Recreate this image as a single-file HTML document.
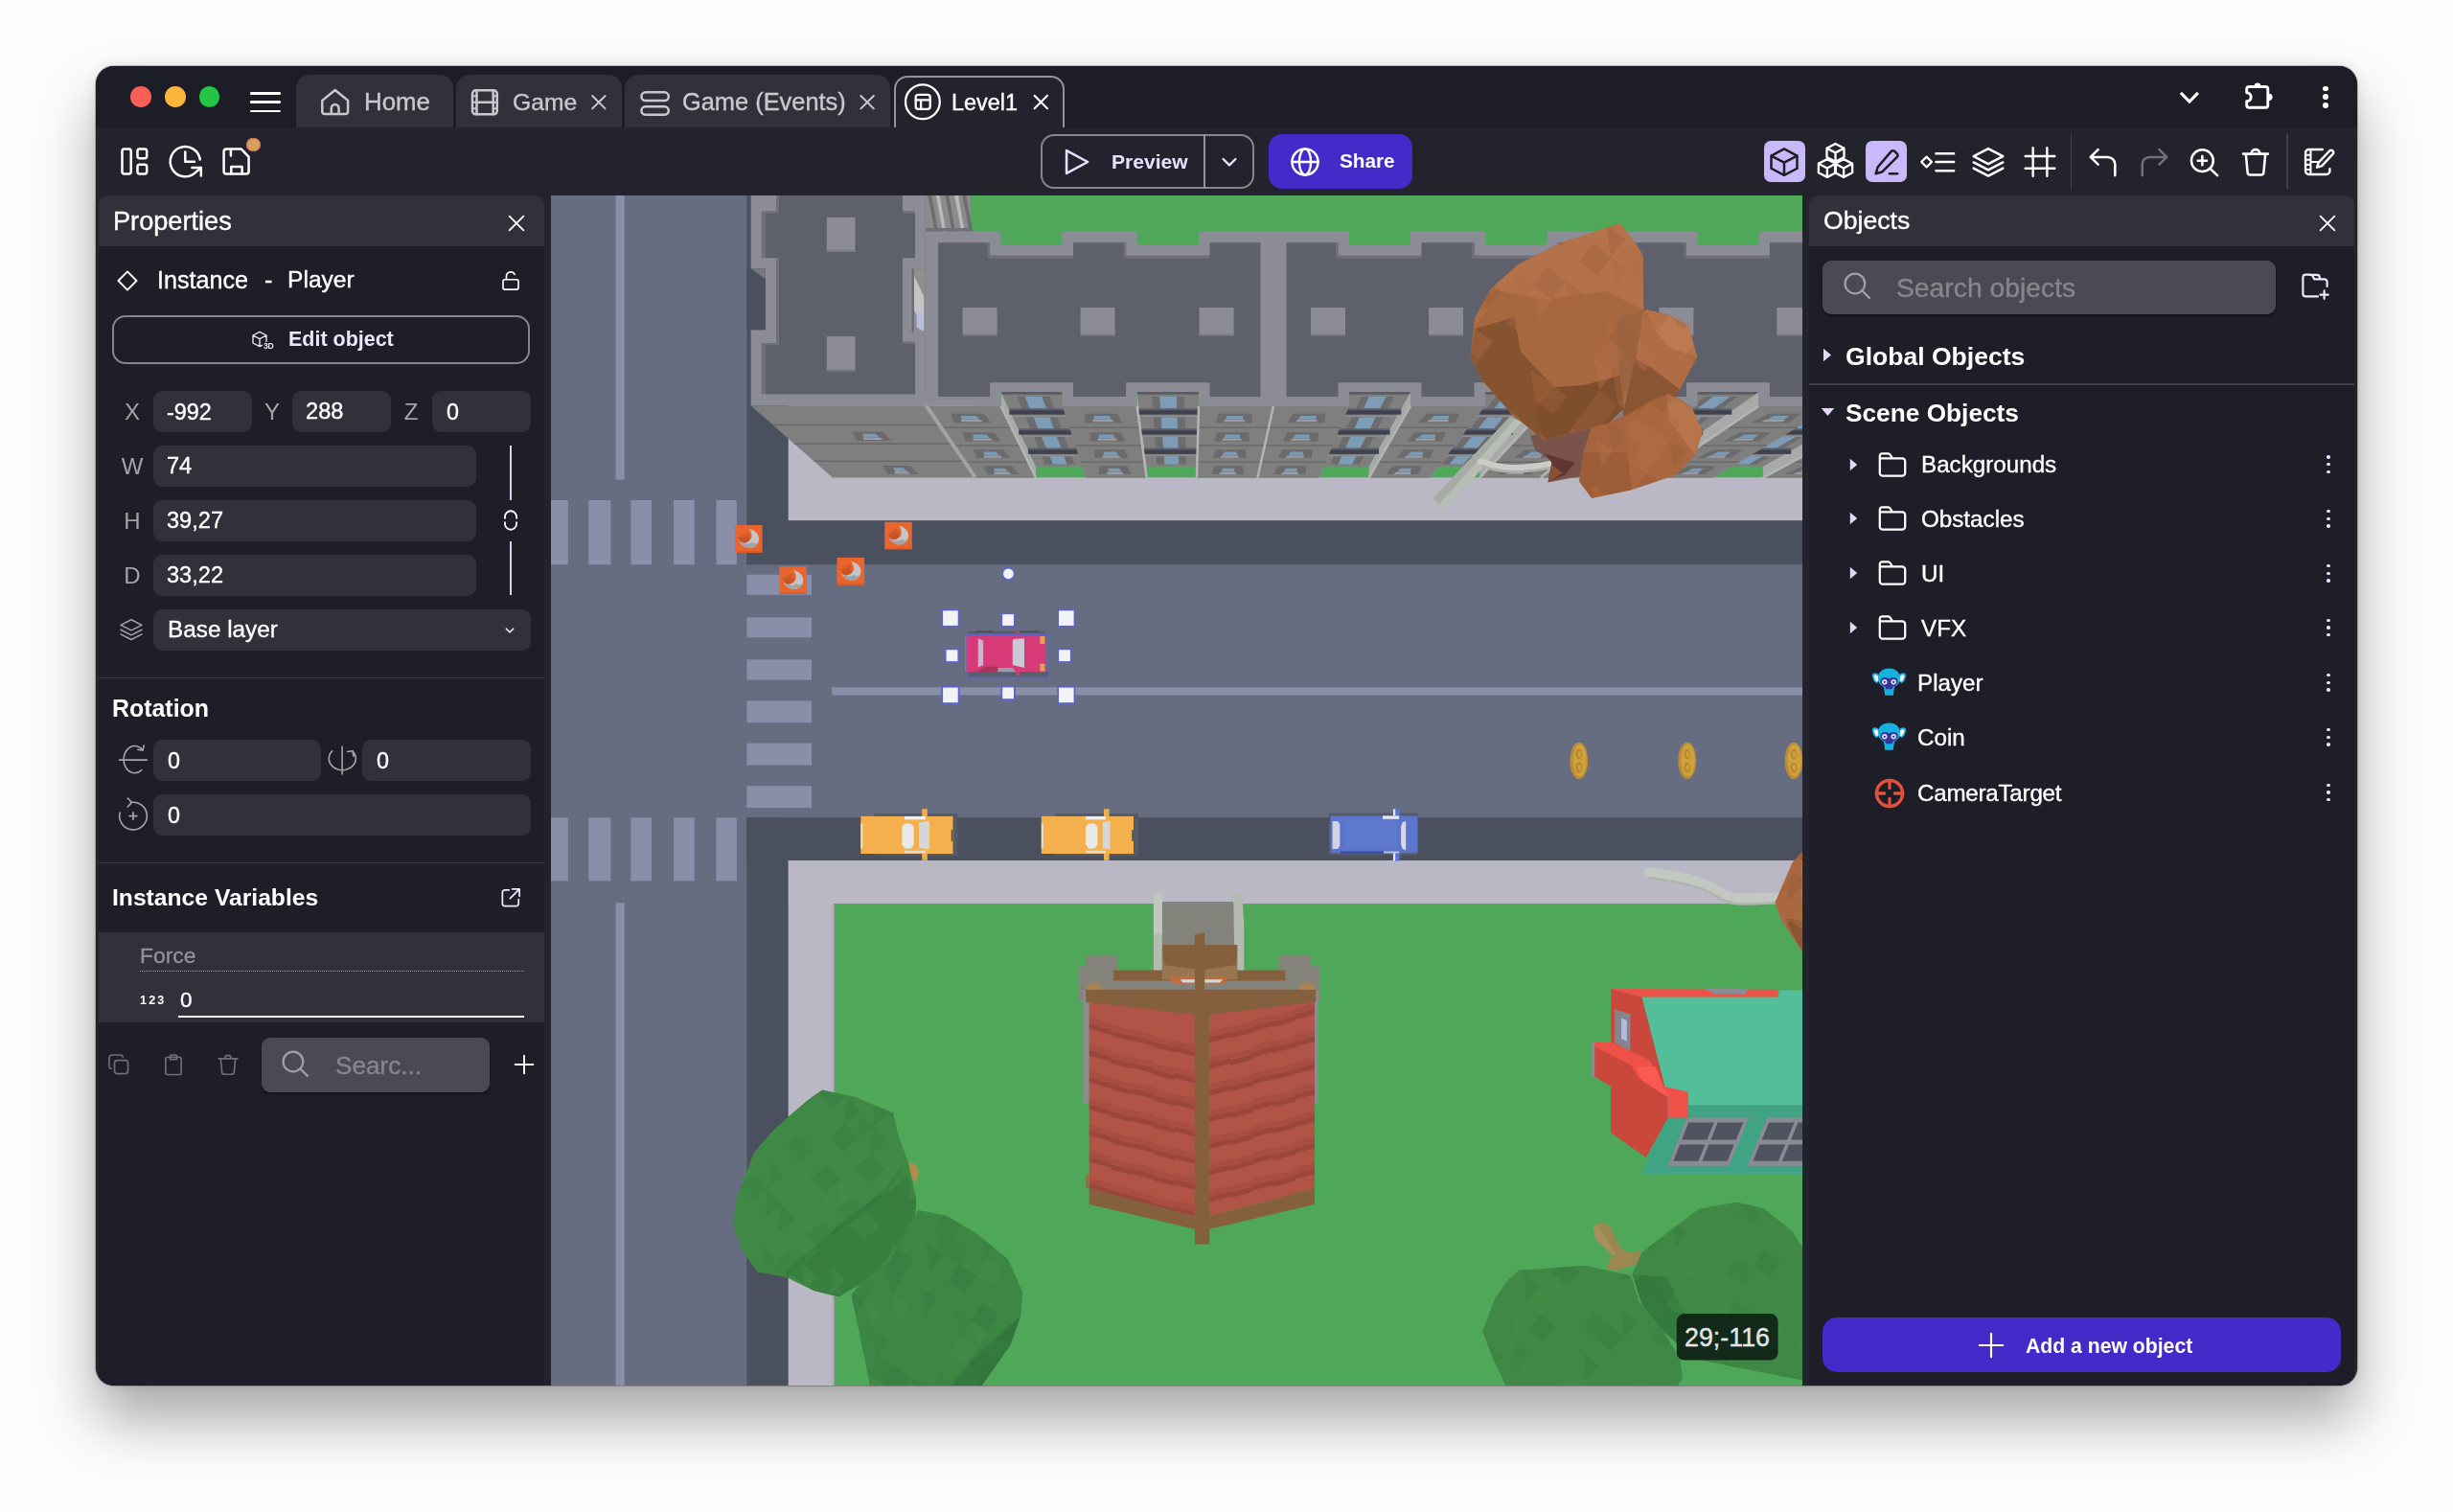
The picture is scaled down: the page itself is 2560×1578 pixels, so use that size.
<!DOCTYPE html>
<html lang="en"><head><meta charset="utf-8"><title>GDevelop - Level1</title>
<style>
html,body{margin:0;padding:0;width:2560px;height:1578px;background:#fcfcfc;overflow:hidden;font-family:"Liberation Sans",sans-serif;}
#sh{position:absolute;left:100px;top:68.5px;width:2360px;height:1377.5px;border-radius:19px;box-shadow:0 0 0 1px rgba(0,0,0,.22),0 36px 60px rgba(0,0,0,.33),0 0 12px rgba(0,0,0,.10);}
#win{position:absolute;left:100px;top:68.5px;width:2360px;height:1377.5px;border-radius:19px;background:#1c1d26;overflow:hidden;}
#o{position:absolute;left:-100px;top:-68.5px;width:2560px;height:1578px;}
.b{position:absolute;}
.t{position:absolute;white-space:nowrap;line-height:1;will-change:transform;-webkit-font-smoothing:antialiased;}
.i{position:absolute;overflow:visible;}
</style></head>
<body>
<div id="sh"></div>
<div id="win"><div id="o">
<div class="b" style="left:100.0px;top:68.0px;width:2360.0px;height:65.0px;background:#1c1d26"></div>
<div class="b" style="left:136.4px;top:90.2px;width:21.6px;height:21.6px;background:#f95f57;border-radius:50%"></div>
<div class="b" style="left:172.0px;top:90.2px;width:21.6px;height:21.6px;background:#fdb53c;border-radius:50%"></div>
<div class="b" style="left:207.6px;top:90.2px;width:21.6px;height:21.6px;background:#22c546;border-radius:50%"></div>
<div class="b" style="left:261.4px;top:96.1px;width:31.2px;height:2.6px;background:#fff;border-radius:1.3px"></div>
<div class="b" style="left:261.4px;top:105.3px;width:31.2px;height:2.6px;background:#fff;border-radius:1.3px"></div>
<div class="b" style="left:261.4px;top:114.5px;width:31.2px;height:2.6px;background:#fff;border-radius:1.3px"></div>
<div class="b" style="left:308.7px;top:78.0px;width:163.9px;height:55.0px;background:#30313b;border-radius:14px 14px 0 0"></div>
<div class="b" style="left:476.0px;top:78.0px;width:172.7px;height:55.0px;background:#30313b;border-radius:14px 14px 0 0"></div>
<div class="b" style="left:652.3px;top:78.0px;width:276.7px;height:55.0px;background:#30313b;border-radius:14px 14px 0 0"></div>
<div class="b" style="left:932.6px;top:78.5px;width:178.7px;height:56.5px;background:#22232d;border:2px solid #92929b;border-bottom:none;border-radius:14px 14px 0 0;box-sizing:border-box"></div>
<svg class="i" style="left:330.0px;top:88.0px" width="40.0" height="38.0" viewBox="330.0 88.0 40.0 38.0" fill="none" stroke-linecap="round" stroke-linejoin="round"><path d="M336.3 104.9 L349.7 94 L363.1 104.9 V116.3 a2.8 2.8 0 0 1 -2.8 2.8 H339.1 a2.8 2.8 0 0 1 -2.8 -2.8 Z M345.8 119 V112.9 a3.9 3.9 0 0 1 7.8 0 V119" stroke="#c9c9cd" stroke-width="2.5"/></svg>
<div class="t" style="left:379.6px;top:93.9px;font-size:25.87px;color:#c9c9cd;-webkit-text-stroke:0.35px #c9c9cd;">Home</div>
<svg class="i" style="left:486.0px;top:88.0px" width="40.0" height="38.0" viewBox="486.0 88.0 40.0 38.0" fill="none" stroke-linecap="round" stroke-linejoin="round"><rect x="493" y="94.3" width="25.8" height="25" rx="3.6" stroke="#c9c9cd" stroke-width="2.5"/><path d="M497.5 94.3 V119.3 M514.7 94.3 V119.3 M497.5 106.8 H514.7" stroke="#c9c9cd" stroke-width="2.5"/><path d="M493 100.3 H497.5 M493 106.8 H497.5 M493 113.3 H497.5 M514.7 100.3 H518.8 M514.7 106.8 H518.8 M514.7 113.3 H518.8" stroke="#c9c9cd" stroke-width="2"/></svg>
<div class="t" style="left:535.0px;top:94.9px;font-size:24.68px;color:#c9c9cd;-webkit-text-stroke:0.35px #c9c9cd;">Game</div>
<svg class="i" style="left:612.0px;top:94.0px" width="26.0" height="26.0" viewBox="612.0 94.0 26.0 26.0" fill="none" stroke-linecap="round" stroke-linejoin="round"><path d="M618.2 100 L631.6 113.4 M631.6 100 L618.2 113.4" stroke="#c9c9cd" stroke-width="2"/></svg>
<svg class="i" style="left:662.0px;top:88.0px" width="44.0" height="38.0" viewBox="662.0 88.0 44.0 38.0" fill="none" stroke-linecap="round" stroke-linejoin="round"><rect x="669.4" y="96.3" width="28.4" height="8.8" rx="4.4" stroke="#c9c9cd" stroke-width="2.5"/><rect x="669.4" y="111.3" width="28.4" height="8.4" rx="4.2" stroke="#c9c9cd" stroke-width="2.5"/></svg>
<div class="t" style="left:712.0px;top:94.3px;font-size:25.40px;color:#c9c9cd;-webkit-text-stroke:0.35px #c9c9cd;">Game (Events)</div>
<svg class="i" style="left:892.0px;top:94.0px" width="26.0" height="26.0" viewBox="892.0 94.0 26.0 26.0" fill="none" stroke-linecap="round" stroke-linejoin="round"><path d="M898.4 100 L911.8 113.4 M911.8 100 L898.4 113.4" stroke="#c9c9cd" stroke-width="2"/></svg>
<svg class="i" style="left:940.0px;top:84.0px" width="46.0" height="46.0" viewBox="940.0 84.0 46.0 46.0" fill="none" stroke-linecap="round" stroke-linejoin="round"><circle cx="962.9" cy="106.3" r="17.9" stroke="#fff" stroke-width="2.3"/><rect x="955.7" y="98.9" width="15" height="15" rx="2.6" stroke="#fff" stroke-width="2.3"/><path d="M955.7 104.4 H970.7 M961.1 104.4 V113.9" stroke="#fff" stroke-width="2.3"/></svg>
<div class="t" style="left:993.1px;top:95.9px;font-size:23.38px;color:#ffffff;-webkit-text-stroke:0.35px #ffffff;">Level1</div>
<svg class="i" style="left:1072.0px;top:94.0px" width="28.0" height="26.0" viewBox="1072.0 94.0 28.0 26.0" fill="none" stroke-linecap="round" stroke-linejoin="round"><path d="M1079.6 99.8 L1093 113.2 M1093 99.8 L1079.600 113.2" stroke="#fff" stroke-width="2.1"/></svg>
<svg class="i" style="left:2268.0px;top:88.0px" width="34.0" height="28.0" viewBox="2268.0 88.0 34.0 28.0" fill="none" stroke-linecap="round" stroke-linejoin="round"><path d="M2275.9 96.9 L2284.9 106.100 L2293.900 96.900" stroke="#fff" stroke-width="3.1" stroke-linecap="butt" stroke-linejoin="miter"/></svg>
<svg class="i" style="left:2336.0px;top:80.0px" width="42.0" height="40.0" viewBox="2336.0 80.0 42.0 40.0" fill="none" stroke-linecap="round" stroke-linejoin="round"><circle cx="2356" cy="89.8" r="3.4" fill="#fff"/><circle cx="2368" cy="101.3" r="3.6" fill="#fff"/><path d="M2347.2 90.5 H2364.3 a2.5 2.5 0 0 1 2.5 2.5 V109.8 a2.5 2.5 0 0 1 -2.5 2.5 H2347.2 a2.5 2.5 0 0 1 -2.5 -2.5 V105.8 a4.5 4.5 0 0 0 0 -9 V93 a2.5 2.5 0 0 1 2.5 -2.5 Z" stroke="#fff" stroke-width="2.9" fill="#1c1d26"/></svg>
<div class="b" style="left:2423.9px;top:89.5px;width:5.8px;height:5.8px;background:#fff;border-radius:50%"></div>
<div class="b" style="left:2423.9px;top:98.3px;width:5.8px;height:5.8px;background:#fff;border-radius:50%"></div>
<div class="b" style="left:2423.9px;top:107.2px;width:5.8px;height:5.8px;background:#fff;border-radius:50%"></div>
<div class="b" style="left:100.0px;top:133.0px;width:2360.0px;height:71.0px;background:#22232d"></div>
<svg class="i" style="left:120.0px;top:148.0px" width="40.0" height="42.0" viewBox="120.0 148.0 40.0 42.0" fill="none" stroke-linecap="round" stroke-linejoin="round"><rect x="127.5" y="155.6" width="9.2" height="25.9" rx="2.2" stroke="#fff" stroke-width="2.5"/><rect x="143.5" y="155.6" width="9.7" height="9.7" rx="2.2" stroke="#fff" stroke-width="2.5"/><rect x="143.5" y="171.8" width="9.7" height="9.7" rx="2.2" stroke="#fff" stroke-width="2.5"/></svg>
<svg class="i" style="left:172.0px;top:146.0px" width="44.0" height="44.0" viewBox="172.0 146.0 44.0 44.0" fill="none" stroke-linecap="round" stroke-linejoin="round"><path d="M208.75 166.5 A15.6 15.6 0 1 0 203.3 180.65 L209.8 175 M200.4 175 H209.8 V183.6" stroke="#fff" stroke-width="2.5"/><path d="M193.3 158.6 V168.7 H203" stroke="#fff" stroke-width="2.5"/></svg>
<svg class="i" style="left:226.0px;top:148.0px" width="42.0" height="42.0" viewBox="226.0 148.0 42.0 42.0" fill="none" stroke-linecap="round" stroke-linejoin="round"><path d="M236.4 155.4 H251.6 L259.6 163.6 V178.7 a2.8 2.8 0 0 1 -2.8 2.8 H236.4 a2.8 2.8 0 0 1 -2.8 -2.8 V158.2 a2.8 2.8 0 0 1 2.8 -2.8 Z" stroke="#fff" stroke-width="2.5"/><path d="M240.9 157.2 V162.6" stroke="#fff" stroke-width="2.5"/><path d="M241.3 181.2 V174 H252.6 V181.2" stroke="#fff" stroke-width="2.5"/></svg>
<div class="b" style="left:257.4px;top:143.5px;width:14.6px;height:14.6px;background:#d8a05a;border-radius:50%;box-shadow:0 0 0 1px rgba(230,95,80,.75) inset"></div>
<div class="b" style="left:1086.0px;top:140.0px;width:223.0px;height:57.0px;border:2px solid #858591;border-radius:14px;box-sizing:border-box"></div>
<div class="b" style="left:1256.0px;top:140.0px;width:2.0px;height:57.0px;background:#a08da4"></div>
<svg class="i" style="left:1106.4px;top:151.7px;" width="34.0" height="34.0" viewBox="0 0 24 24" fill="none" stroke-linecap="round" stroke-linejoin="round"><path d="M5 3.6 L20.6 12 L5 20.4 Z" stroke="#e9e1fd" stroke-width="1.80"/></svg>
<div class="t" style="left:1160.3px;top:157.6px;font-size:21.08px;color:#e9e1fd;font-weight:700;">Preview</div>
<svg class="i" style="left:1270.6px;top:157.3px;" width="24.0" height="24.0" viewBox="0 0 24 24" fill="none" stroke-linecap="round" stroke-linejoin="round"><path d="M5.6 9 L12 15.4 L18.4 9" stroke="#e9e1fd" stroke-width="2.40"/></svg>
<div class="b" style="left:1323.6px;top:140.4px;width:150.8px;height:56.4px;background:#442ac8;border-radius:14px"></div>
<svg class="i" style="left:1345.3px;top:151.5px;" width="34.0" height="34.0" viewBox="0 0 24 24" fill="none" stroke-linecap="round" stroke-linejoin="round"><circle cx="12" cy="12" r="9.6" stroke="#ffffff" stroke-width="1.70"/><ellipse cx="12" cy="12" rx="4.3" ry="9.6" stroke="#ffffff" stroke-width="1.70"/><path d="M2.4 12 H21.6" stroke="#ffffff" stroke-width="1.70"/></svg>
<div class="t" style="left:1398.4px;top:157.9px;font-size:20.72px;color:#ffffff;font-weight:700;">Share</div>
<div class="b" style="left:1841.0px;top:146.8px;width:42.8px;height:43.1px;background:#c9b8fa;border-radius:7px"></div>
<svg class="i" style="left:1844.3px;top:150.6px;" width="36.0" height="36.0" viewBox="0 0 24 24" fill="none" stroke-linecap="round" stroke-linejoin="round"><path d="M12 2.9 L21 7.7 V16.5 L12 21.2 L3 16.5 V7.7 Z M3 7.7 L12 12.4 L21 7.7 M12 12.4 V21.2" stroke="#1d1d26" stroke-width="1.65"/></svg>
<svg class="i" style="left:1893.2px;top:146.9px;" width="45.0" height="45.0" viewBox="0 0 24 24" fill="none" stroke-linecap="round" stroke-linejoin="round"><path d="M12.0 1.6 l4.8 2.5 v5 l-4.8 2.5 l-4.8 -2.5 v-5 Z m-4.8 2.5 l4.8 2.5 l4.8 -2.5 m-4.8 2.5 v5" stroke="#ffffff" stroke-width="1.25"/><path d="M7.4 10.2 l4.8 2.5 v5 l-4.8 2.5 l-4.8 -2.5 v-5 Z m-4.8 2.5 l4.8 2.5 l4.8 -2.5 m-4.8 2.5 v5" stroke="#ffffff" stroke-width="1.25"/><path d="M16.6 10.2 l4.8 2.5 v5 l-4.8 2.5 l-4.8 -2.5 v-5 Z m-4.8 2.5 l4.8 2.5 l4.8 -2.5 m-4.8 2.5 v5" stroke="#ffffff" stroke-width="1.25"/></svg>
<div class="b" style="left:1947.4px;top:146.8px;width:42.7px;height:43.1px;background:#c9b8fa;border-radius:7px"></div>
<svg class="i" style="left:1950.6px;top:150.6px;" width="36.0" height="36.0" viewBox="0 0 24 24" fill="none" stroke-linecap="round" stroke-linejoin="round"><path d="M15.2 4.6 a1.6 1.6 0 0 1 2.3 0 l1.7 1.7 a1.6 1.6 0 0 1 0 2.3 L9 18.8 L4.4 20.2 L5.8 15.6 Z" stroke="#1d1d26" stroke-width="1.65"/><path d="M14 20.2 H19.4" stroke="#1d1d26" stroke-width="1.65"/></svg>
<svg class="i" style="left:2007.0px;top:150.6px;" width="36.0" height="36.0" viewBox="0 0 24 24" fill="none" stroke-linecap="round" stroke-linejoin="round"><path d="M2.4 8.4 L6 12 L2.4 15.6 L-1.2 12 Z" stroke="#ffffff" stroke-width="1.50"/><path d="M9 6.2 H21.4 M9 12 H21.4 M9 18.2 H21.4" stroke="#ffffff" stroke-width="1.70"/></svg>
<svg class="i" style="left:2057.3px;top:150.6px;" width="36.0" height="36.0" viewBox="0 0 24 24" fill="none" stroke-linecap="round" stroke-linejoin="round"><path d="M12 2.8 L22.2 8.1 L12 13.4 L1.8 8.1 Z" stroke="#ffffff" stroke-width="1.65"/><path d="M1.8 12.3 L12 17.6 L22.2 12.3 M1.8 16.4 L12 21.7 L22.2 16.4" stroke="#ffffff" stroke-width="1.65"/></svg>
<svg class="i" style="left:2110.7px;top:150.6px;" width="36.0" height="36.0" viewBox="0 0 24 24" fill="none" stroke-linecap="round" stroke-linejoin="round"><path d="M7.1 2.2 V21.8 M16.9 2.2 V21.8 M1.8 8 H22.2 M1.8 16.5 H22.2" stroke="#ffffff" stroke-width="1.60"/></svg>
<div class="b" style="left:2160.8px;top:140.4px;width:1.4px;height:56.5px;background:#3f4350"></div>
<svg class="i" style="left:2176.5px;top:150.6px;" width="36.0" height="36.0" viewBox="0 0 24 24" fill="none" stroke-linecap="round" stroke-linejoin="round"><path d="M8.4 3.4 L3.2 8.6 L8.4 13.8 M3.2 8.6 H15.2 a5 5 0 0 1 5 5 V21.4" stroke="#ffffff" stroke-width="1.70"/></svg>
<svg class="i" style="left:2229.8px;top:150.6px;" width="36.0" height="36.0" viewBox="0 0 24 24" fill="none" stroke-linecap="round" stroke-linejoin="round"><path d="M15.6 3.4 L20.8 8.6 L15.6 13.8 M20.8 8.6 H8.8 a5 5 0 0 0 -5 5 V21.4" stroke="#6e6f78" stroke-width="1.70"/></svg>
<svg class="i" style="left:2282.4px;top:150.6px;" width="36.0" height="36.0" viewBox="0 0 24 24" fill="none" stroke-linecap="round" stroke-linejoin="round"><circle cx="10.9" cy="11.1" r="7.6" stroke="#ffffff" stroke-width="1.70"/><path d="M16.5 16.7 L21.4 21.4 M10.9 8 V14.2 M7.8 11.1 H14" stroke="#ffffff" stroke-width="1.70"/></svg>
<svg class="i" style="left:2336.0px;top:150.6px;" width="36.0" height="36.0" viewBox="0 0 24 24" fill="none" stroke-linecap="round" stroke-linejoin="round"><path d="M3.4 6.4 H20.6 M9 6.4 C9 2.4 15 2.4 15 6.4 M5.2 6.4 L6.4 19.2 a2 2 0 0 0 2 1.8 H15.6 a2 2 0 0 0 2 -1.8 L18.8 6.4" stroke="#ffffff" stroke-width="1.70"/></svg>
<div class="b" style="left:2386.2px;top:140.4px;width:1.4px;height:56.5px;background:#3f4350"></div>
<svg class="i" style="left:2401.4px;top:149.8px;" width="38.0" height="38.0" viewBox="0 0 24 24" fill="none" stroke-linecap="round" stroke-linejoin="round"><path d="M14.4 3.8 H5.4 a2.2 2.2 0 0 0 -2.2 2.2 V18 a2.2 2.2 0 0 0 2.2 2.2 H17 a2.2 2.2 0 0 0 2.2 -2.2 V16.6" stroke="#ffffff" stroke-width="1.50"/><path d="M6.6 3.8 V20.2 M3.2 7.4 H6.6 M3.2 10.6 H6.6 M3.2 13.8 H6.6 M3.2 17 H6.6 M6.6 12 H11.4" stroke="#ffffff" stroke-width="1.30"/><path d="M19.2 4.6 a1.5 1.5 0 0 1 2.1 2.1 L14 14.6 L10.8 15.6 L11.8 12.4 Z" stroke="#ffffff" stroke-width="1.50"/></svg>
<div class="b" style="left:100.0px;top:204.0px;width:475.0px;height:1242.0px;background:#22232d"></div>
<div class="b" style="left:103.0px;top:204.0px;width:465.0px;height:1242.0px;background:#1d1e27;border-radius:9px 9px 0 0"></div>
<div class="b" style="left:103.0px;top:204.0px;width:465.0px;height:53.0px;background:#30313b;border-radius:9px 9px 0 0"></div>
<div class="t" style="left:118.2px;top:216.8px;font-size:27.16px;color:#ffffff;-webkit-text-stroke:0.35px #ffffff;">Properties</div>
<svg class="i" style="left:526.4px;top:219.9px;" width="26.0" height="26.0" viewBox="0 0 24 24" fill="none" stroke-linecap="round" stroke-linejoin="round"><path d="M5.2 5.2 L18.8 18.8 M18.8 5.2 L5.2 18.8" stroke="#ffffff" stroke-width="1.70"/></svg>
<svg class="i" style="left:120.3px;top:279.7px;" width="26.0" height="26.0" viewBox="0 0 24 24" fill="none" stroke-linecap="round" stroke-linejoin="round"><path d="M12 3.2 L20.8 12 L12 20.8 L3.2 12 Z" stroke="#ffffff" stroke-width="1.70"/></svg>
<div class="t" style="left:164.0px;top:279.9px;font-size:25.13px;color:#ffffff;-webkit-text-stroke:0.35px #ffffff;">Instance</div>
<div class="t" style="left:275.6px;top:280.0px;font-size:25.00px;color:#ffffff;-webkit-text-stroke:0.35px #ffffff;">-</div>
<div class="t" style="left:300.2px;top:280.4px;font-size:24.62px;color:#ffffff;-webkit-text-stroke:0.35px #ffffff;">Player</div>
<svg class="i" style="left:520.0px;top:280.2px;" width="26.0" height="26.0" viewBox="0 0 24 24" fill="none" stroke-linecap="round" stroke-linejoin="round"><rect x="4.6" y="10.8" width="14.8" height="9.6" rx="1.8" stroke="#ffffff" stroke-width="1.50"/><path d="M7.8 10.8 V7.6 a4.2 4.2 0 0 1 8 -1.6" stroke="#ffffff" stroke-width="1.50"/></svg>
<div class="b" style="left:117.0px;top:329.0px;width:436.0px;height:51.0px;border:2px solid #858591;border-radius:14px;box-sizing:border-box"></div>
<svg class="i" style="left:261.0px;top:343.2px;" width="24.0" height="24.0" viewBox="0 0 24 24" fill="none" stroke-linecap="round" stroke-linejoin="round"><path d="M10 3.4 L17 7 V13.4 M10 3.4 L3 7 V15 L10 18.6 L12.4 17.4 M3 7 L10 10.6 L17 7 M10 10.6 V18.6" stroke="#ece6fc" stroke-width="1.35"/></svg>
<div class="t" style="left:274.5px;top:356.6px;font-size:8.6px;font-weight:700;color:#ece6fc;letter-spacing:-0.2px">3D</div>
<div class="t" style="left:300.7px;top:343.9px;font-size:21.48px;color:#ece6fc;font-weight:700;">Edit object</div>
<div class="b" style="left:159.5px;top:408.0px;width:103.5px;height:43.0px;background:#30313b;border-radius:9px"></div>
<div class="b" style="left:305.0px;top:408.0px;width:103.3px;height:43.0px;background:#30313b;border-radius:9px"></div>
<div class="b" style="left:450.6px;top:408.0px;width:103.2px;height:43.0px;background:#30313b;border-radius:9px"></div>
<div class="t" style="left:118.0px;top:418.3px;width:40px;text-align:center;font-size:24px;color:#a4a4a8">X</div>
<div class="t" style="left:263.5px;top:418.3px;width:40px;text-align:center;font-size:24px;color:#a4a4a8">Y</div>
<div class="t" style="left:408.8px;top:418.3px;width:40px;text-align:center;font-size:24px;color:#a4a4a8">Z</div>
<div class="t" style="left:174.2px;top:418.6px;font-size:23.38px;color:#ffffff;-webkit-text-stroke:0.35px #ffffff;">-992</div>
<div class="t" style="left:319.4px;top:418.4px;font-size:23.61px;color:#ffffff;-webkit-text-stroke:0.35px #ffffff;">288</div>
<div class="t" style="left:465.5px;top:418.6px;font-size:23.37px;color:#ffffff;-webkit-text-stroke:0.35px #ffffff;">0</div>
<div class="b" style="left:159.5px;top:465.0px;width:337.5px;height:43.0px;background:#30313b;border-radius:9px"></div>
<div class="t" style="left:118.0px;top:475.3px;width:40px;text-align:center;font-size:24px;color:#a4a4a8">W</div>
<div class="t" style="left:174.2px;top:475.4px;font-size:23.60px;color:#ffffff;-webkit-text-stroke:0.35px #ffffff;">74</div>
<div class="b" style="left:159.5px;top:522.0px;width:337.5px;height:43.0px;background:#30313b;border-radius:9px"></div>
<div class="t" style="left:118.0px;top:532.3px;width:40px;text-align:center;font-size:24px;color:#a4a4a8">H</div>
<div class="t" style="left:174.2px;top:532.4px;font-size:23.60px;color:#ffffff;-webkit-text-stroke:0.35px #ffffff;">39,27</div>
<div class="b" style="left:159.5px;top:579.0px;width:337.5px;height:43.0px;background:#30313b;border-radius:9px"></div>
<div class="t" style="left:118.0px;top:589.3px;width:40px;text-align:center;font-size:24px;color:#a4a4a8">D</div>
<div class="t" style="left:174.2px;top:589.4px;font-size:23.60px;color:#ffffff;-webkit-text-stroke:0.35px #ffffff;">33,22</div>
<div class="b" style="left:531.8px;top:465.0px;width:2.0px;height:56.5px;background:#dcd0f5"></div>
<div class="b" style="left:531.8px;top:564.5px;width:2.0px;height:56.5px;background:#dcd0f5"></div>
<svg class="i" style="left:519.8px;top:530.0px;" width="26.0" height="26.0" viewBox="0 0 24 24" fill="none" stroke-linecap="round" stroke-linejoin="round"><path d="M6.4 10 V8.6 a5.6 5.6 0 0 1 11.2 0 V10 M6.4 14 V15.4 a5.6 5.6 0 0 0 11.2 0 V14" stroke="#ffffff" stroke-width="1.70"/></svg>
<div class="b" style="left:159.5px;top:636.0px;width:394.3px;height:42.5px;background:#30313b;border-radius:9px"></div>
<svg class="i" style="left:122.5px;top:643.0px;" width="28.0" height="28.0" viewBox="0 0 24 24" fill="none" stroke-linecap="round" stroke-linejoin="round"><path d="M12 3.2 L21.4 8 L12 12.8 L2.6 8 Z" stroke="#a4a4a8" stroke-width="1.30"/><path d="M2.6 12.2 L12 17 L21.4 12.2 M2.6 16.2 L12 21 L21.4 16.2" stroke="#a4a4a8" stroke-width="1.30"/></svg>
<div class="t" style="left:174.6px;top:644.9px;font-size:24.32px;color:#ffffff;-webkit-text-stroke:0.35px #ffffff;">Base layer</div>
<svg class="i" style="left:524.4px;top:649.6px;" width="16.0" height="16.0" viewBox="0 0 24 24" fill="none" stroke-linecap="round" stroke-linejoin="round"><path d="M6.4 9.2 L12 14.8 L17.6 9.2" stroke="#e6e0f5" stroke-width="2.20"/></svg>
<div class="b" style="left:103.0px;top:706.6px;width:465.0px;height:1.6px;background:#3b3f4c"></div>
<div class="t" style="left:117.4px;top:727.3px;font-size:24.91px;color:#ffffff;font-weight:700;">Rotation</div>
<div class="b" style="left:159.5px;top:772.0px;width:175.9px;height:42.7px;background:#30313b;border-radius:9px"></div>
<div class="b" style="left:377.8px;top:772.0px;width:176.0px;height:42.7px;background:#30313b;border-radius:9px"></div>
<div class="b" style="left:159.5px;top:829.0px;width:394.3px;height:42.5px;background:#30313b;border-radius:9px"></div>
<div class="t" style="left:174.5px;top:782.6px;font-size:23.37px;color:#ffffff;-webkit-text-stroke:0.35px #ffffff;">0</div>
<div class="t" style="left:393.0px;top:782.6px;font-size:23.37px;color:#ffffff;-webkit-text-stroke:0.35px #ffffff;">0</div>
<div class="t" style="left:174.5px;top:839.6px;font-size:23.37px;color:#ffffff;-webkit-text-stroke:0.35px #ffffff;">0</div>
<svg class="i" style="left:122.6px;top:777.0px;" width="32.0" height="32.0" viewBox="0 0 24 24" fill="none" stroke-linecap="round" stroke-linejoin="round"><path d="M1.2 12.1 H22.7 M18.7 19.9 A8.6 10.6 0 1 1 19.3 4.3 M20.4 0.8 L19.5 4.6 L15.6 4" stroke="#a4a4a8" stroke-width="1.20"/></svg>
<svg class="i" style="left:340.8px;top:777.0px;" width="32.0" height="32.0" viewBox="0 0 24 24" fill="none" stroke-linecap="round" stroke-linejoin="round"><path d="M12.1 1.6 V23.2 M4.2 5.2 A10.5 9 0 1 0 20.2 5.2 M16.2 5.6 L20.3 5 L20.9 9.2" stroke="#a4a4a8" stroke-width="1.20"/></svg>
<svg class="i" style="left:118.6px;top:830.4px;" width="40.0" height="40.0" viewBox="0 0 24 24" fill="none" stroke-linecap="round" stroke-linejoin="round"><path d="M10.5 4.5 A8.6 8.6 0 1 1 3.7 10.8 M8.6 1.9 L11.2 4.5 L8.6 7.1 M9.7 13 H14.3 M12 10.7 V15.3" stroke="#a4a4a8" stroke-width="1.00"/></svg>
<div class="b" style="left:103.0px;top:899.8px;width:465.0px;height:1.6px;background:#3b3f4c"></div>
<div class="t" style="left:117.4px;top:925.1px;font-size:24.67px;color:#ffffff;font-weight:700;">Instance Variables</div>
<svg class="i" style="left:520.0px;top:924.0px;" width="26.0" height="26.0" viewBox="0 0 24 24" fill="none" stroke-linecap="round" stroke-linejoin="round"><path d="M10.4 4.4 H6.4 a2.4 2.4 0 0 0 -2.4 2.4 V17.6 a2.4 2.4 0 0 0 2.4 2.4 H17.2 a2.4 2.4 0 0 0 2.4 -2.4 V13.6 M13.6 3.6 H20.4 V10.4 M20.2 3.8 L11.4 12.6" stroke="#efe9ff" stroke-width="1.60"/></svg>
<div class="b" style="left:103.0px;top:972.6px;width:465.0px;height:94.4px;background:#30313b"></div>
<div class="t" style="left:146.0px;top:986.0px;font-size:22.89px;color:#8f91a1;-webkit-text-stroke:0.35px #8f91a1;">Force</div>
<div class="b" style="left:146.0px;top:1012.6px;width:401.0px;height:2.0px;border-top:1.6px dotted #9495a1;box-sizing:border-box"></div>
<div class="t" style="left:145.5px;top:1037.5px;font-size:12.5px;font-weight:700;color:#fff;letter-spacing:2.2px">123</div>
<div class="t" style="left:187.5px;top:1033.0px;font-size:22.48px;color:#ffffff;-webkit-text-stroke:0.35px #ffffff;">0</div>
<div class="b" style="left:186.0px;top:1059.6px;width:361.0px;height:2.2px;background:#fff"></div>
<svg class="i" style="left:110.2px;top:1097.4px;" width="28.0" height="28.0" viewBox="0 0 24 24" fill="none" stroke-linecap="round" stroke-linejoin="round"><rect x="8.2" y="8.2" width="12" height="12" rx="2.6" stroke="#6f707a" stroke-width="1.40"/><path d="M5.4 15.6 a2 2 0 0 1 -2 -2 V6 a2.6 2.6 0 0 1 2.6 -2.6 H13.6 a2 2 0 0 1 2 2" stroke="#6f707a" stroke-width="1.40"/></svg>
<svg class="i" style="left:167.4px;top:1097.4px;" width="28.0" height="28.0" viewBox="0 0 24 24" fill="none" stroke-linecap="round" stroke-linejoin="round"><rect x="5" y="5.4" width="14" height="15.6" rx="2" stroke="#6f707a" stroke-width="1.40"/><path d="M9 5.4 V4.6 a1.2 1.2 0 0 1 1.2 -1.2 H13.8 a1.2 1.2 0 0 1 1.2 1.2 V7.4 H9 Z" stroke="#6f707a" stroke-width="1.40"/></svg>
<svg class="i" style="left:223.8px;top:1097.4px;" width="28.0" height="28.0" viewBox="0 0 24 24" fill="none" stroke-linecap="round" stroke-linejoin="round"><path d="M3.6 6.8 H20.4 M9.2 6.8 C9.2 2.8 14.8 2.8 14.8 6.8 M5.4 6.8 L6.6 19 a2 2 0 0 0 2 1.8 H15.4 a2 2 0 0 0 2 -1.8 L18.6 6.8" stroke="#6f707a" stroke-width="1.40"/></svg>
<div class="b" style="left:273.0px;top:1083.0px;width:238.0px;height:56.7px;background:#494a54;border-radius:9px;box-shadow:0 1.5px 2px rgba(0,0,0,.35)"></div>
<svg class="i" style="left:290.4px;top:1091.6px;" width="36.0" height="36.0" viewBox="0 0 24 24" fill="none" stroke-linecap="round" stroke-linejoin="round"><circle cx="10.6" cy="10.6" r="6.9" stroke="#9fa0a6" stroke-width="1.50"/><path d="M15.8 15.8 L20.6 20.6" stroke="#9fa0a6" stroke-width="1.50"/></svg>
<div class="t" style="left:350.0px;top:1098.5px;font-size:26.12px;color:#86878d;-webkit-text-stroke:0.35px #86878d;">Searc...</div>
<svg class="i" style="left:533.0px;top:1097.4px;" width="28.0" height="28.0" viewBox="0 0 24 24" fill="none" stroke-linecap="round" stroke-linejoin="round"><path d="M12 4 V20 M4 12 H20" stroke="#ffffff" stroke-width="1.60"/></svg>
<div class="b" style="left:1881.0px;top:204.0px;width:579.0px;height:1242.0px;background:#22232d"></div>
<div class="b" style="left:1888.0px;top:204.0px;width:569.3px;height:1242.0px;background:#1d1e27;border-radius:9px 9px 0 0"></div>
<div class="b" style="left:1888.0px;top:204.0px;width:569.3px;height:53.0px;background:#30313b;border-radius:9px 9px 0 0"></div>
<div class="t" style="left:1903.0px;top:217.3px;font-size:26.61px;color:#ffffff;-webkit-text-stroke:0.35px #ffffff;">Objects</div>
<svg class="i" style="left:2415.6px;top:219.9px;" width="26.0" height="26.0" viewBox="0 0 24 24" fill="none" stroke-linecap="round" stroke-linejoin="round"><path d="M5.2 5.2 L18.8 18.8 M18.8 5.2 L5.2 18.8" stroke="#ffffff" stroke-width="1.70"/></svg>
<div class="b" style="left:1902.4px;top:271.8px;width:472.6px;height:56.2px;background:#494a54;border-radius:9px;box-shadow:0 1.5px 2px rgba(0,0,0,.35)"></div>
<svg class="i" style="left:1920.0px;top:280.4px;" width="36.0" height="36.0" viewBox="0 0 24 24" fill="none" stroke-linecap="round" stroke-linejoin="round"><circle cx="10.6" cy="10.6" r="6.9" stroke="#9fa0a6" stroke-width="1.50"/><path d="M15.800 15.800 L20.600 20.600" stroke="#9fa0a6" stroke-width="1.50"/></svg>
<div class="t" style="left:1979.3px;top:285.6px;font-size:28.30px;color:#86878d;-webkit-text-stroke:0.35px #86878d;">Search objects</div>
<svg class="i" style="left:2398.0px;top:280.0px;" width="36.0" height="36.0" viewBox="0 0 24 24" fill="none" stroke-linecap="round" stroke-linejoin="round"><path d="M20.400 12.600 V9.400 a1.800 1.800 0 0 0 -1.800 -1.800 H11.600 L10.200 5.200 a1.800 1.800 0 0 0 -1.500 -0.800 H5.400 a1.800 1.800 0 0 0 -1.800 1.800 V17.800 a1.800 1.800 0 0 0 1.800 1.800 H14 M8 4.600 H13.400 a1.800 1.800 0 0 1 1.800 1.800 V7.400 M18.400 15.600 V21.200 M15.600 18.400 H21.200" stroke="#efe9ff" stroke-width="1.45"/></svg>
<svg class="i" style="left:1901.8px;top:363px" width="10" height="15" viewBox="0 0 10 15"><path d="M1 0.800 L9 7.500 L1 14.200 Z" fill="#e2d8fa"/></svg>
<div class="t" style="left:1926.0px;top:358.9px;font-size:26.55px;color:#ffffff;font-weight:700;">Global Objects</div>
<div class="b" style="left:1888.0px;top:400.0px;width:569.3px;height:1.5px;background:#3b3f4c"></div>
<svg class="i" style="left:1899.6px;top:425.4px" width="15" height="10" viewBox="0 0 15 10"><path d="M0.800 1 L14.200 1 L7.500 9 Z" fill="#e2d8fa"/></svg>
<div class="t" style="left:1926.0px;top:417.5px;font-size:26.26px;color:#ffffff;font-weight:700;">Scene Objects</div>
<svg class="i" style="left:1930.200px;top:477.8px" width="9" height="14" viewBox="0 0 9 14"><path d="M0.800 0.800 L8.200 7 L0.800 13.200 Z" fill="#e2d8fa"/></svg>
<svg class="i" style="left:1956.8px;top:466.8px;" width="36.0" height="36.0" viewBox="0 0 24 24" fill="none" stroke-linecap="round" stroke-linejoin="round"><path d="M3.200 7.600 V17.800 a2 2 0 0 0 2 2 H18.800 a2 2 0 0 0 2 -2 V9.600 a2 2 0 0 0 -2 -2 Z M3.200 7.600 V5.800 a1.600 1.600 0 0 1 1.600 -1.600 H9 a1.600 1.600 0 0 1 1.400 0.800 L12 7.600" stroke="#ffffff" stroke-width="1.50"/></svg>
<div class="t" style="left:2004.6px;top:473.3px;font-size:24.20px;color:#ffffff;-webkit-text-stroke:0.35px #ffffff;">Backgrounds</div>
<svg class="i" style="left:1930.200px;top:534.3px" width="9" height="14" viewBox="0 0 9 14"><path d="M0.800 0.800 L8.200 7 L0.800 13.200 Z" fill="#e2d8fa"/></svg>
<svg class="i" style="left:1956.8px;top:523.3px;" width="36.0" height="36.0" viewBox="0 0 24 24" fill="none" stroke-linecap="round" stroke-linejoin="round"><path d="M3.200 7.600 V17.800 a2 2 0 0 0 2 2 H18.800 a2 2 0 0 0 2 -2 V9.600 a2 2 0 0 0 -2 -2 Z M3.200 7.600 V5.800 a1.600 1.600 0 0 1 1.600 -1.600 H9 a1.600 1.600 0 0 1 1.400 0.800 L12 7.600" stroke="#ffffff" stroke-width="1.50"/></svg>
<div class="t" style="left:2004.6px;top:529.8px;font-size:24.20px;color:#ffffff;-webkit-text-stroke:0.35px #ffffff;">Obstacles</div>
<svg class="i" style="left:1930.200px;top:591.3px" width="9" height="14" viewBox="0 0 9 14"><path d="M0.800 0.800 L8.200 7 L0.800 13.200 Z" fill="#e2d8fa"/></svg>
<svg class="i" style="left:1956.8px;top:580.3px;" width="36.0" height="36.0" viewBox="0 0 24 24" fill="none" stroke-linecap="round" stroke-linejoin="round"><path d="M3.200 7.600 V17.800 a2 2 0 0 0 2 2 H18.800 a2 2 0 0 0 2 -2 V9.600 a2 2 0 0 0 -2 -2 Z M3.200 7.600 V5.800 a1.600 1.600 0 0 1 1.600 -1.600 H9 a1.600 1.600 0 0 1 1.400 0.800 L12 7.600" stroke="#ffffff" stroke-width="1.50"/></svg>
<div class="t" style="left:2004.6px;top:586.8px;font-size:24.20px;color:#ffffff;-webkit-text-stroke:0.35px #ffffff;">UI</div>
<svg class="i" style="left:1930.200px;top:648.0px" width="9" height="14" viewBox="0 0 9 14"><path d="M0.800 0.800 L8.200 7 L0.800 13.200 Z" fill="#e2d8fa"/></svg>
<svg class="i" style="left:1956.8px;top:637.0px;" width="36.0" height="36.0" viewBox="0 0 24 24" fill="none" stroke-linecap="round" stroke-linejoin="round"><path d="M3.200 7.600 V17.800 a2 2 0 0 0 2 2 H18.800 a2 2 0 0 0 2 -2 V9.600 a2 2 0 0 0 -2 -2 Z M3.200 7.600 V5.800 a1.600 1.600 0 0 1 1.600 -1.600 H9 a1.600 1.600 0 0 1 1.400 0.800 L12 7.600" stroke="#ffffff" stroke-width="1.50"/></svg>
<div class="t" style="left:2004.6px;top:643.5px;font-size:24.20px;color:#ffffff;-webkit-text-stroke:0.35px #ffffff;">VFX</div>
<svg class="i" style="left:1953.0px;top:697.3px" width="37" height="30" viewBox="0 0 37 30">
<path d="M1 8.5 C0 5.5 3.5 4.2 7 6.2 L10 12.5 L5.5 16 C2.5 15 1.5 11.5 1 8.5Z" fill="#17b1e0"/>
<path d="M36 8.5 C37 5.5 33.500 4.2 30 6.2 L27 12.5 L31.500 16 C34.500 15 35.500 11.500 36 8.500Z" fill="#17b1e0"/>
<path d="M2.6 8.600 C3 7 5 7 6.600 8.200 L8.800 12.600 L5.800 14.600 C4 13.600 3 11 2.600 8.600Z" fill="#f4f6fb"/>
<path d="M34.400 8.600 C34 7 32 7 30.400 8.200 L28.200 12.600 L31.200 14.600 C33 13.600 34 11 34.400 8.600Z" fill="#f4f6fb"/>
<path d="M18.500 0.600 C25.500 0.600 30 5 30 10.500 C30 15.500 27 18.500 24 20 L22.800 28.600 L14.200 28.600 L13 20 C10 18.500 7 15.500 7 10.500 C7 5 11.500 0.600 18.500 0.600Z" fill="#17b1e0"/>
<path d="M9.600 12.600 C10.600 9.800 14 9.200 18.500 11.200 C23 9.200 26.400 9.800 27.400 12.600 C28.200 16.600 25.200 19.200 22.800 19.600 L21.400 22.400 L15.600 22.400 L14.200 19.600 C11.800 19.200 8.800 16.600 9.600 12.600Z" fill="#33359b"/>
<circle cx="13.800" cy="14.800" r="2.700" fill="#dfe3f7"/><circle cx="23.200" cy="14.800" r="2.700" fill="#dfe3f7"/>
<circle cx="13.800" cy="14.800" r="1.150" fill="#33359b"/><circle cx="23.200" cy="14.800" r="1.150" fill="#33359b"/>
<path d="M15.400 22.400 L21.600 22.400 L22.600 28.600 L14.400 28.600Z" fill="#17b1e0"/>
</svg>
<div class="t" style="left:2001.0px;top:700.8px;font-size:24.20px;color:#ffffff;-webkit-text-stroke:0.35px #ffffff;">Player</div>
<svg class="i" style="left:1953.0px;top:754.2px" width="37" height="30" viewBox="0 0 37 30">
<path d="M1 8.5 C0 5.5 3.5 4.2 7 6.2 L10 12.5 L5.5 16 C2.5 15 1.5 11.5 1 8.5Z" fill="#17b1e0"/>
<path d="M36 8.5 C37 5.5 33.500 4.2 30 6.2 L27 12.5 L31.500 16 C34.500 15 35.500 11.500 36 8.500Z" fill="#17b1e0"/>
<path d="M2.6 8.600 C3 7 5 7 6.600 8.200 L8.800 12.600 L5.800 14.600 C4 13.600 3 11 2.600 8.600Z" fill="#f4f6fb"/>
<path d="M34.400 8.600 C34 7 32 7 30.400 8.200 L28.200 12.600 L31.200 14.600 C33 13.600 34 11 34.400 8.600Z" fill="#f4f6fb"/>
<path d="M18.500 0.600 C25.500 0.600 30 5 30 10.500 C30 15.500 27 18.500 24 20 L22.800 28.600 L14.200 28.600 L13 20 C10 18.500 7 15.500 7 10.500 C7 5 11.500 0.600 18.500 0.600Z" fill="#17b1e0"/>
<path d="M9.600 12.600 C10.600 9.800 14 9.200 18.500 11.200 C23 9.200 26.400 9.800 27.400 12.600 C28.200 16.600 25.200 19.200 22.800 19.600 L21.400 22.400 L15.600 22.400 L14.200 19.600 C11.800 19.200 8.800 16.600 9.600 12.600Z" fill="#33359b"/>
<circle cx="13.800" cy="14.800" r="2.700" fill="#dfe3f7"/><circle cx="23.200" cy="14.800" r="2.700" fill="#dfe3f7"/>
<circle cx="13.800" cy="14.800" r="1.150" fill="#33359b"/><circle cx="23.200" cy="14.800" r="1.150" fill="#33359b"/>
<path d="M15.400 22.400 L21.600 22.400 L22.600 28.600 L14.400 28.600Z" fill="#17b1e0"/>
</svg>
<div class="t" style="left:2001.0px;top:757.7px;font-size:24.20px;color:#ffffff;-webkit-text-stroke:0.35px #ffffff;">Coin</div>
<svg class="i" style="left:1954.6px;top:810.7px;" width="34.0" height="34.0" viewBox="0 0 24 24" fill="none" stroke-linecap="round" stroke-linejoin="round"><circle cx="12" cy="12" r="9.600" stroke="#e2503f" stroke-width="2.50"/><path d="M12 2.400 V8.200 M12 15.800 V21.600 M2.400 12 H8.200 M15.800 12 H21.600" stroke="#e2503f" stroke-width="2.30"/></svg>
<div class="t" style="left:2001.0px;top:815.5px;font-size:24.20px;color:#ffffff;-webkit-text-stroke:0.35px #ffffff;letter-spacing:-0.25px;">CameraTarget</div>
<div class="b" style="left:2428.3px;top:475.4px;width:3.4px;height:3.4px;background:#e9e1fd;border-radius:50%"></div>
<div class="b" style="left:2428.3px;top:483.1px;width:3.4px;height:3.4px;background:#e9e1fd;border-radius:50%"></div>
<div class="b" style="left:2428.3px;top:490.8px;width:3.4px;height:3.4px;background:#e9e1fd;border-radius:50%"></div>
<div class="b" style="left:2428.3px;top:531.9px;width:3.4px;height:3.4px;background:#e9e1fd;border-radius:50%"></div>
<div class="b" style="left:2428.3px;top:539.6px;width:3.4px;height:3.4px;background:#e9e1fd;border-radius:50%"></div>
<div class="b" style="left:2428.3px;top:547.3px;width:3.4px;height:3.4px;background:#e9e1fd;border-radius:50%"></div>
<div class="b" style="left:2428.3px;top:588.9px;width:3.4px;height:3.4px;background:#e9e1fd;border-radius:50%"></div>
<div class="b" style="left:2428.3px;top:596.6px;width:3.4px;height:3.4px;background:#e9e1fd;border-radius:50%"></div>
<div class="b" style="left:2428.3px;top:604.3px;width:3.4px;height:3.4px;background:#e9e1fd;border-radius:50%"></div>
<div class="b" style="left:2428.3px;top:645.6px;width:3.4px;height:3.4px;background:#e9e1fd;border-radius:50%"></div>
<div class="b" style="left:2428.3px;top:653.3px;width:3.4px;height:3.4px;background:#e9e1fd;border-radius:50%"></div>
<div class="b" style="left:2428.3px;top:661.0px;width:3.4px;height:3.4px;background:#e9e1fd;border-radius:50%"></div>
<div class="b" style="left:2428.3px;top:702.9px;width:3.4px;height:3.4px;background:#e9e1fd;border-radius:50%"></div>
<div class="b" style="left:2428.3px;top:710.6px;width:3.4px;height:3.4px;background:#e9e1fd;border-radius:50%"></div>
<div class="b" style="left:2428.3px;top:718.3px;width:3.4px;height:3.4px;background:#e9e1fd;border-radius:50%"></div>
<div class="b" style="left:2428.3px;top:759.8px;width:3.4px;height:3.4px;background:#e9e1fd;border-radius:50%"></div>
<div class="b" style="left:2428.3px;top:767.5px;width:3.4px;height:3.4px;background:#e9e1fd;border-radius:50%"></div>
<div class="b" style="left:2428.3px;top:775.2px;width:3.4px;height:3.4px;background:#e9e1fd;border-radius:50%"></div>
<div class="b" style="left:2428.3px;top:817.6px;width:3.4px;height:3.4px;background:#e9e1fd;border-radius:50%"></div>
<div class="b" style="left:2428.3px;top:825.3px;width:3.4px;height:3.4px;background:#e9e1fd;border-radius:50%"></div>
<div class="b" style="left:2428.3px;top:833.0px;width:3.4px;height:3.4px;background:#e9e1fd;border-radius:50%"></div>
<div class="b" style="left:1902.2px;top:1375.4px;width:540.6px;height:57.1px;background:#442ac8;border-radius:15px"></div>
<svg class="i" style="left:2060.7px;top:1387.0px;" width="34.0" height="34.0" viewBox="0 0 24 24" fill="none" stroke-linecap="round" stroke-linejoin="round"><path d="M12 3.400 V20.600 M3.400 12 H20.600" stroke="#ffffff" stroke-width="1.50"/></svg>
<div class="t" style="left:2113.7px;top:1393.8px;font-size:21.20px;color:#ffffff;font-weight:700;">Add a new object</div>
<svg style="position:absolute;left:575px;top:204px" width="1306" height="1242" viewBox="575 204 1306 1242" shape-rendering="auto">
<rect x="575.0" y="204.0" width="1306.0" height="1242.0" fill="#676d81" />
<rect x="1010.0" y="204.0" width="871.0" height="296.0" fill="#4fa85a" />
<rect x="870.3" y="943.0" width="1010.7" height="503.0" fill="#4fa85a" />
<rect x="822.5" y="420.0" width="193.5" height="123.3" fill="#bab8c4" />
<rect x="1016.0" y="498.3" width="865.0" height="45.0" fill="#bab8c4" />
<rect x="822.5" y="898.0" width="1058.5" height="45.0" fill="#bab8c4" />
<rect x="822.5" y="898.0" width="47.8" height="548.0" fill="#bab8c4" />
<rect x="868.8" y="943.0" width="2.0" height="503.0" fill="#a9a8b0" />
<rect x="870.3" y="943.0" width="1010.7" height="1.5" fill="#5aa860" />
<rect x="779.4" y="204.0" width="43.1" height="385.2" fill="#4a505e" />
<rect x="779.4" y="543.3" width="1101.6" height="45.9" fill="#4a505e" />
<rect x="779.4" y="853.3" width="1101.6" height="44.7" fill="#4a505e" />
<rect x="779.4" y="853.3" width="43.1" height="592.7" fill="#4a505e" />
<rect x="642.5" y="204.0" width="9.2" height="296.5" fill="#898ea9" />
<rect x="642.5" y="942.2" width="9.2" height="503.8" fill="#898ea9" />
<rect x="868.3" y="717.2" width="1012.7" height="8.4" fill="#898ea9" />
<rect x="575.0" y="522.0" width="17.8" height="67.2" fill="#898ea9" />
<rect x="575.0" y="853.3" width="17.8" height="66.1" fill="#898ea9" />
<rect x="614.2" y="522.0" width="23.3" height="67.2" fill="#898ea9" />
<rect x="614.2" y="853.3" width="23.3" height="66.1" fill="#898ea9" />
<rect x="658.3" y="522.0" width="21.7" height="67.2" fill="#898ea9" />
<rect x="658.3" y="853.3" width="21.7" height="66.1" fill="#898ea9" />
<rect x="703.0" y="522.0" width="21.7" height="67.2" fill="#898ea9" />
<rect x="703.0" y="853.3" width="21.7" height="66.1" fill="#898ea9" />
<rect x="747.5" y="522.0" width="21.4" height="67.2" fill="#898ea9" />
<rect x="747.5" y="853.3" width="21.4" height="66.1" fill="#898ea9" />
<rect x="779.4" y="599.7" width="67.6" height="21.1" fill="#898ea9" />
<rect x="779.4" y="644.4" width="67.6" height="20.9" fill="#898ea9" />
<rect x="779.4" y="688.3" width="67.6" height="21.4" fill="#898ea9" />
<rect x="779.4" y="731.4" width="67.6" height="22.8" fill="#898ea9" />
<rect x="779.4" y="775.6" width="67.6" height="23.0" fill="#898ea9" />
<rect x="779.4" y="820.3" width="67.6" height="22.7" fill="#898ea9" />
<polygon points="965.6,409.0 965.6,423.7 1016.9,498.7 1016.9,486.8" fill="#a9a9a9" />
<polygon points="1044.6,409.0 1044.6,423.7 1081.1,498.7 1081.1,486.8" fill="#a9a9a9" />
<polygon points="1108.6,409.0 1108.6,423.7 1133.2,498.7 1133.2,486.8" fill="#a9a9a9" />
<polygon points="1186.6,409.0 1186.6,423.7 1196.6,498.7 1196.6,486.8" fill="#a9a9a9" />
<polygon points="1251.0,409.0 1251.0,423.7 1248.9,498.7 1248.9,486.8" fill="#a9a9a9" />
<polygon points="1329.0,409.0 1329.0,423.7 1312.4,498.7 1312.4,486.8" fill="#a9a9a9" />
<polygon points="1329.0,409.0 1329.0,423.7 1312.4,498.7 1312.4,486.8" fill="#a9a9a9" />
<polygon points="1408.0,409.0 1408.0,423.7 1376.6,498.7 1376.6,486.8" fill="#a9a9a9" />
<polygon points="1472.0,409.0 1472.0,423.7 1428.6,498.7 1428.6,486.8" fill="#a9a9a9" />
<polygon points="1550.0,409.0 1550.0,423.7 1492.0,498.7 1492.0,486.8" fill="#a9a9a9" />
<polygon points="1614.4,409.0 1614.4,423.7 1544.4,498.7 1544.4,486.8" fill="#a9a9a9" />
<polygon points="1692.4,409.0 1692.4,423.7 1607.8,498.7 1607.8,486.8" fill="#a9a9a9" />
<polygon points="1692.4,409.0 1692.4,423.7 1607.8,498.7 1607.8,486.8" fill="#a9a9a9" />
<polygon points="1771.4,409.0 1771.4,423.7 1672.0,498.7 1672.0,486.8" fill="#a9a9a9" />
<polygon points="1835.4,409.0 1835.4,423.7 1724.1,498.7 1724.1,486.8" fill="#a9a9a9" />
<polygon points="1913.4,409.0 1913.4,423.7 1787.5,498.7 1787.5,486.8" fill="#a9a9a9" />
<polygon points="1977.8,409.0 1977.8,423.7 1839.8,498.7 1839.8,486.8" fill="#a9a9a9" />
<polygon points="2055.8,409.0 2055.8,423.7 1903.3,498.7 1903.3,486.8" fill="#a9a9a9" />
<polygon points="1044.6,409.0 1108.6,409.0 1133.2,486.8 1081.1,486.8" fill="#7f7f7f" /><polygon points="1044.6,409.0 1108.6,409.0 1109.5,411.7 1045.9,411.7" fill="#5d5d61" /><polygon points="1061.5,413.7 1095.3,413.7 1100.5,427.7 1067.3,427.7" fill="#6c6c6e" /><polygon points="1069.5,413.7 1087.3,413.7 1092.5,427.7 1075.3,427.7" fill="#7d9cb6" /><polygon points="1070.6,435.4 1103.4,435.4 1108.0,447.9 1075.7,447.9" fill="#6c6c6e" /><polygon points="1078.6,435.4 1095.4,435.4 1100.0,447.9 1083.7,447.9" fill="#7d9cb6" /><polygon points="1078.9,455.7 1110.9,455.7 1115.5,468.1 1084.1,468.1" fill="#6c6c6e" /><polygon points="1086.9,455.7 1102.9,455.7 1107.5,468.1 1092.1,468.1" fill="#7d9cb6" /><polygon points="1087.3,475.9 1118.4,475.9 1121.6,484.5 1090.9,484.5" fill="#6c6c6e" /><polygon points="1095.3,475.9 1110.4,475.9 1113.6,484.5 1098.9,484.5" fill="#7d9cb6" /><line x1="1053.5" y1="429.4" x2="1117.1" y2="429.4" stroke="#5c5f6c" stroke-width="6.2"/><line x1="1053.5" y1="430.4" x2="1117.1" y2="430.4" stroke="#3f424e" stroke-width="4.2"/><line x1="1058.4" y1="434.3" x2="1116.6" y2="434.3" stroke="#8d8d8d" stroke-width="1.5"/><line x1="1063.4" y1="450.4" x2="1123.7" y2="450.4" stroke="#5c5f6c" stroke-width="6.2"/><line x1="1063.4" y1="451.4" x2="1123.7" y2="451.4" stroke="#3f424e" stroke-width="4.2"/><line x1="1068.1" y1="455.3" x2="1123.2" y2="455.3" stroke="#8d8d8d" stroke-width="1.5"/><line x1="1073.0" y1="470.6" x2="1130.0" y2="470.6" stroke="#5c5f6c" stroke-width="6.2"/><line x1="1073.0" y1="471.6" x2="1130.0" y2="471.6" stroke="#3f424e" stroke-width="4.2"/><line x1="1077.5" y1="475.5" x2="1129.6" y2="475.5" stroke="#8d8d8d" stroke-width="1.5"/>
<polygon points="1186.6,409.0 1251.0,409.0 1248.9,486.8 1196.6,486.8" fill="#7f7f7f" /><polygon points="1186.6,409.0 1251.0,409.0 1250.9,411.7 1186.9,411.7" fill="#5d5d61" /><polygon points="1202.1,413.7 1235.9,413.7 1236.3,427.7 1203.2,427.7" fill="#6c6c6e" /><polygon points="1210.1,413.7 1227.9,413.7 1228.3,427.7 1211.2,427.7" fill="#7d9cb6" /><polygon points="1203.7,435.4 1236.6,435.4 1236.9,447.9 1204.6,447.9" fill="#6c6c6e" /><polygon points="1211.7,435.4 1228.6,435.4 1228.9,447.9 1212.6,447.9" fill="#7d9cb6" /><polygon points="1205.2,455.7 1237.2,455.7 1237.5,468.1 1206.1,468.1" fill="#6c6c6e" /><polygon points="1213.2,455.7 1229.2,455.7 1229.5,468.1 1214.1,468.1" fill="#7d9cb6" /><polygon points="1206.7,475.9 1237.8,475.9 1238.0,484.5 1207.3,484.5" fill="#6c6c6e" /><polygon points="1214.7,475.9 1229.8,475.9 1230.0,484.5 1215.3,484.5" fill="#7d9cb6" /><line x1="1188.3" y1="429.4" x2="1252.3" y2="429.4" stroke="#5c5f6c" stroke-width="6.2"/><line x1="1188.3" y1="430.4" x2="1252.3" y2="430.4" stroke="#3f424e" stroke-width="4.2"/><line x1="1191.7" y1="434.3" x2="1250.3" y2="434.3" stroke="#8d8d8d" stroke-width="1.5"/><line x1="1191.1" y1="450.4" x2="1251.7" y2="450.4" stroke="#5c5f6c" stroke-width="6.2"/><line x1="1191.1" y1="451.4" x2="1251.7" y2="451.4" stroke="#3f424e" stroke-width="4.2"/><line x1="1194.3" y1="455.3" x2="1249.8" y2="455.3" stroke="#8d8d8d" stroke-width="1.5"/><line x1="1193.7" y1="470.6" x2="1251.1" y2="470.6" stroke="#5c5f6c" stroke-width="6.2"/><line x1="1193.7" y1="471.6" x2="1251.1" y2="471.6" stroke="#3f424e" stroke-width="4.2"/><line x1="1196.8" y1="475.5" x2="1249.2" y2="475.5" stroke="#8d8d8d" stroke-width="1.5"/>
<polygon points="1408.0,409.0 1472.0,409.0 1428.6,486.8 1376.6,486.8" fill="#7f7f7f" /><polygon points="1408.0,409.0 1472.0,409.0 1470.5,411.7 1406.9,411.7" fill="#5d5d61" /><polygon points="1420.9,413.7 1454.7,413.7 1447.6,427.7 1414.4,427.7" fill="#6c6c6e" /><polygon points="1428.9,413.7 1446.7,413.7 1439.6,427.7 1422.4,427.7" fill="#7d9cb6" /><polygon points="1410.9,435.4 1443.7,435.4 1437.5,447.9 1405.1,447.9" fill="#6c6c6e" /><polygon points="1418.9,435.4 1435.7,435.4 1429.5,447.9 1413.1,447.9" fill="#7d9cb6" /><polygon points="1401.6,455.7 1433.6,455.7 1427.3,468.1 1395.9,468.1" fill="#6c6c6e" /><polygon points="1409.6,455.7 1425.6,455.7 1419.3,468.1 1403.9,468.1" fill="#7d9cb6" /><polygon points="1392.3,475.9 1423.4,475.9 1419.1,484.5 1388.4,484.5" fill="#6c6c6e" /><polygon points="1400.3,475.9 1415.4,475.9 1411.1,484.5 1396.4,484.5" fill="#7d9cb6" /><line x1="1398.6" y1="429.4" x2="1462.2" y2="429.4" stroke="#5c5f6c" stroke-width="6.2"/><line x1="1398.6" y1="430.4" x2="1462.2" y2="430.4" stroke="#3f424e" stroke-width="4.2"/><line x1="1399.7" y1="434.3" x2="1457.9" y2="434.3" stroke="#8d8d8d" stroke-width="1.5"/><line x1="1390.1" y1="450.4" x2="1450.4" y2="450.4" stroke="#5c5f6c" stroke-width="6.2"/><line x1="1390.1" y1="451.4" x2="1450.4" y2="451.4" stroke="#3f424e" stroke-width="4.2"/><line x1="1391.1" y1="455.3" x2="1446.2" y2="455.3" stroke="#8d8d8d" stroke-width="1.5"/><line x1="1382.0" y1="470.6" x2="1439.0" y2="470.6" stroke="#5c5f6c" stroke-width="6.2"/><line x1="1382.0" y1="471.6" x2="1439.0" y2="471.6" stroke="#3f424e" stroke-width="4.2"/><line x1="1382.8" y1="475.5" x2="1434.9" y2="475.5" stroke="#8d8d8d" stroke-width="1.5"/>
<polygon points="1550.0,409.0 1614.4,409.0 1544.4,486.8 1492.0,486.8" fill="#7f7f7f" /><polygon points="1550.0,409.0 1614.4,409.0 1611.9,411.7 1548.0,411.7" fill="#5d5d61" /><polygon points="1561.5,413.7 1595.3,413.7 1583.4,427.7 1550.2,427.7" fill="#6c6c6e" /><polygon points="1569.5,413.7 1587.3,413.7 1575.4,427.7 1558.2,427.7" fill="#7d9cb6" /><polygon points="1544.0,435.4 1576.9,435.4 1566.4,447.9 1534.0,447.9" fill="#6c6c6e" /><polygon points="1552.0,435.4 1568.9,435.4 1558.4,447.9 1542.0,447.9" fill="#7d9cb6" /><polygon points="1527.8,455.7 1559.8,455.7 1549.3,468.1 1517.8,468.1" fill="#6c6c6e" /><polygon points="1535.8,455.7 1551.8,455.7 1541.3,468.1 1525.8,468.1" fill="#7d9cb6" /><polygon points="1511.6,475.9 1542.7,475.9 1535.5,484.5 1504.8,484.5" fill="#6c6c6e" /><polygon points="1519.6,475.9 1534.7,475.9 1527.5,484.5 1512.8,484.5" fill="#7d9cb6" /><line x1="1533.4" y1="429.4" x2="1597.4" y2="429.4" stroke="#5c5f6c" stroke-width="6.2"/><line x1="1533.4" y1="430.4" x2="1597.4" y2="430.4" stroke="#3f424e" stroke-width="4.2"/><line x1="1533.0" y1="434.3" x2="1591.6" y2="434.3" stroke="#8d8d8d" stroke-width="1.5"/><line x1="1517.8" y1="450.4" x2="1578.4" y2="450.4" stroke="#5c5f6c" stroke-width="6.2"/><line x1="1517.8" y1="451.4" x2="1578.4" y2="451.4" stroke="#3f424e" stroke-width="4.2"/><line x1="1517.3" y1="455.3" x2="1572.7" y2="455.3" stroke="#8d8d8d" stroke-width="1.5"/><line x1="1502.8" y1="470.6" x2="1560.1" y2="470.6" stroke="#5c5f6c" stroke-width="6.2"/><line x1="1502.8" y1="471.6" x2="1560.1" y2="471.6" stroke="#3f424e" stroke-width="4.2"/><line x1="1502.1" y1="475.5" x2="1554.5" y2="475.5" stroke="#8d8d8d" stroke-width="1.5"/>
<polygon points="1771.4,409.0 1835.4,409.0 1724.1,486.8 1672.0,486.8" fill="#7f7f7f" /><polygon points="1771.4,409.0 1835.4,409.0 1831.5,411.7 1767.9,411.7" fill="#5d5d61" /><polygon points="1780.2,413.7 1814.0,413.7 1794.7,427.7 1761.5,427.7" fill="#6c6c6e" /><polygon points="1788.2,413.7 1806.0,413.7 1786.7,427.7 1769.5,427.7" fill="#7d9cb6" /><polygon points="1751.2,435.4 1784.0,435.4 1766.9,447.9 1734.6,447.9" fill="#6c6c6e" /><polygon points="1759.2,435.4 1776.0,435.4 1758.9,447.9 1742.6,447.9" fill="#7d9cb6" /><polygon points="1724.2,455.7 1756.2,455.7 1739.1,468.1 1707.6,468.1" fill="#6c6c6e" /><polygon points="1732.2,455.7 1748.2,455.7 1731.1,468.1 1715.6,468.1" fill="#7d9cb6" /><polygon points="1697.2,475.9 1728.4,475.9 1716.6,484.5 1685.8,484.5" fill="#6c6c6e" /><polygon points="1705.2,475.9 1720.4,475.9 1708.6,484.5 1693.8,484.5" fill="#7d9cb6" /><line x1="1743.6" y1="429.4" x2="1807.2" y2="429.4" stroke="#5c5f6c" stroke-width="6.2"/><line x1="1743.6" y1="430.4" x2="1807.2" y2="430.4" stroke="#3f424e" stroke-width="4.2"/><line x1="1741.0" y1="434.3" x2="1799.2" y2="434.3" stroke="#8d8d8d" stroke-width="1.5"/><line x1="1716.8" y1="450.4" x2="1777.1" y2="450.4" stroke="#5c5f6c" stroke-width="6.2"/><line x1="1716.8" y1="451.4" x2="1777.1" y2="451.4" stroke="#3f424e" stroke-width="4.2"/><line x1="1714.1" y1="455.3" x2="1769.2" y2="455.3" stroke="#8d8d8d" stroke-width="1.5"/><line x1="1691.1" y1="470.6" x2="1748.0" y2="470.6" stroke="#5c5f6c" stroke-width="6.2"/><line x1="1691.1" y1="471.6" x2="1748.0" y2="471.6" stroke="#3f424e" stroke-width="4.2"/><line x1="1688.1" y1="475.5" x2="1740.2" y2="475.5" stroke="#8d8d8d" stroke-width="1.5"/>
<polygon points="1913.4,409.0 1977.8,409.0 1839.8,486.8 1787.5,486.8" fill="#7f7f7f" /><polygon points="1913.4,409.0 1977.8,409.0 1973.0,411.7 1909.0,411.7" fill="#5d5d61" /><polygon points="1920.8,413.7 1954.6,413.7 1930.5,427.7 1897.3,427.7" fill="#6c6c6e" /><polygon points="1928.8,413.7 1946.6,413.7 1922.5,427.7 1905.3,427.7" fill="#7d9cb6" /><polygon points="1884.3,435.4 1917.2,435.4 1895.8,447.9 1863.5,447.9" fill="#6c6c6e" /><polygon points="1892.3,435.4 1909.2,435.4 1887.8,447.9 1871.5,447.9" fill="#7d9cb6" /><polygon points="1850.4,455.7 1882.4,455.7 1861.0,468.1 1829.6,468.1" fill="#6c6c6e" /><polygon points="1858.4,455.7 1874.4,455.7 1853.0,468.1 1837.6,468.1" fill="#7d9cb6" /><polygon points="1816.6,475.9 1847.7,475.9 1833.0,484.5 1802.2,484.5" fill="#6c6c6e" /><polygon points="1824.6,475.9 1839.7,475.9 1825.0,484.5 1810.2,484.5" fill="#7d9cb6" /><line x1="1878.5" y1="429.4" x2="1942.4" y2="429.4" stroke="#5c5f6c" stroke-width="6.2"/><line x1="1878.5" y1="430.4" x2="1942.4" y2="430.4" stroke="#3f424e" stroke-width="4.2"/><line x1="1874.4" y1="434.3" x2="1933.0" y2="434.3" stroke="#8d8d8d" stroke-width="1.5"/><line x1="1844.5" y1="450.4" x2="1905.1" y2="450.4" stroke="#5c5f6c" stroke-width="6.2"/><line x1="1844.5" y1="451.4" x2="1905.1" y2="451.4" stroke="#3f424e" stroke-width="4.2"/><line x1="1840.3" y1="455.3" x2="1895.7" y2="455.3" stroke="#8d8d8d" stroke-width="1.5"/><line x1="1811.8" y1="470.6" x2="1869.1" y2="470.6" stroke="#5c5f6c" stroke-width="6.2"/><line x1="1811.8" y1="471.6" x2="1869.1" y2="471.6" stroke="#3f424e" stroke-width="4.2"/><line x1="1807.4" y1="475.5" x2="1859.8" y2="475.5" stroke="#8d8d8d" stroke-width="1.5"/>
<polygon points="965.6,423.7 1044.6,423.7 1081.1,498.7 1016.9,498.7" fill="#7f7f7f" /><line x1="981.0" y1="446.2" x2="1055.6" y2="446.2" stroke="#6a6a6a" stroke-width="1.6"/><line x1="993.8" y1="465.0" x2="1064.7" y2="465.0" stroke="#6a6a6a" stroke-width="1.6"/><line x1="1005.6" y1="482.2" x2="1073.1" y2="482.2" stroke="#6a6a6a" stroke-width="1.6"/><polygon points="992.3,431.7 1026.7,431.7 1034.4,441.5 996.1,441.5" fill="#6b6b6d" /><polygon points="1002.6,433.9 1019.0,433.9 1022.2,437.7 1003.8,437.7" fill="#7b9ab4" /><polygon points="1003.0,438.0 1023.4,438.0 1025.7,440.3 1003.3,440.3" fill="#9c9ca4" /><polygon points="1004.5,451.2 1037.3,451.2 1044.8,460.6 1008.0,460.6" fill="#6b6b6d" /><polygon points="1014.8,453.4 1029.6,453.4 1032.8,457.2 1016.1,457.2" fill="#7b9ab4" /><polygon points="1015.2,457.5 1034.0,457.5 1036.3,459.8 1015.6,459.8" fill="#9c9ca4" /><polygon points="1015.8,469.2 1047.1,469.2 1054.3,478.1 1019.1,478.1" fill="#6b6b6d" /><polygon points="1026.1,471.4 1039.4,471.4 1042.6,475.2 1027.4,475.2" fill="#7b9ab4" /><polygon points="1026.5,475.5 1043.8,475.5 1046.1,477.8 1026.9,477.8" fill="#9c9ca4" /><polygon points="1026.7,486.5 1056.4,486.5 1063.4,495.0 1029.7,495.0" fill="#6b6b6d" /><polygon points="1037.0,488.7 1048.7,488.7 1052.0,492.5 1038.2,492.5" fill="#7b9ab4" /><polygon points="1037.4,492.8 1053.1,492.8 1055.5,495.1 1037.7,495.1" fill="#9c9ca4" />
<polygon points="1108.6,423.7 1186.6,423.7 1196.6,498.7 1133.2,498.7" fill="#7f7f7f" /><line x1="1116.0" y1="446.2" x2="1189.6" y2="446.2" stroke="#6a6a6a" stroke-width="1.6"/><line x1="1122.1" y1="465.0" x2="1192.1" y2="465.0" stroke="#6a6a6a" stroke-width="1.6"/><line x1="1127.8" y1="482.2" x2="1194.4" y2="482.2" stroke="#6a6a6a" stroke-width="1.6"/><polygon points="1132.1,431.7 1166.5,431.7 1170.8,441.5 1132.4,441.5" fill="#6b6b6d" /><polygon points="1141.6,433.9 1158.0,433.9 1159.9,437.7 1141.5,437.7" fill="#7b9ab4" /><polygon points="1140.6,438.0 1161.0,438.0 1162.5,440.3 1140.1,440.3" fill="#9c9ca4" /><polygon points="1137.5,451.2 1170.2,451.2 1174.3,460.6 1137.6,460.6" fill="#6b6b6d" /><polygon points="1147.0,453.4 1161.7,453.4 1163.6,457.2 1146.8,457.2" fill="#7b9ab4" /><polygon points="1145.9,457.5 1164.6,457.5 1166.2,459.8 1145.4,459.8" fill="#9c9ca4" /><polygon points="1142.4,469.2 1173.6,469.2 1177.6,478.1 1142.4,478.1" fill="#6b6b6d" /><polygon points="1151.9,471.4 1165.1,471.4 1167.0,475.2 1151.7,475.2" fill="#7b9ab4" /><polygon points="1150.8,475.5 1168.0,475.5 1169.6,477.8 1150.3,477.8" fill="#9c9ca4" /><polygon points="1147.1,486.5 1176.8,486.5 1180.8,495.0 1147.0,495.0" fill="#6b6b6d" /><polygon points="1156.6,488.7 1168.3,488.7 1170.2,492.5 1156.4,492.5" fill="#7b9ab4" /><polygon points="1155.5,492.8 1171.3,492.8 1172.8,495.1 1155.0,495.1" fill="#9c9ca4" />
<polygon points="1251.0,423.7 1329.0,423.7 1312.4,498.7 1248.9,498.7" fill="#7f7f7f" /><line x1="1250.4" y1="446.2" x2="1324.0" y2="446.2" stroke="#6a6a6a" stroke-width="1.6"/><line x1="1249.9" y1="465.0" x2="1319.8" y2="465.0" stroke="#6a6a6a" stroke-width="1.6"/><line x1="1249.4" y1="482.2" x2="1316.0" y2="482.2" stroke="#6a6a6a" stroke-width="1.6"/><polygon points="1271.9,431.7 1306.3,431.7 1307.0,441.5 1268.7,441.5" fill="#6b6b6d" /><polygon points="1280.6,433.9 1297.0,433.9 1297.5,437.7 1279.1,437.7" fill="#7b9ab4" /><polygon points="1278.1,438.0 1298.5,438.0 1299.2,440.3 1276.8,440.3" fill="#9c9ca4" /><polygon points="1270.3,451.2 1303.0,451.2 1303.8,460.6 1267.1,460.6" fill="#6b6b6d" /><polygon points="1279.0,453.4 1293.7,453.4 1294.3,457.2 1277.5,457.2" fill="#7b9ab4" /><polygon points="1276.5,457.5 1295.2,457.5 1295.9,459.8 1275.2,459.8" fill="#9c9ca4" /><polygon points="1268.8,469.2 1300.0,469.2 1300.9,478.1 1265.7,478.1" fill="#6b6b6d" /><polygon points="1277.5,471.4 1290.7,471.4 1291.3,475.2 1276.0,475.2" fill="#7b9ab4" /><polygon points="1275.0,475.5 1292.2,475.5 1292.9,477.8 1273.7,477.8" fill="#9c9ca4" /><polygon points="1267.4,486.5 1297.1,486.5 1298.1,495.0 1264.3,495.0" fill="#6b6b6d" /><polygon points="1276.1,488.7 1287.9,488.7 1288.4,492.5 1274.6,492.5" fill="#7b9ab4" /><polygon points="1273.6,492.8 1289.3,492.8 1290.1,495.1 1272.3,495.1" fill="#9c9ca4" />
<polygon points="1329.0,423.7 1408.0,423.7 1376.6,498.7 1312.4,498.7" fill="#7f7f7f" /><line x1="1324.0" y1="446.2" x2="1398.6" y2="446.2" stroke="#6a6a6a" stroke-width="1.6"/><line x1="1319.8" y1="465.0" x2="1390.7" y2="465.0" stroke="#6a6a6a" stroke-width="1.6"/><line x1="1316.0" y1="482.2" x2="1383.5" y2="482.2" stroke="#6a6a6a" stroke-width="1.6"/><polygon points="1348.9,431.7 1383.3,431.7 1382.1,441.5 1343.8,441.5" fill="#6b6b6d" /><polygon points="1357.2,433.9 1373.6,433.9 1373.4,437.7 1355.0,437.7" fill="#7b9ab4" /><polygon points="1353.9,438.0 1374.3,438.0 1374.5,440.3 1352.2,440.3" fill="#9c9ca4" /><polygon points="1343.5,451.2 1376.2,451.2 1375.2,460.6 1338.5,460.6" fill="#6b6b6d" /><polygon points="1351.8,453.4 1366.5,453.4 1366.3,457.2 1349.6,457.2" fill="#7b9ab4" /><polygon points="1348.5,457.5 1367.2,457.5 1367.5,459.8 1346.7,459.8" fill="#9c9ca4" /><polygon points="1338.5,469.2 1369.7,469.2 1368.8,478.1 1333.6,478.1" fill="#6b6b6d" /><polygon points="1346.8,471.4 1360.0,471.4 1359.8,475.2 1344.6,475.2" fill="#7b9ab4" /><polygon points="1343.5,475.5 1360.7,475.5 1360.9,477.8 1341.7,477.8" fill="#9c9ca4" /><polygon points="1333.7,486.5 1363.4,486.5 1362.7,495.0 1328.9,495.0" fill="#6b6b6d" /><polygon points="1342.0,488.7 1353.7,488.7 1353.5,492.5 1339.7,492.5" fill="#7b9ab4" /><polygon points="1338.7,492.8 1354.4,492.8 1354.7,495.1 1336.9,495.1" fill="#9c9ca4" />
<polygon points="1472.0,423.7 1550.0,423.7 1492.0,498.7 1428.6,498.7" fill="#7f7f7f" /><line x1="1459.0" y1="446.2" x2="1532.6" y2="446.2" stroke="#6a6a6a" stroke-width="1.6"/><line x1="1448.1" y1="465.0" x2="1518.1" y2="465.0" stroke="#6a6a6a" stroke-width="1.6"/><line x1="1438.2" y1="482.2" x2="1504.8" y2="482.2" stroke="#6a6a6a" stroke-width="1.6"/><polygon points="1488.7,431.7 1523.1,431.7 1518.5,441.5 1480.1,441.5" fill="#6b6b6d" /><polygon points="1496.3,433.9 1512.6,433.9 1511.1,437.7 1492.7,437.7" fill="#7b9ab4" /><polygon points="1491.5,438.0 1511.9,438.0 1511.3,440.3 1488.9,440.3" fill="#9c9ca4" /><polygon points="1476.4,451.2 1509.1,451.2 1504.8,460.6 1468.1,460.6" fill="#6b6b6d" /><polygon points="1483.9,453.4 1498.6,453.4 1497.1,457.2 1480.3,457.2" fill="#7b9ab4" /><polygon points="1479.1,457.5 1497.9,457.5 1497.3,459.8 1476.6,459.8" fill="#9c9ca4" /><polygon points="1465.0,469.2 1496.2,469.2 1492.2,478.1 1457.0,478.1" fill="#6b6b6d" /><polygon points="1472.5,471.4 1485.7,471.4 1484.2,475.2 1468.9,475.2" fill="#7b9ab4" /><polygon points="1467.7,475.5 1485.0,475.5 1484.4,477.8 1465.2,477.8" fill="#9c9ca4" /><polygon points="1454.1,486.5 1483.8,486.5 1480.1,495.0 1446.3,495.0" fill="#6b6b6d" /><polygon points="1461.6,488.7 1473.3,488.7 1471.8,492.5 1458.0,492.5" fill="#7b9ab4" /><polygon points="1456.8,492.8 1472.6,492.8 1472.0,495.1 1454.2,495.1" fill="#9c9ca4" />
<polygon points="1614.4,423.7 1692.4,423.7 1607.8,498.7 1544.4,498.7" fill="#7f7f7f" /><line x1="1593.4" y1="446.2" x2="1667.0" y2="446.2" stroke="#6a6a6a" stroke-width="1.6"/><line x1="1575.9" y1="465.0" x2="1645.9" y2="465.0" stroke="#6a6a6a" stroke-width="1.6"/><line x1="1559.8" y1="482.2" x2="1626.4" y2="482.2" stroke="#6a6a6a" stroke-width="1.6"/><polygon points="1628.5,431.7 1662.9,431.7 1654.7,441.5 1616.4,441.5" fill="#6b6b6d" /><polygon points="1635.2,433.9 1651.6,433.9 1648.7,437.7 1630.3,437.7" fill="#7b9ab4" /><polygon points="1629.0,438.0 1649.4,438.0 1648.0,440.3 1625.6,440.3" fill="#9c9ca4" /><polygon points="1609.2,451.2 1641.9,451.2 1634.3,460.6 1597.6,460.6" fill="#6b6b6d" /><polygon points="1615.9,453.4 1630.7,453.4 1627.8,457.2 1611.0,457.2" fill="#7b9ab4" /><polygon points="1609.7,457.5 1628.4,457.5 1627.1,459.8 1606.3,459.8" fill="#9c9ca4" /><polygon points="1591.4,469.2 1622.6,469.2 1615.4,478.1 1580.2,478.1" fill="#6b6b6d" /><polygon points="1598.1,471.4 1611.4,471.4 1608.4,475.2 1593.2,475.2" fill="#7b9ab4" /><polygon points="1591.9,475.5 1609.1,475.5 1607.8,477.8 1588.5,477.8" fill="#9c9ca4" /><polygon points="1574.4,486.5 1604.1,486.5 1597.4,495.0 1563.6,495.0" fill="#6b6b6d" /><polygon points="1581.1,488.7 1592.9,488.7 1589.9,492.5 1576.2,492.5" fill="#7b9ab4" /><polygon points="1574.9,492.8 1590.6,492.8 1589.3,495.1 1571.5,495.1" fill="#9c9ca4" />
<polygon points="1692.4,423.7 1771.4,423.7 1672.0,498.7 1607.8,498.7" fill="#7f7f7f" /><line x1="1667.0" y1="446.2" x2="1741.6" y2="446.2" stroke="#6a6a6a" stroke-width="1.6"/><line x1="1645.9" y1="465.0" x2="1716.7" y2="465.0" stroke="#6a6a6a" stroke-width="1.6"/><line x1="1626.4" y1="482.2" x2="1693.9" y2="482.2" stroke="#6a6a6a" stroke-width="1.6"/><polygon points="1705.5,431.7 1739.9,431.7 1729.8,441.5 1691.5,441.5" fill="#6b6b6d" /><polygon points="1711.8,433.9 1728.2,433.9 1724.5,437.7 1706.2,437.7" fill="#7b9ab4" /><polygon points="1704.8,438.0 1725.2,438.0 1723.3,440.3 1701.0,440.3" fill="#9c9ca4" /><polygon points="1682.4,451.2 1715.2,451.2 1705.7,460.6 1669.0,460.6" fill="#6b6b6d" /><polygon points="1688.7,453.4 1703.5,453.4 1699.8,457.2 1683.1,457.2" fill="#7b9ab4" /><polygon points="1681.7,457.5 1700.4,457.5 1698.6,459.8 1677.9,459.8" fill="#9c9ca4" /><polygon points="1661.1,469.2 1692.3,469.2 1683.4,478.1 1648.2,478.1" fill="#6b6b6d" /><polygon points="1667.4,471.4 1680.6,471.4 1677.0,475.2 1661.7,475.2" fill="#7b9ab4" /><polygon points="1660.4,475.5 1677.6,475.5 1675.8,477.8 1656.6,477.8" fill="#9c9ca4" /><polygon points="1640.7,486.5 1670.4,486.5 1662.0,495.0 1628.2,495.0" fill="#6b6b6d" /><polygon points="1647.0,488.7 1658.7,488.7 1655.1,492.5 1641.3,492.5" fill="#7b9ab4" /><polygon points="1639.9,492.8 1655.7,492.8 1653.9,495.1 1636.1,495.1" fill="#9c9ca4" />
<polygon points="1835.4,423.7 1913.4,423.7 1787.5,498.7 1724.1,498.7" fill="#7f7f7f" /><line x1="1802.0" y1="446.2" x2="1875.6" y2="446.2" stroke="#6a6a6a" stroke-width="1.6"/><line x1="1774.2" y1="465.0" x2="1844.1" y2="465.0" stroke="#6a6a6a" stroke-width="1.6"/><line x1="1748.6" y1="482.2" x2="1815.2" y2="482.2" stroke="#6a6a6a" stroke-width="1.6"/><polygon points="1845.4,431.7 1879.7,431.7 1866.2,441.5 1827.8,441.5" fill="#6b6b6d" /><polygon points="1850.9,433.9 1867.2,433.9 1862.2,437.7 1843.9,437.7" fill="#7b9ab4" /><polygon points="1842.4,438.0 1862.8,438.0 1860.1,440.3 1837.8,440.3" fill="#9c9ca4" /><polygon points="1815.3,451.2 1848.1,451.2 1835.3,460.6 1798.5,460.6" fill="#6b6b6d" /><polygon points="1820.9,453.4 1835.6,453.4 1830.6,457.2 1813.8,457.2" fill="#7b9ab4" /><polygon points="1812.4,457.5 1831.1,457.5 1828.5,459.8 1807.7,459.8" fill="#9c9ca4" /><polygon points="1787.6,469.2 1818.8,469.2 1806.7,478.1 1771.5,478.1" fill="#6b6b6d" /><polygon points="1793.1,471.4 1806.4,471.4 1801.3,475.2 1786.1,475.2" fill="#7b9ab4" /><polygon points="1784.7,475.5 1801.9,475.5 1799.2,477.8 1780.0,477.8" fill="#9c9ca4" /><polygon points="1761.1,486.5 1790.8,486.5 1779.4,495.0 1745.6,495.0" fill="#6b6b6d" /><polygon points="1766.6,488.7 1778.3,488.7 1773.3,492.5 1759.6,492.5" fill="#7b9ab4" /><polygon points="1758.1,492.8 1773.9,492.8 1771.2,495.1 1753.5,495.1" fill="#9c9ca4" />
<polygon points="1977.8,423.7 2055.8,423.7 1903.3,498.7 1839.8,498.7" fill="#7f7f7f" /><line x1="1936.4" y1="446.2" x2="2010.0" y2="446.2" stroke="#6a6a6a" stroke-width="1.6"/><line x1="1901.9" y1="465.0" x2="1971.9" y2="465.0" stroke="#6a6a6a" stroke-width="1.6"/><line x1="1870.2" y1="482.2" x2="1936.8" y2="482.2" stroke="#6a6a6a" stroke-width="1.6"/><polygon points="1985.1,431.7 2019.5,431.7 2002.5,441.5 1964.1,441.5" fill="#6b6b6d" /><polygon points="1989.8,433.9 2006.2,433.9 1999.8,437.7 1981.5,437.7" fill="#7b9ab4" /><polygon points="1979.9,438.0 2000.3,438.0 1996.8,440.3 1974.4,440.3" fill="#9c9ca4" /><polygon points="1948.1,451.2 1980.9,451.2 1964.8,460.6 1928.0,460.6" fill="#6b6b6d" /><polygon points="1952.9,453.4 1967.6,453.4 1961.3,457.2 1944.5,457.2" fill="#7b9ab4" /><polygon points="1942.9,457.5 1961.7,457.5 1958.2,459.8 1937.5,459.8" fill="#9c9ca4" /><polygon points="1914.0,469.2 1945.3,469.2 1930.0,478.1 1894.8,478.1" fill="#6b6b6d" /><polygon points="1918.8,471.4 1932.0,471.4 1925.6,475.2 1910.4,475.2" fill="#7b9ab4" /><polygon points="1908.8,475.5 1926.1,475.5 1922.6,477.8 1903.4,477.8" fill="#9c9ca4" /><polygon points="1881.4,486.5 1911.1,486.5 1896.7,495.0 1862.9,495.0" fill="#6b6b6d" /><polygon points="1886.1,488.7 1897.9,488.7 1891.5,492.5 1877.7,492.5" fill="#7b9ab4" /><polygon points="1876.2,492.8 1891.9,492.8 1888.5,495.1 1870.7,495.1" fill="#9c9ca4" />
<line x1="1044.6" y1="423.7" x2="1081.1" y2="498.7" stroke="#b4b4b4" stroke-width="2.5"/>
<line x1="1186.6" y1="423.7" x2="1196.6" y2="498.7" stroke="#b4b4b4" stroke-width="2.5"/>
<line x1="1251.0" y1="423.7" x2="1248.9" y2="498.7" stroke="#b4b4b4" stroke-width="2.5"/>
<line x1="1329.0" y1="423.7" x2="1312.4" y2="498.7" stroke="#b4b4b4" stroke-width="2.5"/>
<line x1="1472.0" y1="423.7" x2="1428.6" y2="498.7" stroke="#b4b4b4" stroke-width="2.5"/>
<line x1="1614.4" y1="423.7" x2="1544.4" y2="498.7" stroke="#b4b4b4" stroke-width="2.5"/>
<line x1="1692.4" y1="423.7" x2="1607.8" y2="498.7" stroke="#b4b4b4" stroke-width="2.5"/>
<line x1="1835.4" y1="423.7" x2="1724.1" y2="498.7" stroke="#b4b4b4" stroke-width="2.5"/>
<line x1="1977.8" y1="423.7" x2="1839.8" y2="498.7" stroke="#b4b4b4" stroke-width="2.5"/>
<polygon points="965.6,241.4 1044.6,241.4 1044.6,255.3 1108.6,255.3 1108.6,241.4 1186.6,241.4 1186.6,255.3 1251.0,255.3 1251.0,241.4 1329.0,241.4 1329.0,423.7 1251.0,423.7 1251.0,409.0 1186.6,409.0 1186.6,423.7 1108.6,423.7 1108.6,409.0 1044.6,409.0 1044.6,423.7 965.6,423.7" fill="#8c8c96" />
<polygon points="979.1,252.9 1033.1,252.9 1033.1,266.8 1120.1,266.8 1120.1,252.9 1175.1,252.9 1175.1,266.8 1262.5,266.8 1262.5,252.9 1315.5,252.9 1315.5,413.9 1262.5,413.9 1262.5,399.2 1175.1,399.2 1175.1,413.9 1120.1,413.9 1120.1,399.2 1033.1,399.2 1033.1,413.9 979.1,413.9" fill="#5e616b" />
<rect x="979.1" y="252.9" width="54.0" height="2.0" fill="#6f7079" opacity="0.55"/>
<rect x="1033.1" y="266.8" width="87.0" height="3.0" fill="#6f7079" />
<rect x="1030.6" y="252.9" width="2.5" height="16.9" fill="#6f7079" />
<rect x="1117.6" y="252.9" width="2.5" height="13.9" fill="#6f7079" opacity="0.0"/>
<rect x="1120.1" y="252.9" width="55.0" height="2.0" fill="#6f7079" opacity="0.55"/>
<rect x="1175.1" y="266.8" width="87.4" height="3.0" fill="#6f7079" />
<rect x="1172.6" y="252.9" width="2.5" height="16.9" fill="#6f7079" />
<rect x="1260.0" y="252.9" width="2.5" height="13.9" fill="#6f7079" opacity="0.0"/>
<rect x="1262.5" y="252.9" width="53.0" height="2.0" fill="#6f7079" opacity="0.55"/>
<rect x="1004.6" y="321.0" width="36.0" height="29.3" fill="#8c8c96" />
<rect x="1004.6" y="348.5" width="36.0" height="1.8" fill="#7b7c86" />
<rect x="1127.6" y="321.0" width="36.0" height="29.3" fill="#8c8c96" />
<rect x="1127.6" y="348.5" width="36.0" height="1.8" fill="#7b7c86" />
<rect x="1251.6" y="321.0" width="36.0" height="29.3" fill="#8c8c96" />
<rect x="1251.6" y="348.5" width="36.0" height="1.8" fill="#7b7c86" />
<polygon points="1329.0,241.4 1408.0,241.4 1408.0,255.3 1472.0,255.3 1472.0,241.4 1550.0,241.4 1550.0,255.3 1614.4,255.3 1614.4,241.4 1692.4,241.4 1692.4,423.7 1614.4,423.7 1614.4,409.0 1550.0,409.0 1550.0,423.7 1472.0,423.7 1472.0,409.0 1408.0,409.0 1408.0,423.7 1329.0,423.7" fill="#8c8c96" />
<polygon points="1342.5,252.9 1396.5,252.9 1396.5,266.8 1483.5,266.8 1483.5,252.9 1538.5,252.9 1538.5,266.8 1625.9,266.8 1625.9,252.9 1678.9,252.9 1678.9,413.9 1625.9,413.9 1625.9,399.2 1538.5,399.2 1538.5,413.9 1483.5,413.9 1483.5,399.2 1396.5,399.2 1396.5,413.9 1342.5,413.9" fill="#5e616b" />
<rect x="1342.5" y="252.9" width="54.0" height="2.0" fill="#6f7079" opacity="0.55"/>
<rect x="1396.5" y="266.8" width="87.0" height="3.0" fill="#6f7079" />
<rect x="1394.0" y="252.9" width="2.5" height="16.9" fill="#6f7079" />
<rect x="1481.0" y="252.9" width="2.5" height="13.9" fill="#6f7079" opacity="0.0"/>
<rect x="1483.5" y="252.9" width="55.0" height="2.0" fill="#6f7079" opacity="0.55"/>
<rect x="1538.5" y="266.8" width="87.4" height="3.0" fill="#6f7079" />
<rect x="1536.0" y="252.9" width="2.5" height="16.9" fill="#6f7079" />
<rect x="1623.4" y="252.9" width="2.5" height="13.9" fill="#6f7079" opacity="0.0"/>
<rect x="1625.9" y="252.9" width="53.0" height="2.0" fill="#6f7079" opacity="0.55"/>
<rect x="1368.0" y="321.0" width="36.0" height="29.3" fill="#8c8c96" />
<rect x="1368.0" y="348.5" width="36.0" height="1.8" fill="#7b7c86" />
<rect x="1491.0" y="321.0" width="36.0" height="29.3" fill="#8c8c96" />
<rect x="1491.0" y="348.5" width="36.0" height="1.8" fill="#7b7c86" />
<rect x="1615.0" y="321.0" width="36.0" height="29.3" fill="#8c8c96" />
<rect x="1615.0" y="348.5" width="36.0" height="1.8" fill="#7b7c86" />
<polygon points="1692.4,241.4 1771.4,241.4 1771.4,255.3 1835.4,255.3 1835.4,241.4 1913.4,241.4 1913.4,255.3 1977.8,255.3 1977.8,241.4 2055.8,241.4 2055.8,423.7 1977.8,423.7 1977.8,409.0 1913.4,409.0 1913.4,423.7 1835.4,423.7 1835.4,409.0 1771.4,409.0 1771.4,423.7 1692.4,423.7" fill="#8c8c96" />
<polygon points="1705.9,252.9 1759.9,252.9 1759.9,266.8 1846.9,266.8 1846.9,252.9 1901.9,252.9 1901.9,266.8 1989.3,266.8 1989.3,252.9 2042.3,252.9 2042.3,413.9 1989.3,413.9 1989.3,399.2 1901.9,399.2 1901.9,413.9 1846.9,413.9 1846.9,399.2 1759.9,399.2 1759.9,413.9 1705.9,413.9" fill="#5e616b" />
<rect x="1705.9" y="252.9" width="54.0" height="2.0" fill="#6f7079" opacity="0.55"/>
<rect x="1759.9" y="266.8" width="87.0" height="3.0" fill="#6f7079" />
<rect x="1757.4" y="252.9" width="2.5" height="16.9" fill="#6f7079" />
<rect x="1844.4" y="252.9" width="2.5" height="13.9" fill="#6f7079" opacity="0.0"/>
<rect x="1846.9" y="252.9" width="55.0" height="2.0" fill="#6f7079" opacity="0.55"/>
<rect x="1901.9" y="266.8" width="87.4" height="3.0" fill="#6f7079" />
<rect x="1899.4" y="252.9" width="2.5" height="16.9" fill="#6f7079" />
<rect x="1986.8" y="252.9" width="2.5" height="13.9" fill="#6f7079" opacity="0.0"/>
<rect x="1989.3" y="252.9" width="53.0" height="2.0" fill="#6f7079" opacity="0.55"/>
<rect x="1731.4" y="321.0" width="36.0" height="29.3" fill="#8c8c96" />
<rect x="1731.4" y="348.5" width="36.0" height="1.8" fill="#7b7c86" />
<rect x="1854.4" y="321.0" width="36.0" height="29.3" fill="#8c8c96" />
<rect x="1854.4" y="348.5" width="36.0" height="1.8" fill="#7b7c86" />
<rect x="1978.4" y="321.0" width="36.0" height="29.3" fill="#8c8c96" />
<rect x="1978.4" y="348.5" width="36.0" height="1.8" fill="#7b7c86" />
<rect x="965.6" y="204.0" width="47.2" height="37.4" fill="#8b8b8b" />
<polygon points="968.3,204.0 972.2,204.0 978.9,241.4 975.6,241.4" fill="#6c6d72" />
<polygon points="976.7,204.0 980.6,204.0 987.2,241.4 983.9,241.4" fill="#b9b9b9" />
<polygon points="986.4,204.0 990.3,204.0 996.9,241.4 993.6,241.4" fill="#6c6d72" />
<polygon points="996.1,204.0 1000.0,204.0 1006.7,241.4 1003.3,241.4" fill="#b9b9b9" />
<polygon points="1004.4,204.0 1008.3,204.0 1015.0,241.4 1011.7,241.4" fill="#6c6d72" />
<rect x="965.6" y="238.0" width="47.2" height="3.4" fill="#6f7079" />
<polygon points="783.6,423.3 965.6,423.3 1016.9,498.4 869.0,498.4" fill="#7f7f7f" />
<line x1="806.7" y1="443.6" x2="979.4" y2="443.6" stroke="#6a6a6a" stroke-width="1.6"/>
<line x1="828.8" y1="463.1" x2="992.8" y2="463.1" stroke="#6a6a6a" stroke-width="1.6"/>
<line x1="849.3" y1="481.2" x2="1005.1" y2="481.2" stroke="#6a6a6a" stroke-width="1.6"/>
<polygon points="889.0,450.5 921.0,450.5 930.1,460.0 894.1,460.0" fill="#6b6b6d" /><polygon points="899.6,452.7 913.6,452.7 917.5,456.5 901.5,456.5" fill="#7b9ab4" /><polygon points="900.7,456.8 918.7,456.8 921.5,459.1 901.5,459.1" fill="#9c9ca4" />
<polygon points="922.0,486.0 950.0,486.0 958.3,495.0 926.3,495.0" fill="#6b6b6d" /><polygon points="932.5,488.2 942.5,488.2 946.2,492.0 934.2,492.0" fill="#7b9ab4" /><polygon points="933.4,492.3 947.4,492.3 950.0,494.6 934.0,494.6" fill="#9c9ca4" />
<line x1="966.6" y1="423.3" x2="1017.9" y2="498.4" stroke="#a3a3a3" stroke-width="4"/>
<polygon points="783.6,203.9 965.6,203.9 965.6,280.3 951.7,280.3 951.7,346.9 965.6,346.9 965.6,423.3 783.6,423.3 783.6,344.2 798.9,344.2 798.9,280.3 783.6,280.3" fill="#8c8c96" />
<rect x="951.7" y="280.3" width="13.9" height="66.7" fill="#8f8f93" />
<polygon points="953.9,287.2 964.2,309.4 964.2,345.6 953.9,323.3" fill="#c4c4c8" />
<polygon points="956.7,320.6 963.3,331.7 963.3,345.6 956.7,341.4" fill="#b9bde0" />
<rect x="951.7" y="280.3" width="2.2" height="66.7" fill="#6c6d72" />
<polygon points="812.8,203.9 941.9,203.9 941.9,220.6 955.0,220.6 955.0,269.2 941.9,269.2 941.9,356.7 955.0,356.7 955.0,411.4 798.9,411.4 798.9,358.1 812.8,358.1 812.8,269.2 798.9,269.2 798.9,220.6 812.8,220.6" fill="#5e616b" />
<rect x="798.9" y="220.6" width="13.9" height="2.2" fill="#6f7079" />
<rect x="941.9" y="220.6" width="13.1" height="2.2" fill="#6f7079" />
<rect x="798.9" y="358.1" width="13.9" height="2.2" fill="#6f7079" />
<rect x="941.9" y="356.7" width="13.1" height="2.2" fill="#6f7079" />
<rect x="810.0" y="203.9" width="2.8" height="16.7" fill="#6f7079" />
<rect x="810.0" y="269.2" width="2.8" height="88.9" fill="#6f7079" />
<rect x="794.7" y="220.6" width="4.2" height="48.6" fill="#6f7079" />
<rect x="794.7" y="358.1" width="4.2" height="53.3" fill="#6f7079" />
<rect x="862.8" y="226.9" width="29.7" height="35.8" fill="#8c8c96" />
<rect x="862.8" y="260.8" width="29.7" height="1.9" fill="#7b7c86" />
<rect x="862.8" y="351.1" width="29.7" height="36.1" fill="#8c8c96" />
<rect x="862.8" y="385.3" width="29.7" height="1.9" fill="#7b7c86" />
<rect x="779.4" y="280.3" width="19.4" height="63.9" fill="#4a505e" />
<polygon points="783.6,280.3 798.9,280.3 798.9,291.4" fill="#777780" />
<g transform="translate(767.0,548.1) scale(0.2860)"><rect x="0" y="0" width="100" height="100" fill="#ea652d"/><rect x="0" y="94" width="100" height="6" fill="#d95c28"/><path d="M52 14 C78 18 92 40 86 60 C80 80 58 88 38 80 C28 76 20 68 16 60 C30 68 52 64 60 48 C64 36 60 24 52 14 Z" fill="#c4c5c9"/><path d="M86 60 C80 80 58 88 38 80 C28 76 20 68 16 60 C30 70 50 72 62 62 C72 70 80 68 86 60 Z" fill="#a2a3a9"/><path d="M10 40 C18 44 24 40 28 30 C34 34 40 28 44 24 C50 30 56 36 55 48 C52 60 40 66 30 64 C22 62 14 52 10 40 Z" fill="#d25b29"/><path d="M16 48 C24 50 30 48 36 42 C42 46 50 44 54 50 C50 60 40 66 30 64 C22 62 18 56 16 48 Z" fill="#c4552a"/></g>
<g transform="translate(813.3,591.2) scale(0.2860)"><rect x="0" y="0" width="100" height="100" fill="#ea652d"/><rect x="0" y="94" width="100" height="6" fill="#d95c28"/><path d="M52 14 C78 18 92 40 86 60 C80 80 58 88 38 80 C28 76 20 68 16 60 C30 68 52 64 60 48 C64 36 60 24 52 14 Z" fill="#c4c5c9"/><path d="M86 60 C80 80 58 88 38 80 C28 76 20 68 16 60 C30 70 50 72 62 62 C72 70 80 68 86 60 Z" fill="#a2a3a9"/><path d="M10 40 C18 44 24 40 28 30 C34 34 40 28 44 24 C50 30 56 36 55 48 C52 60 40 66 30 64 C22 62 14 52 10 40 Z" fill="#d25b29"/><path d="M16 48 C24 50 30 48 36 42 C42 46 50 44 54 50 C50 60 40 66 30 64 C22 62 18 56 16 48 Z" fill="#c4552a"/></g>
<g transform="translate(873.5,581.9) scale(0.2860)"><rect x="0" y="0" width="100" height="100" fill="#ea652d"/><rect x="0" y="94" width="100" height="6" fill="#d95c28"/><path d="M52 14 C78 18 92 40 86 60 C80 80 58 88 38 80 C28 76 20 68 16 60 C30 68 52 64 60 48 C64 36 60 24 52 14 Z" fill="#c4c5c9"/><path d="M86 60 C80 80 58 88 38 80 C28 76 20 68 16 60 C30 70 50 72 62 62 C72 70 80 68 86 60 Z" fill="#a2a3a9"/><path d="M10 40 C18 44 24 40 28 30 C34 34 40 28 44 24 C50 30 56 36 55 48 C52 60 40 66 30 64 C22 62 14 52 10 40 Z" fill="#d25b29"/><path d="M16 48 C24 50 30 48 36 42 C42 46 50 44 54 50 C50 60 40 66 30 64 C22 62 18 56 16 48 Z" fill="#c4552a"/></g>
<g transform="translate(923.2,544.7) scale(0.2860)"><rect x="0" y="0" width="100" height="100" fill="#ea652d"/><rect x="0" y="94" width="100" height="6" fill="#d95c28"/><path d="M52 14 C78 18 92 40 86 60 C80 80 58 88 38 80 C28 76 20 68 16 60 C30 68 52 64 60 48 C64 36 60 24 52 14 Z" fill="#c4c5c9"/><path d="M86 60 C80 80 58 88 38 80 C28 76 20 68 16 60 C30 70 50 72 62 62 C72 70 80 68 86 60 Z" fill="#a2a3a9"/><path d="M10 40 C18 44 24 40 28 30 C34 34 40 28 44 24 C50 30 56 36 55 48 C52 60 40 66 30 64 C22 62 14 52 10 40 Z" fill="#d25b29"/><path d="M16 48 C24 50 30 48 36 42 C42 46 50 44 54 50 C50 60 40 66 30 64 C22 62 18 56 16 48 Z" fill="#c4552a"/></g>
<rect x="912.6" y="849.0" width="86.8" height="44.3" fill="#555a68" />
<rect x="962.2" y="844.3" width="5.6" height="53.5" fill="#f0ae4a" />
<rect x="898.3" y="851.9" width="96.2" height="39.1" fill="#f4b04c" />
<rect x="898.3" y="859.4" width="2.0" height="26.0" fill="#e4e2df" />
<rect x="944.0" y="852.0" width="22.0" height="3.4" fill="#efefef" />
<rect x="944.0" y="887.8" width="22.0" height="2.7" fill="#e4dccd" />
<polygon points="944.3,859.4 950.7,859.4 953.7,863.0 953.7,881.5 950.7,885.4 944.3,885.4 941.3,881.5 941.3,863.0" fill="#e9e9ea" />
<polygon points="959.0,858.5 970.0,856.7 970.0,886.7 959.0,885.0" fill="#d6d6d8" />
<rect x="992.7" y="866.0" width="1.8" height="12.0" fill="#555a68" />
<rect x="1101.1" y="849.0" width="86.8" height="44.3" fill="#555a68" />
<rect x="1152.0" y="844.3" width="5.6" height="53.5" fill="#f0ae4a" />
<rect x="1086.8" y="851.9" width="96.2" height="39.1" fill="#f4b04c" />
<rect x="1086.8" y="859.4" width="2.0" height="26.0" fill="#e4e2df" />
<rect x="1133.0" y="852.0" width="21.0" height="3.4" fill="#efefef" />
<rect x="1133.0" y="887.8" width="21.0" height="2.7" fill="#e4dccd" />
<polygon points="1136.0,859.4 1142.4,859.4 1145.4,863.0 1145.4,881.5 1142.4,885.4 1136.0,885.4 1133.0,881.5 1133.0,863.0" fill="#e9e9ea" />
<polygon points="1150.7,858.5 1158.5,856.7 1158.5,886.7 1150.7,885.0" fill="#d6d6d8" />
<rect x="1181.2" y="866.0" width="1.8" height="12.0" fill="#555a68" />
<rect x="1386.6" y="848.6" width="93.0" height="43.8" fill="#555a68" />
<rect x="1453.9" y="844.4" width="6.9" height="54.2" fill="#5b75cc" />
<rect x="1453.9" y="844.4" width="2.3" height="54.2" fill="#dfe2f2" />
<rect x="1388.6" y="851.4" width="90.8" height="38.8" fill="#5b75cc" />
<rect x="1405.0" y="854.5" width="52.5" height="30.0" fill="#5f79cf" />
<polygon points="1390.6,857.0 1396.0,857.0 1398.3,860.0 1398.3,883.0 1396.0,886.0 1390.6,886.0" fill="#d2d2e2" />
<polygon points="1464.0,858.0 1467.2,857.0 1467.2,887.5 1464.0,886.0 1462.2,882.0 1462.2,862.0" fill="#d8d9e8" />
<rect x="1443.0" y="851.4" width="17.0" height="3.4" fill="#e6e7f0" />
<rect x="1399.0" y="888.6" width="45.0" height="1.8" fill="#3448b2" />
<rect x="1444.0" y="888.6" width="16.0" height="1.8" fill="#c5c8dc" />
<ellipse cx="1647.8" cy="793.9" rx="9.4" ry="19.2" fill="#b98d34"/><ellipse cx="1648.6" cy="793.4" rx="7.2" ry="17" fill="#cfa03c"/><ellipse cx="1647.8" cy="786.9" rx="3.2" ry="5.5" fill="#b6882f"/><ellipse cx="1647.8" cy="800.9" rx="3.4" ry="5.5" fill="#b6882f"/><ellipse cx="1648.3" cy="786.9" rx="1.6" ry="3" fill="#cfa03c"/><ellipse cx="1648.3" cy="800.9" rx="1.6" ry="3" fill="#cfa03c"/>
<ellipse cx="1760.8" cy="793.9" rx="9.4" ry="19.2" fill="#b98d34"/><ellipse cx="1761.6" cy="793.4" rx="7.2" ry="17" fill="#cfa03c"/><ellipse cx="1760.8" cy="786.9" rx="3.2" ry="5.5" fill="#b6882f"/><ellipse cx="1760.8" cy="800.9" rx="3.4" ry="5.5" fill="#b6882f"/><ellipse cx="1761.3" cy="786.9" rx="1.6" ry="3" fill="#cfa03c"/><ellipse cx="1761.3" cy="800.9" rx="1.6" ry="3" fill="#cfa03c"/>
<ellipse cx="1872.0" cy="793.9" rx="9.4" ry="19.2" fill="#b98d34"/><ellipse cx="1872.8" cy="793.4" rx="7.2" ry="17" fill="#cfa03c"/><ellipse cx="1872.0" cy="786.9" rx="3.2" ry="5.5" fill="#b6882f"/><ellipse cx="1872.0" cy="800.9" rx="3.4" ry="5.5" fill="#b6882f"/><ellipse cx="1872.5" cy="786.9" rx="1.6" ry="3" fill="#cfa03c"/><ellipse cx="1872.5" cy="800.9" rx="1.6" ry="3" fill="#cfa03c"/>
<rect x="1010.0" y="658.8" width="81.0" height="3.7" fill="#585c6e" />
<rect x="1018.0" y="658.2" width="18.0" height="1.8" fill="#4b4e5c" />
<rect x="1064.0" y="658.2" width="19.0" height="1.8" fill="#4b4e5c" />
<rect x="1009.5" y="701.0" width="85.0" height="5.8" fill="#5a5f70" />
<rect x="1007.0" y="663.6" width="83.8" height="37.7" fill="#d63b78" />
<rect x="1007.0" y="663.6" width="3.2" height="37.7" fill="#e5507f" />
<polygon points="1020.8,666.2 1026.1,668.5 1026.1,694.0 1020.8,696.4" fill="#bcbad2" />
<polygon points="1058.0,667.0 1069.0,666.2 1069.0,697.0 1063.0,695.5 1056.8,694.0 1056.8,668.0" fill="#cac9d7" />
<rect x="1085.4" y="664.0" width="5.0" height="8.0" fill="#e0a352" />
<rect x="1085.4" y="692.7" width="5.0" height="7.9" fill="#e0a352" />
<polygon points="1027.0,695.8 1041.5,695.8 1041.5,701.2 1019.5,701.2" fill="#a93659" />
<polygon points="1041.5,697.0 1057.0,697.0 1060.0,701.2 1041.5,701.2" fill="#9b99b1" />
<rect x="1060.5" y="658.6" width="3.5" height="3.4" fill="#e23a55" />
<circle cx="1062.2" cy="703" r="2" fill="#d63b78"/>
<rect x="1009.2" y="662.2" width="86.2" height="45.3" fill="none" stroke="#5b64c9" stroke-width="1.6"/>
<rect x="983.2" y="636.4" width="17.4" height="17.4" fill="#f3f3f5" stroke="#5b64c9" stroke-width="1.8"/>
<rect x="983.2" y="716.7" width="17.4" height="17.4" fill="#f3f3f5" stroke="#5b64c9" stroke-width="1.8"/>
<rect x="1104.1" y="636.4" width="17.4" height="17.4" fill="#f3f3f5" stroke="#5b64c9" stroke-width="1.8"/>
<rect x="1104.1" y="716.7" width="17.4" height="17.4" fill="#f3f3f5" stroke="#5b64c9" stroke-width="1.8"/>
<rect x="1045.3" y="640.2" width="13.6" height="13.6" fill="#f3f3f5" stroke="#5b64c9" stroke-width="1.8"/>
<rect x="1045.3" y="716.5" width="13.6" height="13.6" fill="#f3f3f5" stroke="#5b64c9" stroke-width="1.8"/>
<rect x="986.7" y="677.4" width="13.6" height="13.6" fill="#f3f3f5" stroke="#5b64c9" stroke-width="1.8"/>
<rect x="1104.2" y="677.4" width="13.6" height="13.6" fill="#f3f3f5" stroke="#5b64c9" stroke-width="1.8"/>
<circle cx="1052.4" cy="598.8" r="6.3" fill="#f3f3f5" stroke="#5b64c9" stroke-width="1.8"/>
<polygon points="1212.8,941.1 1287.2,941.1 1287.2,991.7 1212.8,991.7" fill="#83837b" />
<polygon points="1203.9,931.9 1212.8,931.9 1212.8,1019.4 1203.9,1019.4" fill="#b3bbb3" />
<polygon points="1287.2,931.9 1296.1,931.9 1298.3,963.9 1298.3,1019.4 1288.6,1019.4" fill="#b3bbb3" />
<polygon points="1203.9,931.9 1212.8,931.9 1212.8,975.0 1203.9,975.0" fill="#c0c6c0" />
<polygon points="1126.1,1008.3 1133.1,1008.3 1133.1,996.7 1166.4,996.7 1166.4,1044.4 1126.1,1044.4" fill="#83837b" />
<polygon points="1334.4,996.7 1368.3,996.7 1368.3,1008.3 1377.5,1008.3 1377.5,1044.4 1334.4,1044.4" fill="#83837b" />
<polygon points="1130.3,1033.3 1136.7,1033.3 1136.7,1151.4 1130.3,1151.4" fill="#8c8c8c" />
<polygon points="1371.9,1033.3 1375.6,1033.3 1375.6,1151.4 1371.9,1151.4" fill="#8c8c8c" />
<polygon points="1162.2,1012.5 1341.4,1012.5 1341.4,1030.6 1162.2,1030.6" fill="#85603f" />
<polygon points="1212.8,988.9 1291.4,988.9 1291.4,1022.2 1212.8,1022.2" fill="#98764f" />
<polygon points="1212.8,986.1 1291.4,986.1 1290.0,1006.9 1253.9,1012.5 1215.0,1006.9" fill="#85603f" />
<polygon points="1137.2,1023.6 1370.6,1023.6 1370.6,1033.3 1137.2,1033.3" fill="#83837b" />
<polygon points="1220.6,1019.4 1281.7,1019.4 1278.9,1026.4 1223.3,1026.4" fill="#c56a3a" />
<polygon points="1231.7,1022.2 1276.1,1022.2 1273.3,1025.6 1234.4,1025.6" fill="#d6d6d6" />
<clipPath id="rbl"><polygon points="1136.7,1044.4 1246.9,1058.3 1246.9,1269.4 1136.7,1240.3"/></clipPath>
<clipPath id="rbr"><polygon points="1262.2,1058.3 1371.9,1044.4 1371.9,1240.3 1262.2,1269.4"/></clipPath>
<polygon points="1136.7,1044.4 1246.9,1058.3 1246.9,1269.4 1136.7,1240.3" fill="#b25347" />
<polygon points="1262.2,1058.3 1371.9,1044.4 1371.9,1240.3 1262.2,1269.4" fill="#b25347" />
<g clip-path="url(#rbl)">
<polygon points="1136.7,1062.1 1159.4,1068.0 1159.4,1079.1 1136.7,1073.2" fill="#a84d42" />
<polygon points="1136.7,1068.8 1159.4,1074.7 1159.4,1079.7 1136.7,1073.8" fill="#9a463c" />
<polygon points="1158.9,1069.2 1181.7,1075.1 1181.7,1086.2 1158.9,1080.3" fill="#a84d42" />
<polygon points="1158.9,1075.9 1181.7,1081.8 1181.7,1086.8 1158.9,1080.9" fill="#9a463c" />
<polygon points="1181.1,1074.1 1203.9,1080.0 1203.9,1091.1 1181.1,1085.2" fill="#a84d42" />
<polygon points="1181.1,1080.8 1203.9,1086.7 1203.9,1091.7 1181.1,1085.8" fill="#9a463c" />
<polygon points="1203.3,1081.0 1226.1,1086.9 1226.1,1098.0 1203.3,1092.2" fill="#a84d42" />
<polygon points="1203.3,1087.7 1226.1,1093.6 1226.1,1098.6 1203.3,1092.7" fill="#9a463c" />
<polygon points="1225.6,1085.4 1248.3,1091.3 1248.3,1102.4 1225.6,1096.5" fill="#a84d42" />
<polygon points="1225.6,1092.1 1248.3,1098.0 1248.3,1103.0 1225.6,1097.1" fill="#9a463c" />
<polygon points="1136.7,1090.1 1159.4,1096.0 1159.4,1107.1 1136.7,1101.3" fill="#a84d42" />
<polygon points="1136.7,1096.8 1159.4,1102.7 1159.4,1107.7 1136.7,1101.8" fill="#9a463c" />
<polygon points="1158.9,1098.1 1181.7,1104.0 1181.7,1115.1 1158.9,1109.2" fill="#a84d42" />
<polygon points="1158.9,1104.8 1181.7,1110.7 1181.7,1115.7 1158.9,1109.8" fill="#9a463c" />
<polygon points="1181.1,1102.4 1203.9,1108.3 1203.9,1119.4 1181.1,1113.6" fill="#a84d42" />
<polygon points="1181.1,1109.1 1203.9,1115.0 1203.9,1120.0 1181.1,1114.1" fill="#9a463c" />
<polygon points="1203.3,1109.7 1226.1,1115.5 1226.1,1126.7 1203.3,1120.8" fill="#a84d42" />
<polygon points="1203.3,1116.3 1226.1,1122.2 1226.1,1127.2 1203.3,1121.3" fill="#9a463c" />
<polygon points="1225.6,1113.4 1248.3,1119.3 1248.3,1130.4 1225.6,1124.5" fill="#a84d42" />
<polygon points="1225.6,1120.1 1248.3,1125.9 1248.3,1130.9 1225.6,1125.1" fill="#9a463c" />
<polygon points="1136.7,1118.1 1159.4,1124.0 1159.4,1135.1 1136.7,1129.2" fill="#a84d42" />
<polygon points="1136.7,1124.8 1159.4,1130.7 1159.4,1135.7 1136.7,1129.8" fill="#9a463c" />
<polygon points="1158.9,1125.0 1181.7,1130.9 1181.7,1142.0 1158.9,1136.1" fill="#a84d42" />
<polygon points="1158.9,1131.7 1181.7,1137.6 1181.7,1142.6 1158.9,1136.7" fill="#9a463c" />
<polygon points="1181.1,1129.4 1203.9,1135.2 1203.9,1146.3 1181.1,1140.5" fill="#a84d42" />
<polygon points="1181.1,1136.0 1203.9,1141.9 1203.9,1146.9 1181.1,1141.0" fill="#9a463c" />
<polygon points="1203.3,1136.5 1226.1,1142.4 1226.1,1153.5 1203.3,1147.6" fill="#a84d42" />
<polygon points="1203.3,1143.2 1226.1,1149.1 1226.1,1154.1 1203.3,1148.2" fill="#9a463c" />
<polygon points="1225.6,1141.2 1248.3,1147.0 1248.3,1158.2 1225.6,1152.3" fill="#a84d42" />
<polygon points="1225.6,1147.8 1248.3,1153.7 1248.3,1158.7 1225.6,1152.8" fill="#9a463c" />
<polygon points="1136.7,1146.4 1159.4,1152.3 1159.4,1163.4 1136.7,1157.5" fill="#a84d42" />
<polygon points="1136.7,1153.1 1159.4,1159.0 1159.4,1164.0 1136.7,1158.1" fill="#9a463c" />
<polygon points="1158.9,1153.6 1181.7,1159.4 1181.7,1170.5 1158.9,1164.7" fill="#a84d42" />
<polygon points="1158.9,1160.2 1181.7,1166.1 1181.7,1171.1 1158.9,1165.2" fill="#9a463c" />
<polygon points="1181.1,1158.0 1203.9,1163.9 1203.9,1175.0 1181.1,1169.1" fill="#a84d42" />
<polygon points="1181.1,1164.7 1203.9,1170.6 1203.9,1175.6 1181.1,1169.7" fill="#9a463c" />
<polygon points="1203.3,1165.3 1226.1,1171.1 1226.1,1182.3 1203.3,1176.4" fill="#a84d42" />
<polygon points="1203.3,1171.9 1226.1,1177.8 1226.1,1182.8 1203.3,1176.9" fill="#9a463c" />
<polygon points="1225.6,1168.9 1248.3,1174.8 1248.3,1185.9 1225.6,1180.0" fill="#a84d42" />
<polygon points="1225.6,1175.6 1248.3,1181.5 1248.3,1186.5 1225.6,1180.6" fill="#9a463c" />
<polygon points="1136.7,1173.3 1159.4,1179.2 1159.4,1190.3 1136.7,1184.5" fill="#a84d42" />
<polygon points="1136.7,1180.0 1159.4,1185.9 1159.4,1190.9 1136.7,1185.0" fill="#9a463c" />
<polygon points="1158.9,1181.1 1181.7,1186.9 1181.7,1198.0 1158.9,1192.2" fill="#a84d42" />
<polygon points="1158.9,1187.7 1181.7,1193.6 1181.7,1198.6 1158.9,1192.7" fill="#9a463c" />
<polygon points="1181.1,1185.7 1203.9,1191.6 1203.9,1202.7 1181.1,1196.8" fill="#a84d42" />
<polygon points="1181.1,1192.4 1203.9,1198.2 1203.9,1203.2 1181.1,1197.4" fill="#9a463c" />
<polygon points="1203.3,1193.1 1226.1,1199.0 1226.1,1210.1 1203.3,1204.2" fill="#a84d42" />
<polygon points="1203.3,1199.8 1226.1,1205.7 1226.1,1210.7 1203.3,1204.8" fill="#9a463c" />
<polygon points="1225.6,1197.6 1248.3,1203.5 1248.3,1214.6 1225.6,1208.8" fill="#a84d42" />
<polygon points="1225.6,1204.3 1248.3,1210.2 1248.3,1215.2 1225.6,1209.3" fill="#9a463c" />
<polygon points="1136.7,1200.8 1159.4,1206.7 1159.4,1217.8 1136.7,1211.9" fill="#a84d42" />
<polygon points="1136.7,1207.5 1159.4,1213.4 1159.4,1218.4 1136.7,1212.5" fill="#9a463c" />
<polygon points="1158.9,1208.8 1181.7,1214.7 1181.7,1225.8 1158.9,1219.9" fill="#a84d42" />
<polygon points="1158.9,1215.5 1181.7,1221.3 1181.7,1226.3 1158.9,1220.5" fill="#9a463c" />
<polygon points="1181.1,1213.4 1203.9,1219.3 1203.9,1230.4 1181.1,1224.5" fill="#a84d42" />
<polygon points="1181.1,1220.0 1203.9,1225.9 1203.9,1230.9 1181.1,1225.0" fill="#9a463c" />
<polygon points="1203.3,1220.4 1226.1,1226.3 1226.1,1237.4 1203.3,1231.5" fill="#a84d42" />
<polygon points="1203.3,1227.1 1226.1,1233.0 1226.1,1238.0 1203.3,1232.1" fill="#9a463c" />
<polygon points="1225.6,1224.5 1248.3,1230.3 1248.3,1241.4 1225.6,1235.6" fill="#a84d42" />
<polygon points="1225.6,1231.1 1248.3,1237.0 1248.3,1242.0 1225.6,1236.1" fill="#9a463c" />
<polygon points="1136.7,1229.1 1159.4,1235.0 1159.4,1246.1 1136.7,1240.2" fill="#a84d42" />
<polygon points="1136.7,1235.8 1159.4,1241.7 1159.4,1246.7 1136.7,1240.8" fill="#9a463c" />
<polygon points="1158.9,1235.9 1181.7,1241.7 1181.7,1252.9 1158.9,1247.0" fill="#a84d42" />
<polygon points="1158.9,1242.5 1181.7,1248.4 1181.7,1253.4 1158.9,1247.5" fill="#9a463c" />
<polygon points="1181.1,1241.5 1203.9,1247.4 1203.9,1258.5 1181.1,1252.6" fill="#a84d42" />
<polygon points="1181.1,1248.2 1203.9,1254.1 1203.9,1259.1 1181.1,1253.2" fill="#9a463c" />
<polygon points="1203.3,1248.7 1226.1,1254.6 1226.1,1265.7 1203.3,1259.8" fill="#a84d42" />
<polygon points="1203.3,1255.4 1226.1,1261.2 1226.1,1266.2 1203.3,1260.4" fill="#9a463c" />
<polygon points="1225.6,1252.7 1248.3,1258.6 1248.3,1269.7 1225.6,1263.9" fill="#a84d42" />
<polygon points="1225.6,1259.4 1248.3,1265.3 1248.3,1270.3 1225.6,1264.4" fill="#9a463c" />
<polygon points="1136.7,1256.7 1159.4,1262.5 1159.4,1273.7 1136.7,1267.8" fill="#a84d42" />
<polygon points="1136.7,1263.3 1159.4,1269.2 1159.4,1274.2 1136.7,1268.3" fill="#9a463c" />
<polygon points="1158.9,1264.8 1181.7,1270.7 1181.7,1281.8 1158.9,1275.9" fill="#a84d42" />
<polygon points="1158.9,1271.4 1181.7,1277.3 1181.7,1282.3 1158.9,1276.4" fill="#9a463c" />
<polygon points="1181.1,1268.8 1203.9,1274.7 1203.9,1285.8 1181.1,1279.9" fill="#a84d42" />
<polygon points="1181.1,1275.5 1203.9,1281.3 1203.9,1286.3 1181.1,1280.5" fill="#9a463c" />
<polygon points="1203.3,1276.5 1226.1,1282.4 1226.1,1293.5 1203.3,1287.6" fill="#a84d42" />
<polygon points="1203.3,1283.2 1226.1,1289.0 1226.1,1294.0 1203.3,1288.2" fill="#9a463c" />
<polygon points="1225.6,1280.9 1248.3,1286.8 1248.3,1297.9 1225.6,1292.0" fill="#a84d42" />
<polygon points="1225.6,1287.6 1248.3,1293.5 1248.3,1298.5 1225.6,1292.6" fill="#9a463c" />
</g>
<g clip-path="url(#rbr)">
<polygon points="1262.2,1076.4 1285.0,1070.5 1285.0,1081.6 1262.2,1087.5" fill="#a84d42" />
<polygon points="1262.2,1083.1 1285.0,1077.2 1285.0,1082.2 1262.2,1088.1" fill="#9a463c" />
<polygon points="1284.4,1071.8 1307.2,1065.9 1307.2,1077.0 1284.4,1082.9" fill="#a84d42" />
<polygon points="1284.4,1078.4 1307.2,1072.6 1307.2,1077.6 1284.4,1083.4" fill="#9a463c" />
<polygon points="1306.7,1064.8 1329.4,1058.9 1329.4,1070.0 1306.7,1075.9" fill="#a84d42" />
<polygon points="1306.7,1071.4 1329.4,1065.6 1329.4,1070.6 1306.7,1076.4" fill="#9a463c" />
<polygon points="1328.9,1060.0 1351.7,1054.2 1351.7,1065.3 1328.9,1071.2" fill="#a84d42" />
<polygon points="1328.9,1066.7 1351.7,1060.8 1351.7,1065.8 1328.9,1071.7" fill="#9a463c" />
<polygon points="1351.1,1052.4 1373.9,1046.5 1373.9,1057.6 1351.1,1063.5" fill="#a84d42" />
<polygon points="1351.1,1059.1 1373.9,1053.2 1373.9,1058.2 1351.1,1064.1" fill="#9a463c" />
<polygon points="1262.2,1103.9 1285.0,1098.0 1285.0,1109.1 1262.2,1115.0" fill="#a84d42" />
<polygon points="1262.2,1110.6 1285.0,1104.7 1285.0,1109.7 1262.2,1115.6" fill="#9a463c" />
<polygon points="1284.4,1100.1 1307.2,1094.2 1307.2,1105.3 1284.4,1111.2" fill="#a84d42" />
<polygon points="1284.4,1106.8 1307.2,1100.9 1307.2,1105.9 1284.4,1111.8" fill="#9a463c" />
<polygon points="1306.7,1091.8 1329.4,1085.9 1329.4,1097.0 1306.7,1102.9" fill="#a84d42" />
<polygon points="1306.7,1098.4 1329.4,1092.6 1329.4,1097.6 1306.7,1103.4" fill="#9a463c" />
<polygon points="1328.9,1087.3 1351.7,1081.4 1351.7,1092.5 1328.9,1098.4" fill="#a84d42" />
<polygon points="1328.9,1094.0 1351.7,1088.1 1351.7,1093.1 1328.9,1099.0" fill="#9a463c" />
<polygon points="1351.1,1080.8 1373.9,1075.0 1373.9,1086.1 1351.1,1091.9" fill="#a84d42" />
<polygon points="1351.1,1087.5 1373.9,1081.6 1373.9,1086.6 1351.1,1092.5" fill="#9a463c" />
<polygon points="1262.2,1131.6 1285.0,1125.8 1285.0,1136.9 1262.2,1142.8" fill="#a84d42" />
<polygon points="1262.2,1138.3 1285.0,1132.4 1285.0,1137.4 1262.2,1143.3" fill="#9a463c" />
<polygon points="1284.4,1127.5 1307.2,1121.6 1307.2,1132.7 1284.4,1138.6" fill="#a84d42" />
<polygon points="1284.4,1134.2 1307.2,1128.3 1307.2,1133.3 1284.4,1139.2" fill="#9a463c" />
<polygon points="1306.7,1120.1 1329.4,1114.3 1329.4,1125.4 1306.7,1131.3" fill="#a84d42" />
<polygon points="1306.7,1126.8 1329.4,1120.9 1329.4,1125.9 1306.7,1131.8" fill="#9a463c" />
<polygon points="1328.9,1115.5 1351.7,1109.6 1351.7,1120.7 1328.9,1126.6" fill="#a84d42" />
<polygon points="1328.9,1122.1 1351.7,1116.3 1351.7,1121.3 1328.9,1127.1" fill="#9a463c" />
<polygon points="1351.1,1109.1 1373.9,1103.2 1373.9,1114.4 1351.1,1120.2" fill="#a84d42" />
<polygon points="1351.1,1115.8 1373.9,1109.9 1373.9,1114.9 1351.1,1120.8" fill="#9a463c" />
<polygon points="1262.2,1159.3 1285.0,1153.4 1285.0,1164.5 1262.2,1170.4" fill="#a84d42" />
<polygon points="1262.2,1166.0 1285.0,1160.1 1285.0,1165.1 1262.2,1171.0" fill="#9a463c" />
<polygon points="1284.4,1155.1 1307.2,1149.2 1307.2,1160.3 1284.4,1166.2" fill="#a84d42" />
<polygon points="1284.4,1161.8 1307.2,1155.9 1307.2,1160.9 1284.4,1166.8" fill="#9a463c" />
<polygon points="1306.7,1147.6 1329.4,1141.7 1329.4,1152.8 1306.7,1158.7" fill="#a84d42" />
<polygon points="1306.7,1154.2 1329.4,1148.3 1329.4,1153.3 1306.7,1159.2" fill="#9a463c" />
<polygon points="1328.9,1143.7 1351.7,1137.8 1351.7,1148.9 1328.9,1154.8" fill="#a84d42" />
<polygon points="1328.9,1150.3 1351.7,1144.5 1351.7,1149.5 1328.9,1155.3" fill="#9a463c" />
<polygon points="1351.1,1135.9 1373.9,1130.0 1373.9,1141.1 1351.1,1147.0" fill="#a84d42" />
<polygon points="1351.1,1142.6 1373.9,1136.7 1373.9,1141.7 1351.1,1147.6" fill="#9a463c" />
<polygon points="1262.2,1187.3 1285.0,1181.4 1285.0,1192.5 1262.2,1198.4" fill="#a84d42" />
<polygon points="1262.2,1194.0 1285.0,1188.1 1285.0,1193.1 1262.2,1199.0" fill="#9a463c" />
<polygon points="1284.4,1183.4 1307.2,1177.5 1307.2,1188.6 1284.4,1194.5" fill="#a84d42" />
<polygon points="1284.4,1190.0 1307.2,1184.1 1307.2,1189.1 1284.4,1195.0" fill="#9a463c" />
<polygon points="1306.7,1175.5 1329.4,1169.6 1329.4,1180.7 1306.7,1186.6" fill="#a84d42" />
<polygon points="1306.7,1182.2 1329.4,1176.3 1329.4,1181.3 1306.7,1187.2" fill="#9a463c" />
<polygon points="1328.9,1171.3 1351.7,1165.5 1351.7,1176.6 1328.9,1182.4" fill="#a84d42" />
<polygon points="1328.9,1178.0 1351.7,1172.1 1351.7,1177.1 1328.9,1183.0" fill="#9a463c" />
<polygon points="1351.1,1164.6 1373.9,1158.7 1373.9,1169.8 1351.1,1175.7" fill="#a84d42" />
<polygon points="1351.1,1171.2 1373.9,1165.3 1373.9,1170.3 1351.1,1176.2" fill="#9a463c" />
<polygon points="1262.2,1214.7 1285.0,1208.8 1285.0,1220.0 1262.2,1225.8" fill="#a84d42" />
<polygon points="1262.2,1221.4 1285.0,1215.5 1285.0,1220.5 1262.2,1226.4" fill="#9a463c" />
<polygon points="1284.4,1210.2 1307.2,1204.3 1307.2,1215.4 1284.4,1221.3" fill="#a84d42" />
<polygon points="1284.4,1216.8 1307.2,1211.0 1307.2,1216.0 1284.4,1221.8" fill="#9a463c" />
<polygon points="1306.7,1203.1 1329.4,1197.3 1329.4,1208.4 1306.7,1214.3" fill="#a84d42" />
<polygon points="1306.7,1209.8 1329.4,1203.9 1329.4,1208.9 1306.7,1214.8" fill="#9a463c" />
<polygon points="1328.9,1199.4 1351.7,1193.5 1351.7,1204.6 1328.9,1210.5" fill="#a84d42" />
<polygon points="1328.9,1206.1 1351.7,1200.2 1351.7,1205.2 1328.9,1211.1" fill="#9a463c" />
<polygon points="1351.1,1191.9 1373.9,1186.1 1373.9,1197.2 1351.1,1203.0" fill="#a84d42" />
<polygon points="1351.1,1198.6 1373.9,1192.7 1373.9,1197.7 1351.1,1203.6" fill="#9a463c" />
<polygon points="1262.2,1242.7 1285.0,1236.8 1285.0,1247.9 1262.2,1253.8" fill="#a84d42" />
<polygon points="1262.2,1249.4 1285.0,1243.5 1285.0,1248.5 1262.2,1254.4" fill="#9a463c" />
<polygon points="1284.4,1238.3 1307.2,1232.5 1307.2,1243.6 1284.4,1249.4" fill="#a84d42" />
<polygon points="1284.4,1245.0 1307.2,1239.1 1307.2,1244.1 1284.4,1250.0" fill="#9a463c" />
<polygon points="1306.7,1230.9 1329.4,1225.0 1329.4,1236.1 1306.7,1242.0" fill="#a84d42" />
<polygon points="1306.7,1237.5 1329.4,1231.6 1329.4,1236.6 1306.7,1242.5" fill="#9a463c" />
<polygon points="1328.9,1226.8 1351.7,1220.9 1351.7,1232.0 1328.9,1237.9" fill="#a84d42" />
<polygon points="1328.9,1233.4 1351.7,1227.5 1351.7,1232.5 1328.9,1238.4" fill="#9a463c" />
<polygon points="1351.1,1218.9 1373.9,1213.0 1373.9,1224.1 1351.1,1230.0" fill="#a84d42" />
<polygon points="1351.1,1225.6 1373.9,1219.7 1373.9,1224.7 1351.1,1230.6" fill="#9a463c" />
<polygon points="1262.2,1271.1 1285.0,1265.2 1285.0,1276.3 1262.2,1282.2" fill="#a84d42" />
<polygon points="1262.2,1277.8 1285.0,1271.9 1285.0,1276.9 1262.2,1282.8" fill="#9a463c" />
<polygon points="1284.4,1266.9 1307.2,1261.0 1307.2,1272.1 1284.4,1278.0" fill="#a84d42" />
<polygon points="1284.4,1273.6 1307.2,1267.7 1307.2,1272.7 1284.4,1278.6" fill="#9a463c" />
<polygon points="1306.7,1259.7 1329.4,1253.8 1329.4,1264.9 1306.7,1270.8" fill="#a84d42" />
<polygon points="1306.7,1266.4 1329.4,1260.5 1329.4,1265.5 1306.7,1271.4" fill="#9a463c" />
<polygon points="1328.9,1254.9 1351.7,1249.0 1351.7,1260.1 1328.9,1266.0" fill="#a84d42" />
<polygon points="1328.9,1261.6 1351.7,1255.7 1351.7,1260.7 1328.9,1266.6" fill="#9a463c" />
<polygon points="1351.1,1248.0 1373.9,1242.1 1373.9,1253.2 1351.1,1259.1" fill="#a84d42" />
<polygon points="1351.1,1254.6 1373.9,1248.8 1373.9,1253.8 1351.1,1259.6" fill="#9a463c" />
</g>
<polygon points="1136.7,1240.3 1246.9,1269.4 1246.9,1282.8 1136.7,1256.9" fill="#85603f" />
<polygon points="1262.2,1269.4 1371.9,1240.3 1371.9,1256.9 1262.2,1282.8" fill="#85603f" />
<polygon points="1133.1,1225.0 1136.7,1225.0 1136.7,1240.3 1133.1,1240.3" fill="#a36a3f" />
<polygon points="1133.1,1032.8 1373.3,1032.8 1373.3,1045.8 1262.2,1058.9 1246.9,1058.9 1133.1,1045.8" fill="#85603f" />
<polygon points="1133.1,1032.8 1137.2,1025.6 1146.9,1024.4 1151.1,1032.8" fill="#a98355" />
<polygon points="1355.3,1032.8 1359.4,1024.4 1369.2,1025.6 1373.3,1032.8" fill="#a98355" />
<polygon points="1246.9,975.0 1257.2,973.6 1257.2,1033.3 1262.2,1033.3 1262.2,1298.6 1246.9,1298.6" fill="#85603f" />
<polygon points="1713.4,1040.5 1855.6,1040.5 1857.0,1033.4 1882.6,1033.4 1882.6,1153.6 1740.5,1153.6" fill="#52bf9a" />
<polygon points="1736.2,1153.6 1882.6,1153.6 1882.6,1225.3 1713.4,1225.3 1736.2,1165.0" fill="#3fa384" />
<polygon points="1713.4,1223.3 1882.6,1223.3 1882.6,1225.3 1713.4,1225.3" fill="#4aa88a" />
<polygon points="1760.4,1166.4 1825.2,1166.4 1804.4,1216.8 1740.5,1216.8" fill="#8b8b95" /><polygon points="1762.3,1171.5 1788.8,1171.5 1781.5,1189.6 1755.1,1189.6" fill="#4f5461" /><polygon points="1753.1,1194.6 1779.5,1194.6 1772.6,1211.7 1746.3,1211.7" fill="#4f5461" /><polygon points="1792.7,1171.5 1819.2,1171.5 1811.8,1189.6 1785.4,1189.6" fill="#4f5461" /><polygon points="1783.3,1194.6 1809.7,1194.6 1802.7,1211.7 1776.4,1211.7" fill="#4f5461" />
<polygon points="1844.2,1166.4 1909.1,1166.4 1888.3,1216.8 1823.5,1216.8" fill="#8b8b95" /><polygon points="1846.1,1171.5 1872.6,1171.5 1865.2,1189.6 1838.6,1189.6" fill="#4f5461" /><polygon points="1836.5,1194.6 1863.1,1194.6 1856.0,1211.7 1829.4,1211.7" fill="#4f5461" /><polygon points="1876.5,1171.5 1903.1,1171.5 1895.6,1189.6 1869.0,1189.6" fill="#4f5461" /><polygon points="1867.0,1194.6 1893.6,1194.6 1886.5,1211.7 1859.9,1211.7" fill="#4f5461" />
<polygon points="1681.3,1031.9 1713.4,1040.5 1739.0,1139.4 1740.5,1166.4 1717.7,1207.7 1681.3,1182.1" fill="#c9473b" />
<polygon points="1681.3,1031.9 1855.0,1032.8 1855.0,1040.5 1713.4,1040.5" fill="#ee5148" />
<polygon points="1778.8,1031.9 1824.3,1031.9 1821.5,1037.6 1790.2,1037.6" fill="#8b8b95" />
<polygon points="1685.0,1053.6 1701.5,1058.4 1701.5,1097.3 1685.0,1088.2" fill="#85858f" />
<polygon points="1692.1,1062.6 1697.8,1064.9 1697.8,1086.8 1692.1,1084.0" fill="#bab8dc" />
<polygon points="1660.8,1086.8 1665.1,1086.8 1665.1,1125.8 1660.8,1123.8" fill="#8a8a96" />
<polygon points="1664.3,1090.5 1704.9,1113.8 1740.5,1142.3 1740.5,1166.4 1717.7,1207.7 1681.3,1182.1 1681.3,1133.7 1664.3,1123.8" fill="#c9473b" />
<polygon points="1664.3,1087.7 1682.2,1087.7 1722.0,1106.7 1736.2,1133.7 1761.8,1139.4 1761.8,1166.4 1740.5,1166.4 1740.5,1145.1 1710.6,1125.2 1702.1,1111.6 1664.3,1092.2" fill="#ee5148" />
<polygon points="1707.8,1113.8 1727.7,1113.3 1736.2,1133.7 1740.5,1145.1 1713.4,1127.5" fill="#fa5a52" />
<polygon points="948.5,1212.8 956.2,1216.1 959.0,1224.8 955.1,1235.7 949.6,1222.6" fill="#b48a4a" />
<clipPath id="cb1"><polygon points="958.3,1263.0 986.7,1268.5 1017.3,1285.9 1052.2,1314.3 1067.5,1349.3 1065.3,1373.3 1054.4,1403.8 1023.8,1447.5 908.1,1447.5 897.2,1392.9 888.5,1351.4 897.2,1340.5 914.7,1327.4 936.5,1299.0 955.1,1268.5"/></clipPath><polygon points="958.3,1263.0 986.7,1268.5 1017.3,1285.9 1052.2,1314.3 1067.5,1349.3 1065.3,1373.3 1054.4,1403.8 1023.8,1447.5 908.1,1447.5 897.2,1392.9 888.5,1351.4 897.2,1340.5 914.7,1327.4 936.5,1299.0 955.1,1268.5" fill="#3d8745"/><g clip-path="url(#cb1)"><polygon points="1054.4,1403.8 1065.3,1373.3 1023.8,1410.4 991.1,1447.5 1023.8,1447.5" fill="#33753b" /><polygon points="894.2,1252.2 911.9,1263.5 900.6,1281.2 882.9,1270.0" fill="#387e40" opacity="0.42"/><polygon points="882.9,1270.0 900.6,1281.2 889.4,1299.0" fill="#357a3d" opacity="0.42"/><polygon points="871.6,1287.7 889.4,1299.0 878.1,1316.7" fill="#357a3d" opacity="0.42"/><polygon points="889.4,1299.0 907.1,1310.2 895.8,1327.9" fill="#3a8242" opacity="0.42"/><polygon points="929.6,1274.8 947.3,1286.0 936.1,1303.8 918.4,1292.5" fill="#3a8242" opacity="0.42"/><polygon points="918.4,1292.5 936.1,1303.8 924.8,1321.5" fill="#428e49" opacity="0.42"/><polygon points="895.8,1327.9 913.6,1339.2 902.3,1356.9 884.6,1345.7" fill="#3a8242" opacity="0.42"/><polygon points="884.6,1345.7 902.3,1356.9 891.0,1374.7 873.3,1363.4" fill="#357a3d" opacity="0.42"/><polygon points="936.1,1303.8 953.8,1315.0 942.5,1332.7 924.8,1321.5" fill="#357a3d" opacity="0.42"/><polygon points="924.8,1321.5 942.5,1332.7 931.3,1350.5" fill="#357a3d" opacity="0.42"/><polygon points="902.3,1356.9 920.0,1368.2 908.8,1385.9" fill="#428e49" opacity="0.42"/><polygon points="987.6,1261.8 1005.3,1273.1 994.0,1290.8 976.3,1279.6" fill="#387e40" opacity="0.42"/><polygon points="976.3,1279.6 994.0,1290.8 982.8,1308.6" fill="#3a8242" opacity="0.42"/><polygon points="965.1,1297.3 982.8,1308.6 971.5,1326.3" fill="#357a3d" opacity="0.42"/><polygon points="931.3,1350.5 949.0,1361.7 937.7,1379.5" fill="#428e49" opacity="0.42"/><polygon points="908.8,1385.9 926.5,1397.2 915.2,1414.9" fill="#387e40" opacity="0.42"/><polygon points="875.0,1439.1 892.7,1450.4 881.4,1468.1 863.7,1456.8" fill="#357a3d" opacity="0.42"/><polygon points="994.0,1290.8 1011.8,1302.1 1000.5,1319.8 982.8,1308.6" fill="#387e40" opacity="0.42"/><polygon points="960.3,1344.0 978.0,1355.3 966.7,1373.0" fill="#357a3d" opacity="0.42"/><polygon points="915.2,1414.9 932.9,1426.2 921.7,1443.9 904.0,1432.6" fill="#387e40" opacity="0.42"/><polygon points="904.0,1432.6 921.7,1443.9 910.4,1461.6" fill="#428e49" opacity="0.42"/><polygon points="892.7,1450.4 910.4,1461.6 899.2,1479.3" fill="#428e49" opacity="0.42"/><polygon points="881.4,1468.1 899.2,1479.3 887.9,1497.1" fill="#3a8242" opacity="0.42"/><polygon points="1023.0,1284.4 1040.8,1295.6 1029.5,1313.3" fill="#3a8242" opacity="0.42"/><polygon points="1000.5,1319.8 1018.2,1331.1 1007.0,1348.8 989.3,1337.5" fill="#357a3d" opacity="0.42"/><polygon points="932.9,1426.2 950.7,1437.4 939.4,1455.1 921.7,1443.9" fill="#357a3d" opacity="0.42"/><polygon points="1074.5,1242.4 1092.3,1253.7 1081.0,1271.4 1063.3,1260.2" fill="#357a3d" opacity="0.42"/><polygon points="1063.3,1260.2 1081.0,1271.4 1069.7,1289.2" fill="#387e40" opacity="0.42"/><polygon points="1029.5,1313.3 1047.2,1324.6 1036.0,1342.3 1018.2,1331.1" fill="#428e49" opacity="0.42"/><polygon points="995.7,1366.5 1013.4,1377.8 1002.2,1395.5" fill="#3a8242" opacity="0.42"/><polygon points="950.7,1437.4 968.4,1448.7 957.1,1466.4" fill="#357a3d" opacity="0.42"/><polygon points="1058.5,1306.9 1076.2,1318.1 1065.0,1335.9" fill="#387e40" opacity="0.42"/><polygon points="1024.7,1360.1 1042.4,1371.3 1031.2,1389.0 1013.4,1377.8" fill="#357a3d" opacity="0.42"/><polygon points="1013.4,1377.8 1031.2,1389.0 1019.9,1406.8" fill="#428e49" opacity="0.42"/><polygon points="1002.2,1395.5 1019.9,1406.8 1008.6,1424.5 990.9,1413.2" fill="#428e49" opacity="0.42"/><polygon points="979.7,1431.0 997.4,1442.2 986.1,1459.9" fill="#3a8242" opacity="0.42"/><polygon points="957.1,1466.4 974.9,1477.7 963.6,1495.4 945.9,1484.1" fill="#428e49" opacity="0.42"/><polygon points="1031.2,1389.0 1048.9,1400.3 1037.6,1418.0 1019.9,1406.8" fill="#3a8242" opacity="0.42"/><polygon points="1019.9,1406.8 1037.6,1418.0 1026.4,1435.8 1008.6,1424.5" fill="#357a3d" opacity="0.42"/><polygon points="1008.6,1424.5 1026.4,1435.8 1015.1,1453.5 997.4,1442.2" fill="#387e40" opacity="0.42"/><polygon points="1071.4,1364.9 1089.1,1376.1 1077.9,1393.8" fill="#387e40" opacity="0.42"/><polygon points="1060.2,1382.6 1077.9,1393.8 1066.6,1411.6 1048.9,1400.3" fill="#357a3d" opacity="0.42"/><polygon points="1048.9,1400.3 1066.6,1411.6 1055.4,1429.3 1037.6,1418.0" fill="#387e40" opacity="0.42"/><polygon points="1077.9,1393.8 1095.6,1405.1 1084.3,1422.8 1066.6,1411.6" fill="#3a8242" opacity="0.42"/><polygon points="1044.1,1447.0 1061.8,1458.3 1050.6,1476.0 1032.8,1464.7" fill="#428e49" opacity="0.42"/></g>
<clipPath id="cb2"><polygon points="857.9,1137.5 892.8,1145.1 932.1,1161.5 937.6,1185.5 947.4,1211.7 956.2,1251.0 955.1,1268.5 936.5,1299.0 914.7,1327.4 897.2,1340.5 875.4,1353.6 849.2,1347.1 820.8,1332.9 790.2,1327.4 774.9,1305.6 765.1,1277.2 768.4,1251.0 779.3,1222.6 786.9,1203.0 805.5,1181.1 827.3,1161.5 842.6,1148.4"/></clipPath><polygon points="857.9,1137.5 892.8,1145.1 932.1,1161.5 937.6,1185.5 947.4,1211.7 956.2,1251.0 955.1,1268.5 936.5,1299.0 914.7,1327.4 897.2,1340.5 875.4,1353.6 849.2,1347.1 820.8,1332.9 790.2,1327.4 774.9,1305.6 765.1,1277.2 768.4,1251.0 779.3,1222.6 786.9,1203.0 805.5,1181.1 827.3,1161.5 842.6,1148.4" fill="#3f8846"/><g clip-path="url(#cb2)"><polygon points="823.0,1329.6 875.4,1277.2 925.6,1242.3 943.1,1216.1 956.2,1251.0 955.1,1268.5 936.5,1299.0 914.7,1327.4 897.2,1340.5 875.4,1353.6 849.2,1347.1" fill="#38803f" /><polygon points="820.8,1332.9 871.0,1288.1 923.4,1248.8 943.1,1218.3 941.3,1215.6 920.1,1244.0 869.9,1283.8 819.5,1327.4" fill="#347a3c" /><polygon points="781.9,1119.7 795.4,1135.7 779.4,1149.2" fill="#428c49" opacity="0.42"/><polygon points="795.4,1135.7 809.0,1151.8 792.9,1165.3 779.4,1149.2" fill="#3a8142" opacity="0.42"/><polygon points="763.3,1162.8 776.9,1178.8 760.8,1192.4" fill="#428c49" opacity="0.42"/><polygon points="747.3,1176.3 760.8,1192.4 744.8,1205.9 731.2,1189.9" fill="#45904b" opacity="0.42"/><polygon points="841.1,1124.7 854.6,1140.7 838.6,1154.3" fill="#3a8142" opacity="0.42"/><polygon points="825.0,1138.2 838.6,1154.3 822.5,1167.8 809.0,1151.8" fill="#428c49" opacity="0.42"/><polygon points="776.9,1178.8 790.4,1194.9 774.4,1208.4" fill="#3a8142" opacity="0.42"/><polygon points="870.7,1127.2 884.2,1143.2 868.2,1156.8 854.6,1140.7" fill="#377c3f" opacity="0.42"/><polygon points="822.5,1167.8 836.1,1183.9 820.0,1197.4" fill="#428c49" opacity="0.42"/><polygon points="774.4,1208.4 787.9,1224.5 771.9,1238.0 758.3,1222.0" fill="#428c49" opacity="0.42"/><polygon points="884.2,1143.2 897.7,1159.3 881.7,1172.8" fill="#377c3f" opacity="0.42"/><polygon points="852.1,1170.3 865.6,1186.4 849.6,1199.9" fill="#428c49" opacity="0.42"/><polygon points="836.1,1183.9 849.6,1199.9 833.5,1213.4 820.0,1197.4" fill="#3a8142" opacity="0.42"/><polygon points="804.0,1210.9 817.5,1227.0 801.4,1240.5" fill="#3a8142" opacity="0.42"/><polygon points="787.9,1224.5 801.4,1240.5 785.4,1254.1 771.9,1238.0" fill="#3a8142" opacity="0.42"/><polygon points="755.8,1251.6 769.3,1267.6 753.3,1281.2" fill="#428c49" opacity="0.42"/><polygon points="945.9,1118.6 959.4,1134.7 943.4,1148.2 929.8,1132.2" fill="#45904b" opacity="0.42"/><polygon points="913.8,1145.7 927.3,1161.8 911.3,1175.3" fill="#377c3f" opacity="0.42"/><polygon points="897.7,1159.3 911.3,1175.3 895.2,1188.9" fill="#3a8142" opacity="0.42"/><polygon points="881.7,1172.8 895.2,1188.9 879.2,1202.4 865.6,1186.4" fill="#377c3f" opacity="0.42"/><polygon points="833.5,1213.4 847.1,1229.5 831.0,1243.0" fill="#45904b" opacity="0.42"/><polygon points="817.5,1227.0 831.0,1243.0 815.0,1256.6 801.4,1240.5" fill="#428c49" opacity="0.42"/><polygon points="801.4,1240.5 815.0,1256.6 798.9,1270.1" fill="#377c3f" opacity="0.42"/><polygon points="943.4,1148.2 956.9,1164.3 940.9,1177.8 927.3,1161.8" fill="#3a8142" opacity="0.42"/><polygon points="911.3,1175.3 924.8,1191.4 908.8,1204.9" fill="#3a8142" opacity="0.42"/><polygon points="863.1,1216.0 876.7,1232.0 860.6,1245.5 847.1,1229.5" fill="#377c3f" opacity="0.42"/><polygon points="847.1,1229.5 860.6,1245.5 844.6,1259.1 831.0,1243.0" fill="#45904b" opacity="0.42"/><polygon points="815.0,1256.6 828.5,1272.6 812.5,1286.2" fill="#377c3f" opacity="0.42"/><polygon points="973.0,1150.8 986.5,1166.8 970.5,1180.3 956.9,1164.3" fill="#377c3f" opacity="0.42"/><polygon points="956.9,1164.3 970.5,1180.3 954.4,1193.9" fill="#428c49" opacity="0.42"/><polygon points="908.8,1204.9 922.3,1221.0 906.3,1234.5 892.7,1218.5" fill="#377c3f" opacity="0.42"/><polygon points="876.7,1232.0 890.2,1248.1 874.2,1261.6" fill="#45904b" opacity="0.42"/><polygon points="860.6,1245.5 874.2,1261.6 858.1,1275.1" fill="#45904b" opacity="0.42"/><polygon points="844.6,1259.1 858.1,1275.1 842.1,1288.7 828.5,1272.6" fill="#428c49" opacity="0.42"/><polygon points="812.5,1286.2 826.0,1302.2 810.0,1315.8 796.4,1299.7" fill="#428c49" opacity="0.42"/><polygon points="796.4,1299.7 810.0,1315.8 793.9,1329.3" fill="#3a8142" opacity="0.42"/><polygon points="970.5,1180.3 984.0,1196.4 968.0,1209.9 954.4,1193.9" fill="#45904b" opacity="0.42"/><polygon points="938.4,1207.4 951.9,1223.5 935.9,1237.0 922.3,1221.0" fill="#45904b" opacity="0.42"/><polygon points="922.3,1221.0 935.9,1237.0 919.8,1250.6" fill="#45904b" opacity="0.42"/><polygon points="890.2,1248.1 903.8,1264.1 887.7,1277.6 874.2,1261.6" fill="#3a8142" opacity="0.42"/><polygon points="858.1,1275.1 871.7,1291.2 855.6,1304.7 842.1,1288.7" fill="#3a8142" opacity="0.42"/><polygon points="842.1,1288.7 855.6,1304.7 839.6,1318.3" fill="#428c49" opacity="0.42"/><polygon points="826.0,1302.2 839.6,1318.3 823.5,1331.8 810.0,1315.8" fill="#3a8142" opacity="0.42"/><polygon points="810.0,1315.8 823.5,1331.8 807.5,1345.4" fill="#3a8142" opacity="0.42"/><polygon points="777.9,1342.8 791.4,1358.9 775.4,1372.4" fill="#377c3f" opacity="0.42"/><polygon points="951.9,1223.5 965.5,1239.5 949.4,1253.1" fill="#428c49" opacity="0.42"/><polygon points="935.9,1237.0 949.4,1253.1 933.4,1266.6 919.8,1250.6" fill="#377c3f" opacity="0.42"/><polygon points="919.8,1250.6 933.4,1266.6 917.3,1280.2 903.8,1264.1" fill="#3a8142" opacity="0.42"/><polygon points="903.8,1264.1 917.3,1280.2 901.3,1293.7 887.7,1277.6" fill="#428c49" opacity="0.42"/><polygon points="871.7,1291.2 885.2,1307.2 869.2,1320.8 855.6,1304.7" fill="#3a8142" opacity="0.42"/><polygon points="855.6,1304.7 869.2,1320.8 853.1,1334.3 839.6,1318.3" fill="#377c3f" opacity="0.42"/><polygon points="839.6,1318.3 853.1,1334.3 837.1,1347.9" fill="#45904b" opacity="0.42"/><polygon points="791.4,1358.9 805.0,1374.9 788.9,1388.5 775.4,1372.4" fill="#377c3f" opacity="0.42"/><polygon points="965.5,1239.5 979.0,1255.6 963.0,1269.1 949.4,1253.1" fill="#377c3f" opacity="0.42"/><polygon points="869.2,1320.8 882.7,1336.8 866.7,1350.4" fill="#428c49" opacity="0.42"/><polygon points="853.1,1334.3 866.7,1350.4 850.6,1363.9" fill="#3a8142" opacity="0.42"/><polygon points="821.0,1361.4 834.6,1377.5 818.5,1391.0" fill="#3a8142" opacity="0.42"/><polygon points="930.9,1296.2 944.4,1312.3 928.3,1325.8" fill="#45904b" opacity="0.42"/><polygon points="976.5,1285.2 990.0,1301.2 974.0,1314.8" fill="#3a8142" opacity="0.42"/><polygon points="944.4,1312.3 957.9,1328.3 941.9,1341.8 928.3,1325.8" fill="#428c49" opacity="0.42"/><polygon points="928.3,1325.8 941.9,1341.8 925.8,1355.4" fill="#428c49" opacity="0.42"/><polygon points="912.3,1339.3 925.8,1355.4 909.8,1368.9" fill="#377c3f" opacity="0.42"/><polygon points="896.2,1352.9 909.8,1368.9 893.7,1382.5" fill="#45904b" opacity="0.42"/><polygon points="941.9,1341.8 955.4,1357.9 939.4,1371.4 925.8,1355.4" fill="#428c49" opacity="0.42"/><polygon points="955.4,1357.9 969.0,1373.9 952.9,1387.5" fill="#377c3f" opacity="0.42"/></g>
<polygon points="1662.8,1280.2 1672.2,1275.0 1680.7,1280.2 1690.7,1301.5 1699.2,1307.2 1712.0,1305.8 1710.6,1318.5 1687.9,1325.7 1676.5,1324.2 1682.2,1310.0 1665.1,1293.0" fill="#9a8850" />
<polygon points="1662.8,1280.2 1667.4,1277.3 1686.4,1310.0 1682.2,1310.0 1665.1,1293.0" fill="#a98f5a" />
<clipPath id="cb3"><polygon points="1813.0,1254.6 1841.4,1261.7 1869.8,1284.4 1882.6,1304.3 1882.6,1440.8 1824.3,1429.4 1767.5,1418.1 1736.2,1389.6 1713.4,1361.2 1703.5,1329.9 1713.4,1307.2 1739.0,1287.3 1773.2,1261.7"/></clipPath><polygon points="1813.0,1254.6 1841.4,1261.7 1869.8,1284.4 1882.6,1304.3 1882.6,1440.8 1824.3,1429.4 1767.5,1418.1 1736.2,1389.6 1713.4,1361.2 1703.5,1329.9 1713.4,1307.2 1739.0,1287.3 1773.2,1261.7" fill="#3f8846"/><g clip-path="url(#cb3)"><polygon points="1713.4,1361.2 1703.5,1329.9 1739.0,1332.8 1767.5,1389.6 1767.5,1418.1 1736.2,1389.6" fill="#357a3d" /><polygon points="1717.1,1237.1 1734.6,1246.8 1724.9,1264.3 1707.4,1254.6" fill="#377c3f" opacity="0.42"/><polygon points="1715.2,1281.8 1732.7,1291.5 1723.0,1309.0" fill="#3a8142" opacity="0.42"/><polygon points="1695.9,1316.8 1713.4,1326.5 1703.7,1344.0 1686.2,1334.3" fill="#428c49" opacity="0.42"/><polygon points="1686.2,1334.3 1703.7,1344.0 1694.0,1361.5" fill="#3a8142" opacity="0.42"/><polygon points="1761.7,1239.0 1779.2,1248.7 1769.6,1266.2 1752.1,1256.5" fill="#428c49" opacity="0.42"/><polygon points="1752.1,1256.5 1769.6,1266.2 1759.9,1283.7" fill="#45904b" opacity="0.42"/><polygon points="1742.4,1274.0 1759.9,1283.7 1750.2,1301.2" fill="#377c3f" opacity="0.42"/><polygon points="1769.6,1266.2 1787.1,1275.8 1777.4,1293.3 1759.9,1283.7" fill="#428c49" opacity="0.42"/><polygon points="1730.9,1336.2 1748.4,1345.8 1738.7,1363.4" fill="#377c3f" opacity="0.42"/><polygon points="1721.2,1353.7 1738.7,1363.4 1729.0,1380.9 1711.5,1371.2" fill="#377c3f" opacity="0.42"/><polygon points="1701.8,1388.7 1719.3,1398.4 1709.7,1415.9" fill="#428c49" opacity="0.42"/><polygon points="1787.1,1275.8 1804.6,1285.5 1794.9,1303.0" fill="#428c49" opacity="0.42"/><polygon points="1777.4,1293.3 1794.9,1303.0 1785.2,1320.5 1767.7,1310.8" fill="#428c49" opacity="0.42"/><polygon points="1767.7,1310.8 1785.2,1320.5 1775.6,1338.0 1758.0,1328.3" fill="#45904b" opacity="0.42"/><polygon points="1748.4,1345.8 1765.9,1355.5 1756.2,1373.0 1738.7,1363.4" fill="#428c49" opacity="0.42"/><polygon points="1700.0,1433.4 1717.5,1443.0 1707.8,1460.5" fill="#377c3f" opacity="0.42"/><polygon points="1823.9,1250.5 1841.4,1260.2 1831.8,1277.7 1814.3,1268.0" fill="#3a8142" opacity="0.42"/><polygon points="1804.6,1285.5 1822.1,1295.2 1812.4,1312.7" fill="#428c49" opacity="0.42"/><polygon points="1756.2,1373.0 1773.7,1382.7 1764.0,1400.2 1746.5,1390.5" fill="#428c49" opacity="0.42"/><polygon points="1746.5,1390.5 1764.0,1400.2 1754.4,1417.7" fill="#3a8142" opacity="0.42"/><polygon points="1736.9,1408.0 1754.4,1417.7 1744.7,1435.2 1727.2,1425.5" fill="#377c3f" opacity="0.42"/><polygon points="1727.2,1425.5 1744.7,1435.2 1735.0,1452.7" fill="#3a8142" opacity="0.42"/><polygon points="1717.5,1443.0 1735.0,1452.7 1725.3,1470.2" fill="#3a8142" opacity="0.42"/><polygon points="1851.1,1242.7 1868.6,1252.3 1858.9,1269.8" fill="#3a8142" opacity="0.42"/><polygon points="1812.4,1312.7 1829.9,1322.4 1820.2,1339.9 1802.7,1330.2" fill="#3a8142" opacity="0.42"/><polygon points="1793.1,1347.7 1810.6,1357.4 1800.9,1374.9 1783.4,1365.2" fill="#428c49" opacity="0.42"/><polygon points="1754.4,1417.7 1771.9,1427.4 1762.2,1444.9" fill="#3a8142" opacity="0.42"/><polygon points="1858.9,1269.8 1876.4,1279.5 1866.8,1297.0" fill="#45904b" opacity="0.42"/><polygon points="1839.6,1304.9 1857.1,1314.5 1847.4,1332.0 1829.9,1322.4" fill="#377c3f" opacity="0.42"/><polygon points="1810.6,1357.4 1828.1,1367.0 1818.4,1384.5 1800.9,1374.9" fill="#3a8142" opacity="0.42"/><polygon points="1800.9,1374.9 1818.4,1384.5 1808.7,1402.1 1791.2,1392.4" fill="#3a8142" opacity="0.42"/><polygon points="1771.9,1427.4 1789.4,1437.1 1779.7,1454.6 1762.2,1444.9" fill="#45904b" opacity="0.42"/><polygon points="1886.1,1262.0 1903.6,1271.7 1893.9,1289.2" fill="#3a8142" opacity="0.42"/><polygon points="1866.8,1297.0 1884.3,1306.7 1874.6,1324.2" fill="#45904b" opacity="0.42"/><polygon points="1828.1,1367.0 1845.6,1376.7 1835.9,1394.2" fill="#377c3f" opacity="0.42"/><polygon points="1799.0,1419.6 1816.5,1429.2 1806.9,1446.7" fill="#377c3f" opacity="0.42"/><polygon points="1874.6,1324.2 1892.1,1333.9 1882.4,1351.4" fill="#428c49" opacity="0.42"/><polygon points="1845.6,1376.7 1863.1,1386.4 1853.4,1403.9" fill="#45904b" opacity="0.42"/><polygon points="1816.5,1429.2 1834.1,1438.9 1824.4,1456.4" fill="#45904b" opacity="0.42"/><polygon points="1806.9,1446.7 1824.4,1456.4 1814.7,1473.9 1797.2,1464.2" fill="#377c3f" opacity="0.42"/><polygon points="1890.3,1378.6 1907.8,1388.2 1898.1,1405.7 1880.6,1396.1" fill="#3a8142" opacity="0.42"/><polygon points="1880.6,1396.1 1898.1,1405.7 1888.4,1423.2 1870.9,1413.6" fill="#45904b" opacity="0.42"/><polygon points="1870.9,1413.6 1888.4,1423.2 1878.7,1440.8 1861.2,1431.1" fill="#428c49" opacity="0.42"/><polygon points="1861.2,1431.1 1878.7,1440.8 1869.1,1458.3 1851.6,1448.6" fill="#3a8142" opacity="0.42"/><polygon points="1898.1,1405.7 1915.6,1415.4 1905.9,1432.9" fill="#45904b" opacity="0.42"/><polygon points="1888.4,1423.2 1905.9,1432.9 1896.2,1450.4 1878.7,1440.8" fill="#3a8142" opacity="0.42"/><polygon points="1878.7,1440.8 1896.2,1450.4 1886.6,1467.9 1869.1,1458.3" fill="#3a8142" opacity="0.42"/></g>
<clipPath id="cb4"><polygon points="1585.5,1325.7 1653.7,1320.8 1676.5,1325.7 1702.1,1331.3 1710.6,1358.4 1736.2,1389.6 1753.2,1418.1 1756.1,1438.0 1750.4,1446.5 1571.3,1446.5 1557.1,1415.2 1547.1,1389.6 1559.9,1355.5 1574.1,1335.6"/></clipPath><polygon points="1585.5,1325.7 1653.7,1320.8 1676.5,1325.7 1702.1,1331.3 1710.6,1358.4 1736.2,1389.6 1753.2,1418.1 1756.1,1438.0 1750.4,1446.5 1571.3,1446.5 1557.1,1415.2 1547.1,1389.6 1559.9,1355.5 1574.1,1335.6" fill="#3f8846"/><g clip-path="url(#cb4)"><polygon points="1562.0,1303.8 1577.0,1317.1 1563.6,1332.0 1548.7,1318.7" fill="#45904b" opacity="0.42"/><polygon points="1535.4,1333.7 1550.3,1347.0 1537.0,1361.9 1522.1,1348.6" fill="#377c3f" opacity="0.42"/><polygon points="1590.3,1302.2 1605.2,1315.5 1591.9,1330.4 1577.0,1317.1" fill="#377c3f" opacity="0.42"/><polygon points="1577.0,1317.1 1591.9,1330.4 1578.6,1345.4 1563.6,1332.0" fill="#45904b" opacity="0.42"/><polygon points="1605.2,1315.5 1620.1,1328.8 1606.8,1343.7" fill="#428c49" opacity="0.42"/><polygon points="1591.9,1330.4 1606.8,1343.7 1593.5,1358.7" fill="#3a8142" opacity="0.42"/><polygon points="1538.6,1390.1 1553.6,1403.4 1540.3,1418.4" fill="#3a8142" opacity="0.42"/><polygon points="1633.4,1313.9 1648.4,1327.2 1635.1,1342.1 1620.1,1328.8" fill="#377c3f" opacity="0.42"/><polygon points="1620.1,1328.8 1635.1,1342.1 1621.7,1357.0" fill="#428c49" opacity="0.42"/><polygon points="1606.8,1343.7 1621.7,1357.0 1608.4,1372.0 1593.5,1358.7" fill="#45904b" opacity="0.42"/><polygon points="1580.2,1373.6 1595.1,1386.9 1581.8,1401.8" fill="#45904b" opacity="0.42"/><polygon points="1566.9,1388.5 1581.8,1401.8 1568.5,1416.8" fill="#45904b" opacity="0.42"/><polygon points="1553.6,1403.4 1568.5,1416.8 1555.2,1431.7" fill="#3a8142" opacity="0.42"/><polygon points="1635.1,1342.1 1650.0,1355.4 1636.7,1370.4 1621.7,1357.0" fill="#428c49" opacity="0.42"/><polygon points="1608.4,1372.0 1623.4,1385.3 1610.1,1400.2 1595.1,1386.9" fill="#377c3f" opacity="0.42"/><polygon points="1581.8,1401.8 1596.7,1415.1 1583.4,1430.1" fill="#3a8142" opacity="0.42"/><polygon points="1541.9,1446.6 1556.8,1459.9 1543.5,1474.9 1528.6,1461.5" fill="#377c3f" opacity="0.42"/><polygon points="1689.9,1310.6 1704.8,1323.9 1691.5,1338.9" fill="#377c3f" opacity="0.42"/><polygon points="1676.6,1325.6 1691.5,1338.9 1678.2,1353.8" fill="#428c49" opacity="0.42"/><polygon points="1596.7,1415.1 1611.7,1428.4 1598.4,1443.4 1583.4,1430.1" fill="#428c49" opacity="0.42"/><polygon points="1556.8,1459.9 1571.7,1473.2 1558.4,1488.2" fill="#3a8142" opacity="0.42"/><polygon points="1664.9,1368.7 1679.8,1382.0 1666.5,1397.0 1651.6,1383.7" fill="#3a8142" opacity="0.42"/><polygon points="1719.8,1337.3 1734.7,1350.6 1721.4,1365.5 1706.5,1352.2" fill="#3a8142" opacity="0.42"/><polygon points="1693.1,1367.1 1708.1,1380.4 1694.8,1395.4" fill="#377c3f" opacity="0.42"/><polygon points="1679.8,1382.0 1694.8,1395.4 1681.5,1410.3 1666.5,1397.0" fill="#377c3f" opacity="0.42"/><polygon points="1653.2,1411.9 1668.1,1425.2 1654.8,1440.1" fill="#377c3f" opacity="0.42"/><polygon points="1639.9,1426.8 1654.8,1440.1 1641.5,1455.1 1626.6,1441.8" fill="#45904b" opacity="0.42"/><polygon points="1626.6,1441.8 1641.5,1455.1 1628.2,1470.0" fill="#428c49" opacity="0.42"/><polygon points="1761.3,1320.7 1776.2,1334.0 1762.9,1348.9 1748.0,1335.6" fill="#428c49" opacity="0.42"/><polygon points="1748.0,1335.6 1762.9,1348.9 1749.6,1363.9 1734.7,1350.6" fill="#3a8142" opacity="0.42"/><polygon points="1734.7,1350.6 1749.6,1363.9 1736.3,1378.8 1721.4,1365.5" fill="#45904b" opacity="0.42"/><polygon points="1721.4,1365.5 1736.3,1378.8 1723.0,1393.7" fill="#428c49" opacity="0.42"/><polygon points="1681.5,1410.3 1696.4,1423.6 1683.1,1438.5" fill="#428c49" opacity="0.42"/><polygon points="1641.5,1455.1 1656.5,1468.4 1643.1,1483.3 1628.2,1470.0" fill="#3a8142" opacity="0.42"/><polygon points="1749.6,1363.9 1764.6,1377.2 1751.2,1392.1" fill="#45904b" opacity="0.42"/><polygon points="1736.3,1378.8 1751.2,1392.1 1737.9,1407.0 1723.0,1393.7" fill="#3a8142" opacity="0.42"/><polygon points="1669.8,1453.4 1684.7,1466.8 1671.4,1481.7 1656.5,1468.4" fill="#45904b" opacity="0.42"/><polygon points="1751.2,1392.1 1766.2,1405.4 1752.9,1420.4" fill="#377c3f" opacity="0.42"/><polygon points="1711.3,1436.9 1726.2,1450.2 1712.9,1465.1 1698.0,1451.8" fill="#428c49" opacity="0.42"/><polygon points="1698.0,1451.8 1712.9,1465.1 1699.6,1480.1 1684.7,1466.8" fill="#45904b" opacity="0.42"/><polygon points="1766.2,1405.4 1781.1,1418.7 1767.8,1433.7 1752.9,1420.4" fill="#3a8142" opacity="0.42"/><polygon points="1752.9,1420.4 1767.8,1433.7 1754.5,1448.6" fill="#45904b" opacity="0.42"/><polygon points="1741.2,1463.5 1756.1,1476.8 1742.8,1491.8 1727.9,1478.4" fill="#428c49" opacity="0.42"/></g>
<polygon points="1576.0,434.8 1588.1,440.3 1512.7,528.7 1504.0,529.1 1495.7,520.0" fill="#b7bcb5" />
<polygon points="1576.0,434.8 1580.9,437.0 1501.8,526.5 1495.7,520.0" fill="#a6aba5" />
<path d="M1545.5 481.8 Q 1571.7 493.8 1619.7 484.0" stroke="#c9ccc7" stroke-width="7" fill="none" stroke-linecap="round"/>
<path d="M1545.5 485.5 Q 1571.7 497.7 1619.7 487.7" stroke="#aeb2ad" stroke-width="2.5" fill="none"/>
<polygon points="1596.8,454.5 1661.2,444.7 1654.6,472.0 1649.2,497.1 1615.3,503.6 1619.7,480.7 1602.2,469.8" fill="#7a544a" />
<polygon points="1611.0,473.0 1643.7,482.9 1632.8,496.0 1616.4,502.5 1619.7,482.9" fill="#5f3732" />
<polygon points="1619.7,485.0 1630.6,493.8 1616.4,502.5" fill="#8a5130" />
<polygon points="1689.6,406.5 1755.0,402.1 1742.0,428.3 1695.0,437.0" fill="#8a5532" />
<clipPath id="cb5"><polygon points="1661.2,444.7 1695.0,434.8 1738.7,409.7 1755.0,417.4 1766.0,426.1 1776.9,450.1 1769.2,475.2 1748.5,496.0 1702.7,511.2 1661.2,520.0 1648.1,502.5 1652.5,472.0"/></clipPath><polygon points="1661.2,444.7 1695.0,434.8 1738.7,409.7 1755.0,417.4 1766.0,426.1 1776.9,450.1 1769.2,475.2 1748.5,496.0 1702.7,511.2 1661.2,520.0 1648.1,502.5 1652.5,472.0" fill="#a8673f"/><g clip-path="url(#cb5)"><polygon points="1738.7,409.7 1766.0,426.1 1776.9,450.1 1769.2,475.2 1742.0,439.2" fill="#b8754c" /><polygon points="1661.2,444.7 1695.0,434.8 1698.3,472.0 1652.5,472.0" fill="#a5643d" /><polygon points="1648.1,502.5 1652.5,472.0 1698.3,472.0 1702.7,511.2 1661.2,520.0" fill="#9c5d38" /><polygon points="1642.9,417.8 1660.3,429.5 1648.5,446.9 1631.2,435.2" fill="#b5734a" opacity="0.42"/><polygon points="1631.2,435.2 1648.5,446.9 1636.8,464.3" fill="#ad6b42" opacity="0.42"/><polygon points="1672.1,412.1 1689.5,423.9 1677.7,441.3 1660.3,429.5" fill="#ad6b42" opacity="0.42"/><polygon points="1701.3,406.5 1718.6,418.3 1706.9,435.7" fill="#9c5f3a" opacity="0.42"/><polygon points="1677.7,441.3 1695.1,453.1 1683.3,470.5" fill="#9c5f3a" opacity="0.42"/><polygon points="1665.9,458.7 1683.3,470.5 1671.5,487.9" fill="#b5734a" opacity="0.42"/><polygon points="1630.6,510.9 1648.0,522.6 1636.2,540.0 1618.8,528.3" fill="#b97850" opacity="0.42"/><polygon points="1730.4,400.9 1747.8,412.7 1736.0,430.1 1718.6,418.3" fill="#9c5f3a" opacity="0.42"/><polygon points="1706.9,435.7 1724.3,447.5 1712.5,464.9 1695.1,453.1" fill="#b5734a" opacity="0.42"/><polygon points="1659.8,505.2 1677.2,517.0 1665.4,534.4" fill="#ad6b42" opacity="0.42"/><polygon points="1648.0,522.6 1665.4,534.4 1653.6,551.8" fill="#ad6b42" opacity="0.42"/><polygon points="1759.6,395.3 1777.0,407.1 1765.2,424.5" fill="#9c5f3a" opacity="0.42"/><polygon points="1736.0,430.1 1753.4,441.9 1741.6,459.2 1724.3,447.5" fill="#ad6b42" opacity="0.42"/><polygon points="1724.3,447.5 1741.6,459.2 1729.9,476.6 1712.5,464.9" fill="#b5734a" opacity="0.42"/><polygon points="1712.5,464.9 1729.9,476.6 1718.1,494.0 1700.7,482.2" fill="#b5734a" opacity="0.42"/><polygon points="1688.9,499.6 1706.3,511.4 1694.5,528.8 1677.2,517.0" fill="#9c5f3a" opacity="0.42"/><polygon points="1677.2,517.0 1694.5,528.8 1682.8,546.2" fill="#b5734a" opacity="0.42"/><polygon points="1665.4,534.4 1682.8,546.2 1671.0,563.6 1653.6,551.8" fill="#9c5f3a" opacity="0.42"/><polygon points="1777.0,407.1 1794.4,418.8 1782.6,436.2" fill="#b5734a" opacity="0.42"/><polygon points="1741.6,459.2 1759.0,471.0 1747.3,488.4" fill="#9c5f3a" opacity="0.42"/><polygon points="1718.1,494.0 1735.5,505.8 1723.7,523.2 1706.3,511.4" fill="#9c5f3a" opacity="0.42"/><polygon points="1694.5,528.8 1711.9,540.6 1700.2,558.0" fill="#b97850" opacity="0.42"/><polygon points="1782.6,436.2 1800.0,448.0 1788.2,465.4 1770.8,453.6" fill="#b5734a" opacity="0.42"/><polygon points="1788.2,465.4 1805.6,477.2 1793.8,494.6 1776.4,482.8" fill="#b5734a" opacity="0.42"/><polygon points="1741.1,535.0 1758.5,546.7 1746.7,564.1 1729.3,552.3" fill="#b97850" opacity="0.42"/><polygon points="1793.8,494.6 1811.2,506.3 1799.4,523.7 1782.0,512.0" fill="#b97850" opacity="0.42"/><polygon points="1782.0,512.0 1799.4,523.7 1787.7,541.1 1770.3,529.3" fill="#b5734a" opacity="0.42"/><polygon points="1770.3,529.3 1787.7,541.1 1775.9,558.5" fill="#b97850" opacity="0.42"/></g>
<clipPath id="cb6"><polygon points="1717.9,323.1 1739.8,327.9 1761.6,338.8 1771.4,372.6 1752.9,406.5 1711.4,422.8 1692.8,415.2 1687.4,362.8 1698.3,336.6"/></clipPath><polygon points="1717.9,323.1 1739.8,327.9 1761.6,338.8 1771.4,372.6 1752.9,406.5 1711.4,422.8 1692.8,415.2 1687.4,362.8 1698.3,336.6" fill="#b06d45"/><g clip-path="url(#cb6)"><polygon points="1717.9,323.1 1739.8,327.9 1761.6,338.8 1771.4,372.6 1742.0,362.8 1724.5,341.0" fill="#bd7a50" /><polygon points="1687.4,362.8 1724.5,384.6 1752.9,406.5 1711.4,422.8 1692.8,415.2" fill="#8a5532" /><polygon points="1684.4,303.8 1699.1,317.4 1685.5,332.1" fill="#a5653f" opacity="0.42"/><polygon points="1685.5,332.1 1700.1,345.7 1686.5,360.4" fill="#a5653f" opacity="0.42"/><polygon points="1727.4,316.4 1742.0,330.0 1728.4,344.7 1713.7,331.1" fill="#a5653f" opacity="0.42"/><polygon points="1700.1,345.7 1714.8,359.3 1701.1,374.0" fill="#bd7a50" opacity="0.42"/><polygon points="1755.6,315.4 1770.3,329.0 1756.6,343.7 1742.0,330.0" fill="#a5653f" opacity="0.42"/><polygon points="1714.8,359.3 1729.4,373.0 1715.8,387.6 1701.1,374.0" fill="#b5724a" opacity="0.42"/><polygon points="1687.5,388.6 1702.2,402.2 1688.5,416.9 1673.9,403.3" fill="#a5653f" opacity="0.42"/><polygon points="1770.3,329.0 1784.9,342.6 1771.3,357.3 1756.6,343.7" fill="#bd7a50" opacity="0.42"/><polygon points="1756.6,343.7 1771.3,357.3 1757.7,371.9" fill="#bd7a50" opacity="0.42"/><polygon points="1688.5,416.9 1703.2,430.5 1689.6,445.2 1674.9,431.5" fill="#b5724a" opacity="0.42"/><polygon points="1674.9,431.5 1689.6,445.2 1675.9,459.8 1661.3,446.2" fill="#a5653f" opacity="0.42"/><polygon points="1784.9,342.6 1799.6,356.3 1785.9,370.9 1771.3,357.3" fill="#b5724a" opacity="0.42"/><polygon points="1771.3,357.3 1785.9,370.9 1772.3,385.6 1757.7,371.9" fill="#a5653f" opacity="0.42"/><polygon points="1785.9,370.9 1800.6,384.5 1787.0,399.2 1772.3,385.6" fill="#a5653f" opacity="0.42"/><polygon points="1772.3,385.6 1787.0,399.2 1773.3,413.8 1758.7,400.2" fill="#a5653f" opacity="0.42"/><polygon points="1731.4,429.5 1746.1,443.1 1732.5,457.8 1717.8,444.1" fill="#a5653f" opacity="0.42"/><polygon points="1773.3,413.8 1788.0,427.4 1774.4,442.1" fill="#b5724a" opacity="0.42"/><polygon points="1774.4,442.1 1789.0,455.7 1775.4,470.3 1760.7,456.7" fill="#a5653f" opacity="0.42"/></g>
<clipPath id="cb7"><polygon points="1690.7,232.9 1709.2,256.9 1714.7,266.8 1715.3,323.5 1709.2,362.8 1695.0,426.1 1678.6,441.8 1661.6,446.2 1611.0,458.9 1578.2,432.7 1545.5,395.5 1534.6,371.5 1538.9,332.2 1555.3,301.7 1584.8,275.5 1628.4,253.7 1667.7,240.6"/></clipPath><polygon points="1690.7,232.9 1709.2,256.9 1714.7,266.8 1715.3,323.5 1709.2,362.8 1695.0,426.1 1678.6,441.8 1661.6,446.2 1611.0,458.9 1578.2,432.7 1545.5,395.5 1534.6,371.5 1538.9,332.2 1555.3,301.7 1584.8,275.5 1628.4,253.7 1667.7,240.6" fill="#a8683f"/><g clip-path="url(#cb7)"><polygon points="1690.7,232.9 1709.2,256.9 1714.7,266.8 1715.3,323.5 1676.5,303.9 1611.0,312.6 1555.3,301.7 1584.8,275.5 1628.4,253.7 1667.7,240.6" fill="#b4724a" /><polygon points="1580.4,331.2 1587.0,367.2 1621.9,404.3 1652.5,402.1 1643.7,428.3 1611.0,458.9 1578.2,432.7 1545.5,395.5 1534.6,371.5 1538.9,343.2" fill="#85532f" /><polygon points="1621.9,404.3 1652.5,402.1 1693.9,391.2 1695.0,426.1 1678.6,441.8 1661.6,446.2 1611.0,458.9 1602.2,428.3" fill="#7e4e2d" /><polygon points="1687.4,332.2 1715.3,323.5 1709.2,362.8 1695.0,426.1 1689.6,384.6" fill="#9a653f" /><polygon points="1603.9,211.8 1623.3,225.9 1609.1,245.3 1589.7,231.2" fill="#9e603b" opacity="0.42"/><polygon points="1589.7,231.2 1609.1,245.3 1595.0,264.7 1575.6,250.6" fill="#9e603b" opacity="0.42"/><polygon points="1561.5,270.0 1580.9,284.1 1566.7,303.5 1547.3,289.4" fill="#b5734b" opacity="0.42"/><polygon points="1547.3,289.4 1566.7,303.5 1552.6,322.9" fill="#9e603b" opacity="0.42"/><polygon points="1533.2,308.8 1552.6,322.9 1538.5,342.3 1519.1,328.2" fill="#b5734b" opacity="0.42"/><polygon points="1623.3,225.9 1642.7,240.0 1628.5,259.4" fill="#a5653f" opacity="0.42"/><polygon points="1580.9,284.1 1600.3,298.2 1586.1,317.6" fill="#ad6c44" opacity="0.42"/><polygon points="1538.5,342.3 1557.9,356.4 1543.8,375.8 1524.4,361.7" fill="#ad6c44" opacity="0.42"/><polygon points="1524.4,361.7 1543.8,375.8 1529.6,395.2 1510.2,381.1" fill="#9e603b" opacity="0.42"/><polygon points="1642.7,240.0 1662.1,254.2 1647.9,273.6" fill="#b5734b" opacity="0.42"/><polygon points="1614.4,278.8 1633.8,293.0 1619.7,312.4 1600.3,298.2" fill="#9e603b" opacity="0.42"/><polygon points="1600.3,298.2 1619.7,312.4 1605.5,331.8" fill="#b5734b" opacity="0.42"/><polygon points="1586.1,317.6 1605.5,331.8 1591.4,351.2 1572.0,337.0" fill="#a5653f" opacity="0.42"/><polygon points="1529.6,395.2 1549.0,409.4 1534.9,428.8 1515.5,414.6" fill="#ad6c44" opacity="0.42"/><polygon points="1515.5,414.6 1534.9,428.8 1520.8,448.2 1501.4,434.0" fill="#a5653f" opacity="0.42"/><polygon points="1676.2,234.8 1695.6,248.9 1681.5,268.3" fill="#9e603b" opacity="0.42"/><polygon points="1662.1,254.2 1681.5,268.3 1667.3,287.7 1647.9,273.6" fill="#9e603b" opacity="0.42"/><polygon points="1633.8,293.0 1653.2,307.1 1639.1,326.5" fill="#a5653f" opacity="0.42"/><polygon points="1549.0,409.4 1568.4,423.5 1554.3,442.9" fill="#b5734b" opacity="0.42"/><polygon points="1520.8,448.2 1540.2,462.3 1526.0,481.7" fill="#9e603b" opacity="0.42"/><polygon points="1681.5,268.3 1700.9,282.4 1686.7,301.8" fill="#ad6c44" opacity="0.42"/><polygon points="1596.7,384.7 1616.1,398.8 1602.0,418.2" fill="#a5653f" opacity="0.42"/><polygon points="1568.4,423.5 1587.8,437.6 1573.7,457.0 1554.3,442.9" fill="#b5734b" opacity="0.42"/><polygon points="1540.2,462.3 1559.6,476.4 1545.4,495.8" fill="#b5734b" opacity="0.42"/><polygon points="1715.0,263.0 1734.4,277.2 1720.3,296.6 1700.9,282.4" fill="#ad6c44" opacity="0.42"/><polygon points="1672.6,321.2 1692.0,335.3 1677.9,354.7" fill="#ad6c44" opacity="0.42"/><polygon points="1616.1,398.8 1635.5,412.9 1621.4,432.3 1602.0,418.2" fill="#a5653f" opacity="0.42"/><polygon points="1573.7,457.0 1593.1,471.1 1579.0,490.5 1559.6,476.4" fill="#9e603b" opacity="0.42"/><polygon points="1720.3,296.6 1739.7,310.7 1725.5,330.1" fill="#ad6c44" opacity="0.42"/><polygon points="1692.0,335.3 1711.4,349.5 1697.3,368.9 1677.9,354.7" fill="#9e603b" opacity="0.42"/><polygon points="1677.9,354.7 1697.3,368.9 1683.1,388.3 1663.7,374.1" fill="#ad6c44" opacity="0.42"/><polygon points="1663.7,374.1 1683.1,388.3 1669.0,407.7" fill="#b5734b" opacity="0.42"/><polygon points="1607.2,451.7 1626.6,465.9 1612.5,485.3" fill="#ad6c44" opacity="0.42"/><polygon points="1593.1,471.1 1612.5,485.3 1598.4,504.7" fill="#ad6c44" opacity="0.42"/><polygon points="1725.5,330.1 1744.9,344.2 1730.8,363.6 1711.4,349.5" fill="#a5653f" opacity="0.42"/><polygon points="1711.4,349.5 1730.8,363.6 1716.7,383.0 1697.3,368.9" fill="#9e603b" opacity="0.42"/><polygon points="1697.3,368.9 1716.7,383.0 1702.5,402.4" fill="#9e603b" opacity="0.42"/><polygon points="1683.1,388.3 1702.5,402.4 1688.4,421.8" fill="#a5653f" opacity="0.42"/><polygon points="1669.0,407.7 1688.4,421.8 1674.3,441.2 1654.9,427.1" fill="#9e603b" opacity="0.42"/><polygon points="1654.9,427.1 1674.3,441.2 1660.2,460.6 1640.8,446.5" fill="#a5653f" opacity="0.42"/><polygon points="1640.8,446.5 1660.2,460.6 1646.0,480.0 1626.6,465.9" fill="#b5734b" opacity="0.42"/><polygon points="1702.5,402.4 1721.9,416.5 1707.8,435.9 1688.4,421.8" fill="#b5734b" opacity="0.42"/><polygon points="1674.3,441.2 1693.7,455.3 1679.6,474.7" fill="#ad6c44" opacity="0.42"/><polygon points="1660.2,460.6 1679.6,474.7 1665.4,494.1 1646.0,480.0" fill="#a5653f" opacity="0.42"/><polygon points="1646.0,480.0 1665.4,494.1 1651.3,513.5 1631.9,499.4" fill="#9e603b" opacity="0.42"/><polygon points="1736.1,397.1 1755.5,411.3 1741.3,430.7" fill="#ad6c44" opacity="0.42"/><polygon points="1693.7,455.3 1713.1,469.5 1699.0,488.9" fill="#a5653f" opacity="0.42"/></g>
<path d="M1720.6 910.6 C 1753.9 915.3 1776.1 919.4 1792.8 930.6 S 1823.3 937.5 1855.3 936.7" stroke="#c3c7c1" stroke-width="11" fill="none" stroke-linecap="round"/>
<path d="M1720.6 916.1 C 1753.9 920.8 1776.1 925.0 1792.8 936.1 S 1823.3 943.1 1855.3 942.2" stroke="#aeb3ad" stroke-width="2.5" fill="none"/>
<clipPath id="cb8"><polygon points="1880.8,888.9 1870.6,900.0 1852.5,941.7 1859.4,961.1 1880.8,993.1"/></clipPath><polygon points="1880.8,888.9 1870.6,900.0 1852.5,941.7 1859.4,961.1 1880.8,993.1" fill="#a8673f"/><g clip-path="url(#cb8)"><polygon points="1862.2,958.3 1880.8,961.1 1880.8,993.1" fill="#8a5532" /><polygon points="1840.8,884.0 1851.7,892.8 1842.8,903.7" fill="#b5734a" opacity="0.42"/><polygon points="1860.5,881.9 1871.4,890.7 1862.5,901.6 1851.7,892.8" fill="#b5734a" opacity="0.42"/><polygon points="1851.7,892.8 1862.5,901.6 1853.7,912.5 1842.8,903.7" fill="#9c5f3a" opacity="0.42"/><polygon points="1842.8,903.7 1853.7,912.5 1844.9,923.3" fill="#b5734a" opacity="0.42"/><polygon points="1880.2,879.8 1891.0,888.6 1882.2,899.5 1871.4,890.7" fill="#9c5f3a" opacity="0.42"/><polygon points="1844.9,923.3 1855.8,932.2 1847.0,943.0 1836.1,934.2" fill="#9c5f3a" opacity="0.42"/><polygon points="1873.4,910.4 1884.3,919.2 1875.5,930.1 1864.6,921.3" fill="#9c5f3a" opacity="0.42"/><polygon points="1864.6,921.3 1875.5,930.1 1866.7,941.0" fill="#9c5f3a" opacity="0.42"/><polygon points="1857.9,951.8 1868.7,960.7 1859.9,971.5 1849.0,962.7" fill="#b5734a" opacity="0.42"/><polygon points="1849.0,962.7 1859.9,971.5 1851.1,982.4 1840.2,973.6" fill="#9c5f3a" opacity="0.42"/><polygon points="1877.5,949.8 1888.4,958.6 1879.6,969.5 1868.7,960.7" fill="#b5734a" opacity="0.42"/><polygon points="1851.1,982.4 1862.0,991.2 1853.2,1002.1" fill="#9c5f3a" opacity="0.42"/><polygon points="1870.8,980.4 1881.7,989.2 1872.9,1000.0" fill="#b5734a" opacity="0.42"/><polygon points="1862.0,991.2 1872.9,1000.0 1864.0,1010.9" fill="#b5734a" opacity="0.42"/><polygon points="1853.2,1002.1 1864.0,1010.9 1855.2,1021.8" fill="#9c5f3a" opacity="0.42"/><polygon points="1890.5,978.3 1901.4,987.1 1892.6,998.0 1881.7,989.2" fill="#b5734a" opacity="0.42"/><polygon points="1872.9,1000.0 1883.7,1008.9 1874.9,1019.7" fill="#9c5f3a" opacity="0.42"/></g>
<rect x="1749.8" y="1371.1" width="105.8" height="48.4" rx="8" fill="#0f2216" fill-opacity="0.93"/>
<text x="1802.5" y="1404.6" text-anchor="middle" font-family="'Liberation Sans',sans-serif" font-size="26.8" fill="#e6e6e6" stroke="#e6e6e6" stroke-width="0.35">29;-116</text>
</svg>
</div></div>
</body></html>
